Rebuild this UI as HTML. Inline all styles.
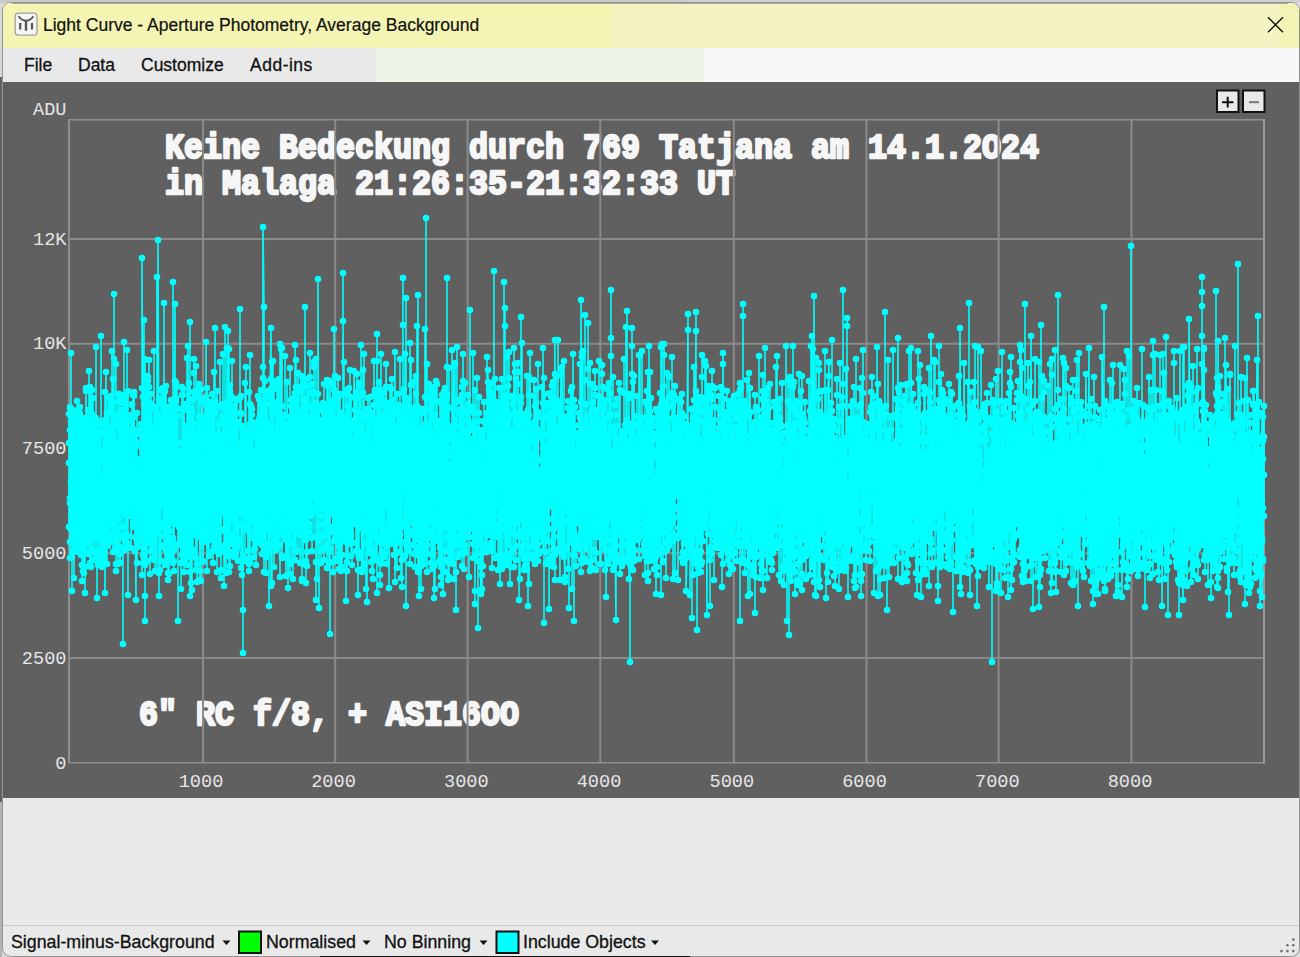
<!DOCTYPE html>
<html><head><meta charset="utf-8">
<style>
html,body{margin:0;padding:0;width:1300px;height:957px;overflow:hidden;background:#d9d9d9;}
body{position:relative;font-family:"Liberation Sans",sans-serif;}
.abs{position:absolute;}
#topbg{left:0;top:0;width:1300px;height:3px;background:linear-gradient(90deg,#c9c9c9 0,#c9c9c9 686px,#d3d0d7 686px);}
#rightbg{left:1299px;top:0;width:1px;height:957px;background:#9a9a9a;}
#win{left:2px;top:2px;width:1296px;height:953px;border:1px solid #939391;border-radius:9px;overflow:hidden;background:#e9e9e9;}
#title{left:0;top:0;width:1296px;height:45px;background:#f4f3c2;}
#titlesat{left:0;top:0;width:608px;height:45px;background:#f4f4b3;}
#titlesat2{left:1276px;top:0;width:20px;height:45px;background:#f3f3b6;}
#titletext{left:40px;top:12px;font-size:17.5px;color:#111;-webkit-text-stroke:0.2px #111;white-space:nowrap;letter-spacing:0px;}
#menu{left:0;top:45px;width:1296px;height:34px;background:#f7f7f7;}
#menu1{left:0;top:0;width:373px;height:34px;background:#e9e9e9;}
#menu2{left:373px;top:0;width:328px;height:34px;background:#eef3e8;}
.mi{top:7px;font-size:17.5px;color:#111;-webkit-text-stroke:0.3px #111;white-space:nowrap;}
#plot{left:0;top:79px;width:1296px;height:716px;background:#606060;overflow:hidden;}
#status{left:0;top:877px;width:1296px;height:76px;}
.st{font-size:17.8px;color:#111;-webkit-text-stroke:0.3px #111;white-space:nowrap;top:932px;}
</style></head>
<body>
<div class="abs" id="topbg"></div>
<div class="abs" style="left:0;top:77px;width:3px;height:725px;background:#616161"></div>
<div class="abs" style="left:0;top:802px;width:2px;height:155px;background:#b2b4b2"></div>
<div class="abs" style="left:1299px;top:10px;width:1px;height:937px;background:#7d7d7d"></div>
<div class="abs" style="left:12px;top:3px;width:1276px;height:1px;background:#a9a994;z-index:5"></div>
<div class="abs" style="left:320px;top:956px;width:370px;height:1px;background:#151515;z-index:5"></div>
<div class="abs" id="win">
  <div class="abs" id="title">
    <div class="abs" id="titlesat"></div>
    <div class="abs" id="titlesat2"></div>
    <svg class="abs" style="left:11px;top:9px" width="24" height="24" viewBox="0 0 24 24">
      <rect x="1.2" y="1.2" width="21.8" height="22" rx="3.2" fill="#f6f6f6" stroke="#a0a0a0" stroke-width="1.3"/>
      <path d="M4.6 4.2 Q7.5 8.3 12 8.8 Q16.5 8.3 19.4 4.2" fill="none" stroke="#555" stroke-width="1.9"/>
      <path d="M12 8 V18.8" stroke="#555" stroke-width="2.4"/>
      <path d="M6.2 11 V17.6 M18 11 V17.6" stroke="#555" stroke-width="2.2"/>
    </svg>
    <div class="abs" id="titletext">Light Curve - Aperture Photometry, Average Background</div>
    <svg class="abs" style="left:1264px;top:13px" width="18" height="18" viewBox="0 0 18 18">
      <path d="M1 1.2 L16 16.2 M16 1.2 L1 16.2" stroke="#111" stroke-width="1.4"/>
    </svg>
  </div>
  <div class="abs" id="menu">
    <div class="abs" id="menu1"></div>
    <div class="abs" id="menu2"></div>
    <div class="abs mi" style="left:21px">File</div>
    <div class="abs mi" style="left:75px">Data</div>
    <div class="abs mi" style="left:138px">Customize</div>
    <div class="abs mi" style="left:247px;letter-spacing:0.5px">Add-ins</div>
  </div>
  <div class="abs" id="plot">
  </div>
</div>

<div class="abs" style="left:3px;top:925px;width:1295px;height:1px;background:#c9c9c9"></div>
<div class="abs st" style="left:11px">Signal-minus-Background</div>
<div class="abs st" style="left:266px">Normalised</div>
<div class="abs st" style="left:384px">No Binning</div>
<div class="abs st" style="left:523px">Include Objects</div>
<svg class="abs" style="left:0;top:900px" width="1300" height="57" viewBox="0 900 1300 57">
  <path d="M222.5 940.5H230.5L226.5 945Z M362.5 940.5H370.5L366.5 945Z M479.5 940.5H487.5L483.5 945Z M651 940.5H659L655 945Z" fill="#111"/>
  <rect x="239" y="931.5" width="22" height="21.5" fill="#00ff00" stroke="#111" stroke-width="2"/>
  <rect x="496.5" y="931.5" width="22" height="21.5" fill="#00ffff" stroke="#111" stroke-width="2"/>
  <g fill="#6a6a6a">
    <circle cx="1293.3" cy="939.6" r="1.3"/><circle cx="1287.4" cy="945.3" r="1.3"/><circle cx="1293.3" cy="945.3" r="1.3"/>
    <circle cx="1281.5" cy="951.1" r="1.3"/><circle cx="1287.4" cy="951.1" r="1.3"/><circle cx="1293.3" cy="951.1" r="1.3"/>
  </g>
</svg>

<svg class="abs" id="chart" style="left:0;top:0" width="1300" height="957" viewBox="0 0 1300 957">
  <defs><clipPath id="pc"><rect x="3" y="82" width="1296" height="716"/></clipPath></defs>
  <g clip-path="url(#pc)">
  <g font-family="Liberation Mono" font-size="18.6" fill="#e6e6e6">
    <text x="66.5" y="114.5" text-anchor="end">ADU</text>
    <text x="66.5" y="244.5" text-anchor="end">12K</text>
    <text x="66.5" y="349" text-anchor="end">10K</text>
    <text x="66.5" y="454" text-anchor="end">7500</text>
    <text x="66.5" y="558.5" text-anchor="end">5000</text>
    <text x="66.5" y="663.5" text-anchor="end">2500</text>
    <text x="66.5" y="768.5" text-anchor="end">0</text>
    <g text-anchor="middle">
    <text x="201" y="786.5">1000</text><text x="333.5" y="786.5">2000</text><text x="466.3" y="786.5">3000</text>
    <text x="599" y="786.5">4000</text><text x="731.8" y="786.5">5000</text><text x="864.5" y="786.5">6000</text>
    <text x="997.3" y="786.5">7000</text><text x="1130" y="786.5">8000</text>
    </g>
  </g>
  <g font-family="Liberation Mono" font-weight="bold" font-size="31.67" fill="#f6f6f6" stroke="#f6f6f6" stroke-width="2.2" stroke-linejoin="round">
    <text transform="translate(165,158) scale(1,1.1)" xml:space="preserve">Keine Bedeckung durch 769 Tatjana am 14.1.2O24</text>
    <text transform="translate(165,194) scale(1,1.1)" xml:space="preserve">in Malaga 21:26:35-21:32:33 UT</text>
    <text transform="translate(139,725) scale(1,1.1)" xml:space="preserve">6" RC f/8, + ASI16OO</text>
  </g>
  <g stroke="#8a8a8a" stroke-width="2" fill="none">
    <path d="M203 119V763 M335.2 119V763 M467.6 119V763 M600.3 119V763 M733.8 119V763 M866.5 119V763 M998.6 119V763 M1131.5 119V763 M69 239H1264 M69 343.75H1264 M69 448.5H1264 M69 553.25H1264 M69 658H1264"/>
    <path d="M69 119.7H1264 M69 762.7H1264" stroke="#8c918a" stroke-width="1.6"/>
    <path d="M69 119V763" stroke="#8e8e8e"/>
    <path d="M1264 119V763.5" stroke="#9a9a9a"/>
  </g>
  <g id="data"><path d="M69 463 69 414 69 443 69 527 70 498 70 407 70 558 70 408 70 430 70 503 70 542 71 529 71 353 71 484 71 464 71 482 71 414 71 422 71 443 72 409 72 523 72 515 72 458 72 557 72 591 72 511 73 477 73 412 73 468 73 499 73 484 73 525 73 544 73 551 74 427 74 530 74 484 74 578 74 422 74 519 74 518 75 443 75 485 75 416 75 481 75 465 75 545 75 490 75 470 76 440 76 534 76 478 76 530 76 514 76 511 76 535 77 445 77 484 77 401 77 460 77 491 77 487 77 497 77 542 78 495 78 513 78 474 78 552 78 410 78 521 78 429 78 527 79 411 79 459 79 547 79 412 79 422 79 433 79 460 80 540 80 536 80 414 80 465 80 540 80 407 80 452 80 447 81 482 81 483 81 528 81 555 81 430 81 442 81 477 82 502 82 419 82 581 82 516 82 565 82 544 82 426 82 464 83 571 83 466 83 420 83 507 83 493 83 441 83 498 84 496 84 435 84 418 84 547 84 427 84 573 84 455 84 424 85 535 85 490 85 433 85 567 85 593 85 463 85 460 86 439 86 525 86 539 86 507 86 553 86 460 86 388 86 391 87 494 87 501 87 463 87 515 87 508 87 476 87 543 88 410 88 430 88 455 88 465 88 419 88 482 88 438 88 554 89 512 89 497 89 371 89 514 89 452 89 455 89 446 90 457 90 387 90 494 90 540 90 508 90 563 90 537 90 391 91 430 91 567 91 486 91 497 91 452 91 432 91 516 92 414 92 461 92 468 92 436 92 390 92 549 92 500 92 434 93 437 93 455 93 398 93 424 93 427 93 418 93 482 93 417 94 559 94 531 94 560 94 531 94 527 94 522 94 474 95 559 95 471 95 533 95 446 95 553 95 538 95 427 95 517 96 418 96 438 96 443 96 530 96 451 96 347 96 434 97 431 97 436 97 598 97 493 97 485 97 552 97 455 97 429 98 524 98 450 98 445 98 565 98 443 98 421 98 534 99 472 99 492 99 478 99 533 99 482 99 459 99 422 99 445 100 535 100 435 100 432 100 540 100 525 100 559 100 457 101 512 101 336 101 424 101 499 101 513 101 485 101 453 101 549 102 503 102 556 102 478 102 567 102 512 102 499 102 499 103 526 103 536 103 462 103 505 103 565 103 425 103 451 103 548 104 551 104 425 104 561 104 531 104 550 104 487 104 421 105 527 105 535 105 392 105 469 105 545 105 479 105 420 105 593 106 372 106 542 106 443 106 434 106 432 106 455 106 476 107 564 107 487 107 445 107 523 107 513 107 461 107 462 107 413 108 546 108 538 108 430 108 489 108 441 108 398 108 432 109 427 109 412 109 505 109 449 109 537 109 452 109 454 109 452 110 470 110 489 110 506 110 542 110 427 110 486 110 493 110 488 111 470 111 481 111 456 111 404 111 524 111 396 111 442 112 408 112 498 112 449 112 429 112 427 112 351 112 533 112 413 113 532 113 552 113 463 113 480 113 402 113 518 113 379 114 506 114 294 114 535 114 494 114 359 114 495 114 509 114 425 115 512 115 550 115 536 115 422 115 443 115 508 115 495 116 542 116 564 116 571 116 459 116 364 116 540 116 415 116 484 117 529 117 442 117 514 117 463 117 536 117 478 117 466 118 474 118 499 118 444 118 426 118 519 118 549 118 564 118 394 119 394 119 417 119 402 119 474 119 483 119 464 119 401 120 554 120 463 120 490 120 547 120 483 120 470 120 563 120 433 121 412 121 456 121 428 121 410 121 430 121 432 121 506 122 512 122 450 122 526 122 396 122 478 122 527 122 403 122 535 123 469 123 538 123 417 123 463 123 414 123 644 123 436 124 465 124 445 124 395 124 513 124 342 124 436 124 438 124 514 125 396 125 541 125 470 125 427 125 550 125 430 125 401 125 424 126 463 126 477 126 396 126 450 126 436 126 547 126 441 127 510 127 350 127 490 127 492 127 503 127 449 127 543 127 485 128 536 128 453 128 391 128 595 128 484 128 446 128 474 129 475 129 455 129 496 129 436 129 421 129 439 129 448 129 491 130 456 130 516 130 446 130 487 130 497 130 446 130 461 131 483 131 437 131 513 131 415 131 430 131 500 131 437 131 548 132 497 132 404 132 511 132 458 132 438 132 405 132 450 133 505 133 527 133 513 133 523 133 488 133 395 133 505 133 497 134 489 134 492 134 394 134 417 134 496 134 396 134 392 135 508 135 464 135 551 135 430 135 517 135 516 135 537 135 490 136 600 136 431 136 481 136 430 136 498 136 513 136 442 137 542 137 511 137 446 137 413 137 563 137 434 137 513 137 493 138 547 138 463 138 523 138 463 138 489 138 459 138 542 139 490 139 478 139 473 139 508 139 540 139 502 139 520 139 526 140 535 140 515 140 430 140 445 140 538 140 538 140 526 141 433 141 501 141 431 141 433 141 472 141 470 141 424 141 518 142 575 142 492 142 468 142 533 142 388 142 460 142 531 142 258 143 531 143 492 143 397 143 555 143 563 143 541 143 505 144 547 144 320 144 530 144 534 144 403 144 542 144 390 144 455 145 490 145 359 145 596 145 396 145 402 145 621 145 565 146 487 146 434 146 435 146 534 146 396 146 410 146 562 146 485 147 561 147 454 147 391 147 376 147 442 147 445 147 465 148 454 148 377 148 381 148 482 148 490 148 543 148 429 148 472 149 519 149 533 149 360 149 500 149 387 149 541 149 534 150 511 150 574 150 403 150 517 150 411 150 458 150 410 150 504 151 536 151 434 151 394 151 551 151 437 151 447 151 527 152 528 152 427 152 517 152 445 152 532 152 409 152 548 152 509 153 558 153 501 153 444 153 532 153 508 153 447 153 473 154 512 154 351 154 480 154 427 154 485 154 450 154 560 154 452 155 484 155 459 155 436 155 498 155 571 155 407 155 438 156 522 156 418 156 503 156 527 156 428 156 520 156 506 156 502 157 571 157 512 157 277 157 473 157 527 157 464 157 518 157 413 158 419 158 445 158 467 158 475 158 533 158 520 158 240 159 496 159 443 159 573 159 463 159 399 159 458 159 596 159 454 160 527 160 432 160 570 160 506 160 417 160 482 160 475 161 403 161 501 161 526 161 480 161 547 161 561 161 473 161 390 162 466 162 483 162 499 162 468 162 433 162 465 162 421 163 388 163 504 163 461 163 474 163 525 163 443 163 417 163 536 164 476 164 468 164 492 164 523 164 303 164 435 164 545 165 469 165 525 165 477 165 391 165 565 165 536 165 523 165 428 166 386 166 551 166 504 166 523 166 489 166 409 166 561 167 534 167 490 167 472 167 468 167 514 167 531 167 500 167 416 168 442 168 559 168 580 168 536 168 407 168 573 168 412 169 478 169 493 169 438 169 465 169 574 169 553 169 482 169 531 170 416 170 545 170 481 170 502 170 446 170 531 170 556 171 489 171 400 171 491 171 497 171 429 171 446 171 421 171 426 172 494 172 433 172 523 172 515 172 486 172 491 172 403 173 538 173 415 173 484 173 543 173 282 173 405 173 563 173 411 174 550 174 524 174 469 174 426 174 571 174 425 174 472 174 561 175 304 175 469 175 490 175 465 175 480 175 381 175 515 176 453 176 520 176 431 176 398 176 383 176 515 176 476 176 402 177 416 177 470 177 408 177 513 177 508 177 387 177 484 178 471 178 416 178 473 178 505 178 545 178 457 178 621 178 457 179 451 179 544 179 527 179 519 179 502 179 456 179 470 180 492 180 443 180 541 180 516 180 524 180 409 180 496 180 472 181 563 181 465 181 451 181 589 181 501 181 459 181 477 182 539 182 456 182 555 182 395 182 544 182 508 182 527 182 387 183 500 183 443 183 389 183 395 183 557 183 467 183 477 184 450 184 494 184 509 184 554 184 572 184 450 184 558 184 404 185 507 185 535 185 562 185 426 185 520 185 533 185 465 186 551 186 498 186 440 186 435 186 452 186 526 186 548 186 552 187 517 187 548 187 502 187 448 187 565 187 358 187 410 188 346 188 511 188 556 188 492 188 440 188 478 188 478 188 556 189 518 189 383 189 402 189 450 189 449 189 511 189 553 189 429 190 572 190 557 190 419 190 454 190 443 190 322 190 596 191 583 191 408 191 410 191 525 191 408 191 505 191 516 191 455 192 590 192 495 192 521 192 465 192 489 192 440 192 412 193 520 193 503 193 392 193 530 193 552 193 550 193 399 193 486 194 535 194 474 194 466 194 359 194 392 194 373 194 531 195 450 195 494 195 426 195 456 195 446 195 459 195 535 195 424 196 570 196 446 196 366 196 492 196 391 196 488 196 558 197 495 197 434 197 564 197 501 197 582 197 476 197 484 197 468 198 529 198 474 198 519 198 434 198 395 198 438 198 486 199 384 199 489 199 417 199 537 199 439 199 506 199 465 199 389 200 580 200 456 200 471 200 512 200 476 200 571 200 519 201 458 201 581 201 475 201 420 201 389 201 401 201 420 201 529 202 438 202 445 202 428 202 399 202 438 202 440 202 517 203 464 203 531 203 540 203 561 203 416 203 430 203 542 203 562 204 526 204 532 204 540 204 420 204 509 204 469 204 538 204 437 205 480 205 536 205 502 205 417 205 402 205 452 205 505 206 427 206 488 206 499 206 405 206 500 206 342 206 510 206 397 207 571 207 477 207 388 207 541 207 542 207 520 207 539 208 511 208 455 208 513 208 497 208 408 208 441 208 480 208 536 209 556 209 466 209 494 209 411 209 457 209 459 209 539 210 484 210 402 210 429 210 525 210 405 210 449 210 518 210 500 211 477 211 540 211 472 211 414 211 470 211 423 211 483 212 474 212 528 212 415 212 516 212 408 212 494 212 441 212 394 213 515 213 415 213 406 213 551 213 464 213 563 213 477 214 515 214 519 214 547 214 533 214 446 214 403 214 503 214 372 215 401 215 503 215 413 215 542 215 434 215 328 215 535 216 449 216 513 216 538 216 524 216 537 216 457 216 486 216 520 217 476 217 507 217 477 217 440 217 391 217 572 217 465 218 470 218 471 218 406 218 551 218 465 218 457 218 407 218 445 219 424 219 554 219 483 219 519 219 511 219 505 219 483 220 471 220 480 220 552 220 547 220 479 220 422 220 362 220 451 221 435 221 570 221 513 221 578 221 483 221 459 221 481 221 531 222 469 222 505 222 483 222 451 222 407 222 503 222 485 223 480 223 404 223 354 223 461 223 455 223 493 223 416 223 504 224 529 224 420 224 505 224 416 224 464 224 511 224 586 225 472 225 552 225 408 225 327 225 509 225 545 225 434 225 509 226 573 226 461 226 507 226 518 226 462 226 405 226 405 227 546 227 481 227 463 227 429 227 348 227 479 227 456 227 462 228 505 228 468 228 526 228 348 228 331 228 537 228 556 229 349 229 516 229 401 229 400 229 400 229 507 229 572 229 507 230 385 230 430 230 566 230 439 230 399 230 392 230 444 231 430 231 418 231 476 231 544 231 420 231 534 231 520 231 396 232 476 232 461 232 406 232 499 232 361 232 417 232 517 233 501 233 543 233 410 233 542 233 552 233 416 233 501 233 457 234 437 234 536 234 557 234 494 234 535 234 412 234 440 235 447 235 449 235 555 235 542 235 399 235 550 235 484 235 521 236 399 236 552 236 527 236 521 236 457 236 441 236 429 236 493 237 546 237 454 237 400 237 549 237 453 237 539 237 497 238 561 238 458 238 422 238 460 238 469 238 462 238 484 238 505 239 482 239 483 239 524 239 542 239 542 239 477 239 504 240 448 240 398 240 510 240 309 240 413 240 514 240 481 240 501 241 458 241 414 241 568 241 396 241 462 241 413 241 450 242 444 242 506 242 426 242 525 242 496 242 446 242 575 242 559 243 430 243 437 243 653 243 610 243 443 243 556 243 436 244 480 244 440 244 477 244 516 244 456 244 490 244 472 244 492 245 528 245 477 245 435 245 383 245 429 245 561 245 457 246 511 246 437 246 367 246 530 246 495 246 500 246 524 246 481 247 478 247 503 247 431 247 496 247 464 247 499 247 471 248 551 248 486 248 526 248 482 248 559 248 455 248 435 248 488 249 571 249 454 249 564 249 392 249 529 249 517 249 489 250 562 250 355 250 511 250 404 250 424 250 483 250 443 250 535 251 406 251 483 251 509 251 432 251 441 251 538 251 495 252 453 252 409 252 483 252 436 252 415 252 424 252 422 252 504 253 522 253 460 253 430 253 506 253 477 253 550 253 435 253 514 254 465 254 557 254 457 254 502 254 466 254 538 254 496 255 538 255 515 255 549 255 505 255 507 255 425 255 423 255 429 256 426 256 485 256 565 256 432 256 451 256 432 256 425 257 428 257 485 257 463 257 466 257 528 257 507 257 543 257 435 258 493 258 525 258 422 258 465 258 450 258 396 258 533 259 486 259 541 259 490 259 419 259 542 259 462 259 399 259 496 260 414 260 498 260 496 260 483 260 520 260 513 260 478 261 390 261 497 261 540 261 421 261 532 261 404 261 448 261 449 262 496 262 503 262 554 262 545 262 502 262 527 262 404 263 483 263 378 263 418 263 539 263 367 263 534 263 554 263 227 264 307 264 551 264 549 264 471 264 459 264 572 264 457 265 522 265 456 265 490 265 478 265 496 265 508 265 381 265 425 266 573 266 489 266 512 266 557 266 530 266 523 266 397 267 444 267 426 267 463 267 505 267 514 267 463 267 515 267 498 268 424 268 552 268 391 268 485 268 464 268 472 268 456 268 527 269 544 269 606 269 524 269 428 269 459 269 466 269 548 270 512 270 437 270 404 270 486 270 492 270 501 270 476 270 397 271 328 271 513 271 586 271 545 271 389 271 394 271 379 272 583 272 503 272 435 272 439 272 412 272 518 272 462 272 362 273 361 273 531 273 413 273 482 273 470 273 438 273 529 274 512 274 381 274 567 274 544 274 499 274 474 274 482 274 438 275 540 275 526 275 431 275 456 275 486 275 530 275 493 276 529 276 406 276 450 276 536 276 550 276 462 276 484 276 463 277 411 277 402 277 446 277 500 277 389 277 492 277 522 278 481 278 491 278 416 278 425 278 545 278 385 278 495 278 466 279 404 279 379 279 419 279 435 279 424 279 498 279 386 280 577 280 438 280 520 280 545 280 515 280 534 280 457 280 344 281 512 281 439 281 429 281 349 281 481 281 469 281 419 282 444 282 348 282 556 282 558 282 406 282 513 282 529 282 523 283 482 283 494 283 532 283 498 283 527 283 453 283 458 284 415 284 428 284 490 284 516 284 428 284 443 284 426 284 424 285 440 285 472 285 536 285 460 285 356 285 504 285 449 285 477 286 576 286 462 286 457 286 488 286 540 286 461 286 425 287 558 287 538 287 509 287 492 287 516 287 471 287 537 287 382 288 499 288 435 288 499 288 448 288 436 288 468 288 588 289 417 289 473 289 543 289 490 289 473 289 468 289 497 289 506 290 509 290 368 290 523 290 574 290 467 290 515 290 564 291 433 291 453 291 461 291 489 291 525 291 400 291 406 291 517 292 509 292 490 292 561 292 402 292 426 292 464 292 421 293 579 293 508 293 487 293 443 293 510 293 427 293 408 293 529 294 506 294 504 294 398 294 529 294 545 294 492 294 459 295 560 295 393 295 521 295 455 295 530 295 421 295 345 295 458 296 360 296 526 296 552 296 448 296 499 296 518 296 387 297 494 297 483 297 441 297 464 297 400 297 521 297 512 297 503 298 532 298 446 298 551 298 503 298 451 298 373 298 504 299 504 299 463 299 457 299 388 299 425 299 497 299 489 299 492 300 533 300 429 300 523 300 535 300 484 300 503 300 563 300 419 301 473 301 492 301 392 301 447 301 527 301 510 301 412 302 386 302 388 302 410 302 534 302 579 302 505 302 581 302 376 303 564 303 381 303 526 303 527 303 490 303 530 303 410 304 452 304 533 304 410 304 444 304 516 304 420 304 409 304 442 305 385 305 412 305 400 305 505 305 307 305 468 305 434 306 536 306 493 306 512 306 399 306 583 306 540 306 561 306 479 307 566 307 521 307 515 307 379 307 552 307 528 307 405 308 483 308 386 308 445 308 512 308 465 308 505 308 436 308 517 309 516 309 526 309 532 309 524 309 418 309 422 309 480 310 448 310 493 310 353 310 506 310 377 310 516 310 393 310 393 311 513 311 430 311 509 311 462 311 427 311 454 311 408 312 436 312 384 312 538 312 463 312 514 312 551 312 450 312 445 313 449 313 392 313 439 313 496 313 498 313 433 313 406 314 433 314 367 314 497 314 447 314 537 314 362 314 460 314 488 315 409 315 507 315 455 315 438 315 462 315 471 315 448 316 496 316 600 316 359 316 407 316 418 316 403 316 485 316 562 317 435 317 492 317 446 317 418 317 503 317 579 317 415 317 456 318 394 318 513 318 457 318 406 318 446 318 491 318 279 319 608 319 525 319 496 319 540 319 424 319 534 319 476 319 511 320 496 320 451 320 472 320 447 320 492 320 475 320 421 321 516 321 458 321 425 321 563 321 420 321 494 321 506 321 434 322 424 322 451 322 406 322 550 322 493 322 451 322 410 323 451 323 470 323 506 323 446 323 479 323 411 323 403 323 456 324 436 324 560 324 536 324 473 324 458 324 384 324 422 325 429 325 548 325 501 325 509 325 430 325 534 325 406 325 524 326 505 326 444 326 461 326 417 326 412 326 526 326 420 327 509 327 483 327 435 327 380 327 490 327 418 327 568 327 529 328 386 328 512 328 475 328 480 328 535 328 544 328 412 329 552 329 563 329 420 329 412 329 424 329 497 329 512 329 478 330 381 330 492 330 634 330 527 330 484 330 548 330 478 331 434 331 485 331 402 331 419 331 490 331 429 331 514 331 424 332 500 332 481 332 404 332 468 332 442 332 431 332 506 332 402 333 572 333 532 333 400 333 527 333 384 333 562 333 491 334 488 334 459 334 490 334 492 334 529 334 390 334 541 334 329 335 534 335 455 335 395 335 511 335 496 335 376 335 456 336 454 336 493 336 559 336 526 336 420 336 456 336 437 336 425 337 426 337 520 337 395 337 419 337 406 337 429 337 481 338 505 338 378 338 445 338 528 338 561 338 537 338 490 338 533 339 445 339 546 339 569 339 396 339 515 339 491 339 528 340 555 340 474 340 461 340 557 340 420 340 394 340 467 340 483 341 542 341 534 341 507 341 431 341 571 341 413 341 465 342 567 342 555 342 469 342 450 342 514 342 416 342 526 342 485 343 522 343 470 343 522 343 540 343 427 343 273 343 321 344 474 344 438 344 362 344 461 344 527 344 517 344 459 344 517 345 534 345 452 345 429 345 523 345 496 345 526 345 485 346 464 346 433 346 542 346 394 346 601 346 504 346 419 346 421 347 472 347 531 347 447 347 390 347 562 347 483 347 571 348 429 348 406 348 556 348 451 348 416 348 544 348 511 348 451 349 507 349 483 349 388 349 475 349 469 349 535 349 532 349 426 350 541 350 453 350 470 350 464 350 370 350 440 350 471 351 495 351 486 351 452 351 397 351 494 351 556 351 535 351 430 352 449 352 475 352 515 352 565 352 479 352 423 352 477 353 441 353 518 353 520 353 454 353 495 353 483 353 543 353 467 354 514 354 462 354 523 354 430 354 506 354 486 354 371 355 424 355 440 355 524 355 420 355 518 355 398 355 410 355 461 356 423 356 479 356 452 356 518 356 392 356 437 356 551 357 520 357 460 357 425 357 515 357 398 357 524 357 374 357 421 358 595 358 482 358 570 358 554 358 468 358 417 358 433 359 503 359 386 359 552 359 415 359 383 359 558 359 415 359 436 360 440 360 430 360 395 360 476 360 523 360 413 360 490 361 522 361 345 361 528 361 526 361 511 361 501 361 515 361 513 362 569 362 523 362 426 362 572 362 494 362 434 362 569 363 528 363 451 363 417 363 370 363 508 363 419 363 393 363 504 364 472 364 415 364 354 364 493 364 564 364 443 364 416 364 479 365 531 365 485 365 434 365 501 365 491 365 530 365 512 366 524 366 521 366 419 366 589 366 444 366 438 366 484 366 461 367 543 367 470 367 486 367 460 367 462 367 602 367 409 368 464 368 442 368 510 368 436 368 471 368 398 368 497 368 398 369 550 369 460 369 553 369 546 369 468 369 550 369 410 370 535 370 397 370 540 370 519 370 414 370 474 370 431 370 397 371 562 371 445 371 418 371 448 371 462 371 518 371 549 372 413 372 473 372 514 372 571 372 466 372 552 372 451 372 483 373 533 373 579 373 486 373 561 373 454 373 480 373 532 374 405 374 464 374 537 374 431 374 361 374 430 374 504 374 395 375 560 375 490 375 527 375 500 375 475 375 390 375 505 376 557 376 423 376 560 376 495 376 525 376 497 376 419 376 468 377 489 377 334 377 420 377 520 377 593 377 484 377 361 378 539 378 406 378 487 378 498 378 398 378 451 378 467 378 542 379 401 379 395 379 423 379 382 379 474 379 508 379 468 380 537 380 466 380 575 380 585 380 441 380 508 380 390 380 469 381 431 381 463 381 415 381 354 381 402 381 421 381 564 381 521 382 484 382 513 382 520 382 431 382 563 382 552 382 447 383 426 383 528 383 393 383 431 383 477 383 539 383 502 383 401 384 418 384 543 384 436 384 400 384 465 384 538 384 557 385 553 385 507 385 425 385 425 385 405 385 458 385 532 385 506 386 434 386 422 386 502 386 442 386 418 386 387 386 364 387 450 387 476 387 473 387 505 387 564 387 546 387 430 387 458 388 463 388 544 388 522 388 482 388 405 388 493 388 538 389 448 389 403 389 445 389 405 389 482 389 507 389 501 389 588 390 428 390 497 390 450 390 408 390 387 390 424 390 511 391 389 391 463 391 489 391 473 391 544 391 420 391 517 391 534 392 379 392 525 392 424 392 499 392 472 392 451 392 541 393 487 393 451 393 459 393 400 393 431 393 531 393 407 393 476 394 473 394 509 394 476 394 455 394 429 394 435 394 555 395 352 395 493 395 450 395 425 395 479 395 414 395 413 395 582 396 507 396 499 396 519 396 436 396 427 396 533 396 448 396 504 397 553 397 394 397 489 397 542 397 568 397 406 397 474 398 460 398 520 398 452 398 500 398 456 398 461 398 411 398 524 399 543 399 424 399 412 399 453 399 405 399 412 399 443 400 497 400 515 400 359 400 552 400 482 400 510 400 535 400 485 401 521 401 478 401 430 401 462 401 578 401 474 401 527 402 502 402 429 402 418 402 560 402 587 402 416 402 426 402 448 403 393 403 438 403 409 403 278 403 325 403 462 403 491 404 463 404 527 404 451 404 408 404 503 404 389 404 466 404 459 405 556 405 542 405 465 405 422 405 473 405 398 405 354 406 447 406 544 406 468 406 485 406 298 406 606 406 465 406 446 407 473 407 503 407 425 407 534 407 420 407 543 407 547 408 529 408 496 408 449 408 442 408 407 408 411 408 433 408 404 409 551 409 420 409 398 409 491 409 500 409 416 409 508 410 436 410 564 410 432 410 464 410 343 410 520 410 535 410 420 411 385 411 414 411 418 411 467 411 516 411 360 411 516 412 453 412 439 412 485 412 440 412 427 412 483 412 433 412 425 413 421 413 468 413 408 413 501 413 545 413 499 413 531 413 495 414 502 414 507 414 524 414 382 414 554 414 432 414 514 415 469 415 426 415 457 415 447 415 428 415 529 415 567 415 512 416 414 416 510 416 422 416 376 416 540 416 394 416 502 417 484 417 406 417 535 417 409 417 326 417 519 417 526 417 487 418 295 418 555 418 552 418 572 418 547 418 495 418 441 419 476 419 461 419 480 419 596 419 507 419 531 419 485 419 408 420 494 420 517 420 567 420 527 420 525 420 481 420 472 421 481 421 457 421 566 421 515 421 431 421 589 421 409 421 462 422 429 422 535 422 499 422 471 422 413 422 504 422 563 423 559 423 437 423 517 423 537 423 478 423 429 423 472 423 538 424 482 424 515 424 554 424 564 424 493 424 528 424 432 425 409 425 445 425 500 425 539 425 329 425 458 425 503 425 397 426 398 426 503 426 469 426 549 426 218 426 424 426 539 427 545 427 512 427 364 427 448 427 572 427 476 427 473 427 483 428 445 428 464 428 475 428 490 428 428 428 554 428 498 428 443 429 538 429 467 429 384 429 490 429 443 429 462 429 509 430 522 430 430 430 432 430 468 430 410 430 434 430 399 430 410 431 391 431 533 431 441 431 395 431 531 431 563 431 459 432 569 432 419 432 387 432 397 432 506 432 514 432 406 432 477 433 447 433 509 433 512 433 521 433 555 433 464 433 520 434 437 434 598 434 541 434 479 434 401 434 392 434 566 434 448 435 537 435 499 435 514 435 484 435 589 435 414 435 468 436 529 436 519 436 424 436 454 436 540 436 511 436 381 436 427 437 470 437 384 437 468 437 471 437 496 437 421 437 486 438 438 438 537 438 498 438 422 438 499 438 434 438 538 438 497 439 504 439 450 439 453 439 523 439 430 439 478 439 562 440 559 440 548 440 478 440 448 440 401 440 543 440 529 440 493 441 468 441 456 441 438 441 403 441 577 441 585 441 567 442 482 442 395 442 550 442 467 442 500 442 497 442 509 442 521 443 594 443 561 443 482 443 483 443 450 443 470 443 397 443 499 444 419 444 512 444 441 444 392 444 419 444 515 444 472 445 560 445 390 445 572 445 513 445 448 445 403 445 388 445 528 446 522 446 417 446 497 446 520 446 418 446 431 446 479 447 367 447 278 447 449 447 398 447 394 447 397 447 447 447 551 448 518 448 407 448 580 448 453 448 537 448 498 448 483 449 577 449 497 449 563 449 435 449 368 449 501 449 426 449 487 450 560 450 523 450 523 450 534 450 561 450 469 450 470 451 515 451 496 451 464 451 553 451 534 451 532 451 433 451 560 452 508 452 496 452 455 452 440 452 350 452 430 452 528 453 564 453 409 453 516 453 455 453 530 453 493 453 484 453 438 454 366 454 483 454 579 454 485 454 488 454 537 454 478 455 504 455 521 455 435 455 545 455 437 455 363 455 476 455 420 456 478 456 502 456 499 456 572 456 610 456 485 456 426 457 525 457 484 457 347 457 400 457 402 457 449 457 452 457 448 458 468 458 478 458 510 458 514 458 557 458 464 458 443 459 465 459 529 459 436 459 542 459 413 459 485 459 473 459 508 460 410 460 552 460 545 460 500 460 511 460 510 460 483 460 536 461 399 461 456 461 530 461 427 461 447 461 481 461 438 462 408 462 395 462 399 462 504 462 566 462 517 462 508 462 387 463 489 463 354 463 381 463 441 463 434 463 554 463 445 464 430 464 538 464 480 464 569 464 521 464 530 464 410 464 528 465 449 465 473 465 494 465 545 465 383 465 553 465 551 466 496 466 437 466 507 466 528 466 474 466 455 466 489 466 464 467 520 467 487 467 494 467 475 467 474 467 413 467 537 468 451 468 443 468 404 468 420 468 528 468 432 468 475 468 395 469 410 469 439 469 472 469 577 469 481 469 530 469 413 470 498 470 408 470 446 470 424 470 310 470 491 470 474 470 537 471 445 471 490 471 477 471 484 471 454 471 492 471 510 472 439 472 513 472 523 472 441 472 528 472 499 472 480 472 455 473 558 473 353 473 446 473 515 473 430 473 407 473 544 474 488 474 422 474 474 474 462 474 427 474 458 474 487 474 454 475 466 475 591 475 604 475 457 475 390 475 422 475 517 475 413 476 469 476 539 476 496 476 523 476 555 476 446 476 445 477 429 477 535 477 378 477 444 477 524 477 546 477 441 477 523 478 561 478 443 478 519 478 468 478 527 478 628 478 492 479 518 479 397 479 502 479 413 479 512 479 437 479 421 479 442 480 507 480 529 480 445 480 441 480 498 480 447 480 541 481 594 481 567 481 553 481 534 481 430 481 484 481 436 481 433 482 524 482 474 482 477 482 589 482 524 482 575 482 488 483 524 483 530 483 430 483 496 483 566 483 442 483 511 483 513 484 528 484 454 484 503 484 402 484 421 484 483 484 442 485 552 485 508 485 423 485 508 485 545 485 465 485 464 485 549 486 547 486 504 486 529 486 524 486 549 486 444 486 497 487 552 487 419 487 413 487 456 487 357 487 429 487 500 487 445 488 531 488 500 488 420 488 382 488 370 488 475 488 474 489 498 489 420 489 535 489 529 489 456 489 517 489 512 489 389 490 495 490 383 490 410 490 391 490 530 490 515 490 465 491 446 491 455 491 530 491 543 491 547 491 483 491 403 491 463 492 568 492 509 492 515 492 516 492 534 492 383 492 494 492 551 493 476 493 414 493 397 493 467 493 454 493 497 493 517 494 410 494 436 494 477 494 271 494 477 494 463 494 515 494 534 495 558 495 406 495 435 495 421 495 438 495 468 495 379 496 446 496 527 496 433 496 537 496 402 496 419 496 531 496 422 497 419 497 426 497 463 497 488 497 450 497 415 497 422 498 525 498 458 498 457 498 570 498 557 498 507 498 556 498 503 499 454 499 414 499 406 499 388 499 437 499 461 499 443 500 584 500 419 500 537 500 536 500 498 500 451 500 412 500 537 501 406 501 450 501 388 501 492 501 567 501 561 501 425 502 492 502 379 502 481 502 569 502 521 502 506 502 404 502 556 503 396 503 422 503 497 503 450 503 475 503 501 503 429 504 431 504 502 504 405 504 282 504 555 504 460 504 509 504 522 505 308 505 475 505 326 505 400 505 529 505 495 505 481 506 565 506 489 506 448 506 560 506 430 506 411 506 514 506 519 507 469 507 506 507 396 507 478 507 512 507 357 507 471 507 561 508 504 508 465 508 413 508 386 508 502 508 396 508 504 509 378 509 545 509 498 509 509 509 445 509 352 509 501 509 526 510 500 510 558 510 584 510 439 510 509 510 416 510 494 511 553 511 443 511 567 511 464 511 510 511 439 511 396 511 532 512 439 512 494 512 482 512 452 512 494 512 521 512 435 513 434 513 549 513 404 513 515 513 449 513 505 513 396 513 460 514 397 514 414 514 348 514 430 514 567 514 451 514 396 515 364 515 523 515 372 515 534 515 473 515 485 515 429 515 464 516 379 516 466 516 546 516 560 516 427 516 420 516 437 517 466 517 445 517 432 517 479 517 521 517 437 517 421 517 415 518 434 518 536 518 428 518 372 518 384 518 489 518 363 519 490 519 494 519 453 519 431 519 600 519 413 519 438 519 420 520 483 520 400 520 493 520 537 520 579 520 465 520 478 521 403 521 317 521 403 521 514 521 443 521 458 521 509 521 397 522 470 522 416 522 553 522 447 522 343 522 438 522 531 523 519 523 428 523 505 523 547 523 546 523 454 523 482 523 421 524 428 524 559 524 570 524 414 524 421 524 445 524 483 524 474 525 417 525 484 525 464 525 457 525 566 525 445 525 479 526 515 526 469 526 488 526 518 526 436 526 435 526 452 526 489 527 556 527 376 527 421 527 516 527 473 527 570 527 513 528 452 528 606 528 425 528 410 528 555 528 419 528 520 528 529 529 470 529 496 529 395 529 415 529 515 529 584 529 377 530 437 530 472 530 484 530 439 530 455 530 475 530 513 530 353 531 534 531 555 531 477 531 424 531 518 531 510 531 518 532 466 532 467 532 547 532 474 532 458 532 529 532 461 532 522 533 520 533 425 533 527 533 500 533 454 533 503 533 559 534 432 534 515 534 517 534 428 534 396 534 380 534 496 534 443 535 421 535 530 535 406 535 564 535 473 535 533 535 532 536 560 536 428 536 547 536 402 536 539 536 498 536 512 536 389 537 555 537 429 537 544 537 418 537 433 537 537 537 458 538 513 538 502 538 544 538 364 538 483 538 471 538 561 538 412 539 531 539 477 539 554 539 496 539 486 539 473 539 514 539 531 540 529 540 493 540 524 540 525 540 531 540 470 540 517 541 504 541 471 541 497 541 416 541 496 541 506 541 436 541 437 542 526 542 439 542 387 542 507 542 537 542 461 542 501 543 511 543 551 543 483 543 403 543 348 543 498 543 482 543 433 544 454 544 378 544 449 544 623 544 453 544 542 544 483 545 530 545 416 545 394 545 464 545 502 545 539 545 472 545 505 546 552 546 525 546 458 546 446 546 564 546 523 546 524 547 499 547 445 547 490 547 406 547 403 547 508 547 435 547 406 548 406 548 529 548 541 548 507 548 418 548 472 548 497 549 529 549 559 549 529 549 519 549 609 549 452 549 426 549 482 550 505 550 393 550 477 550 498 550 421 550 427 550 413 551 470 551 506 551 474 551 397 551 469 551 440 551 420 551 442 552 500 552 542 552 431 552 449 552 386 552 557 552 566 553 405 553 415 553 561 553 452 553 504 553 382 553 506 553 550 554 462 554 567 554 490 554 519 554 529 554 555 554 537 555 340 555 555 555 471 555 374 555 458 555 580 555 407 555 517 556 497 556 400 556 474 556 494 556 491 556 377 556 405 556 524 557 473 557 508 557 508 557 475 557 483 557 500 557 458 558 426 558 436 558 477 558 340 558 549 558 408 558 487 558 469 559 445 559 432 559 413 559 401 559 551 559 466 559 442 560 580 560 490 560 404 560 523 560 580 560 535 560 518 560 520 561 369 561 440 561 503 561 375 561 550 561 538 561 416 562 496 562 422 562 504 562 457 562 448 562 481 562 553 562 367 563 545 563 437 563 483 563 511 563 477 563 510 563 490 564 476 564 435 564 550 564 361 564 470 564 439 564 557 564 552 565 582 565 427 565 503 565 436 565 458 565 577 565 492 566 496 566 483 566 471 566 430 566 419 566 467 566 495 566 417 567 523 567 423 567 504 567 487 567 549 567 521 567 423 568 459 568 470 568 437 568 408 568 522 568 401 568 569 568 457 569 512 569 608 569 469 569 475 569 484 569 426 569 415 570 529 570 415 570 460 570 468 570 508 570 496 570 443 570 411 571 391 571 451 571 521 571 420 571 472 571 516 571 439 571 536 572 475 572 460 572 402 572 444 572 387 572 543 572 589 573 354 573 474 573 501 573 555 573 538 573 492 573 464 573 410 574 477 574 400 574 427 574 468 574 621 574 496 574 532 575 497 575 504 575 537 575 480 575 556 575 407 575 460 575 546 576 497 576 538 576 566 576 493 576 537 576 498 576 452 577 476 577 439 577 452 577 478 577 501 577 496 577 498 577 523 578 440 578 500 578 522 578 509 578 434 578 433 578 471 579 504 579 446 579 413 579 549 579 498 579 425 579 515 579 543 580 461 580 511 580 418 580 477 580 364 580 522 580 544 581 445 581 402 581 572 581 470 581 560 581 476 581 533 581 300 582 476 582 443 582 497 582 563 582 353 582 357 582 534 583 520 583 470 583 501 583 351 583 463 583 499 583 456 583 423 584 456 584 558 584 509 584 544 584 480 584 533 584 470 585 522 585 380 585 533 585 315 585 431 585 514 585 486 585 515 586 526 586 513 586 404 586 470 586 539 586 531 586 549 587 418 587 488 587 505 587 455 587 416 587 471 587 462 587 495 588 486 588 369 588 470 588 323 588 455 588 543 588 562 588 426 589 436 589 536 589 535 589 531 589 515 589 531 589 465 590 502 590 571 590 363 590 384 590 485 590 501 590 507 590 491 591 568 591 478 591 504 591 525 591 518 591 519 591 452 592 384 592 528 592 411 592 449 592 536 592 568 592 433 592 513 593 533 593 502 593 450 593 402 593 481 593 533 593 478 594 521 594 446 594 422 594 560 594 494 594 446 594 550 594 450 595 395 595 488 595 439 595 388 595 501 595 371 595 496 596 458 596 509 596 525 596 553 596 411 596 424 596 570 596 471 597 532 597 437 597 434 597 410 597 426 597 537 597 504 598 466 598 396 598 488 598 511 598 517 598 519 598 504 598 506 599 432 599 465 599 422 599 427 599 525 599 361 599 462 600 564 600 456 600 527 600 501 600 502 600 424 600 521 600 465 601 470 601 564 601 398 601 500 601 508 601 423 601 405 602 489 602 513 602 365 602 467 602 504 602 374 602 542 602 513 603 387 603 480 603 544 603 520 603 451 603 516 603 476 603 441 604 483 604 408 604 400 604 529 604 425 604 448 604 503 605 550 605 505 605 525 605 441 605 489 605 570 605 418 605 476 606 510 606 597 606 470 606 401 606 470 606 456 606 475 607 473 607 481 607 517 607 539 607 389 607 439 607 512 607 508 608 464 608 466 608 440 608 540 608 564 608 549 608 486 609 506 609 471 609 434 609 467 609 461 609 559 609 464 609 383 610 414 610 462 610 393 610 516 610 494 610 417 610 472 611 427 611 505 611 551 611 356 611 290 611 338 611 514 611 519 612 558 612 552 612 498 612 531 612 553 612 477 612 451 613 570 613 519 613 377 613 550 613 533 613 505 613 434 613 552 614 453 614 431 614 555 614 493 614 538 614 529 614 567 615 405 615 560 615 541 615 438 615 496 615 462 615 544 615 533 616 620 616 555 616 526 616 426 616 520 616 438 616 556 617 461 617 490 617 461 617 415 617 559 617 441 617 399 617 562 618 485 618 482 618 518 618 478 618 461 618 441 618 451 619 485 619 513 619 459 619 518 619 383 619 520 619 510 619 535 620 460 620 439 620 474 620 491 620 490 620 512 620 390 620 574 621 546 621 457 621 523 621 474 621 493 621 460 621 561 622 537 622 475 622 564 622 566 622 476 622 474 622 433 622 449 623 447 623 435 623 431 623 529 623 456 623 537 623 535 624 559 624 502 624 545 624 504 624 393 624 515 624 359 624 515 625 534 625 473 625 510 625 480 625 533 625 481 625 425 626 503 626 489 626 487 626 534 626 558 626 425 626 514 626 327 627 486 627 431 627 311 627 420 627 477 627 427 627 559 628 562 628 506 628 484 628 531 628 492 628 446 628 445 628 559 629 482 629 551 629 498 629 527 629 398 629 579 629 394 630 553 630 564 630 513 630 662 630 425 630 441 630 424 630 489 631 564 631 470 631 427 631 545 631 428 631 567 631 467 632 490 632 346 632 469 632 539 632 469 632 328 632 491 632 374 633 501 633 506 633 570 633 500 633 499 633 556 633 382 634 476 634 536 634 550 634 497 634 478 634 491 634 376 634 561 635 532 635 521 635 550 635 416 635 441 635 478 635 416 635 469 636 537 636 459 636 466 636 503 636 531 636 522 636 448 637 535 637 396 637 528 637 521 637 529 637 508 637 513 637 460 638 427 638 523 638 436 638 522 638 477 638 540 638 424 639 485 639 459 639 355 639 453 639 537 639 517 639 454 639 559 640 485 640 425 640 355 640 484 640 499 640 532 640 487 641 493 641 460 641 418 641 454 641 487 641 503 641 446 641 421 642 471 642 474 642 535 642 351 642 484 642 488 642 426 643 439 643 427 643 524 643 550 643 503 643 451 643 511 643 434 644 506 644 442 644 537 644 505 644 544 644 459 644 491 645 450 645 556 645 441 645 402 645 575 645 552 645 444 645 434 646 417 646 533 646 465 646 531 646 513 646 472 646 540 647 496 647 499 647 517 647 552 647 459 647 561 647 391 647 404 648 372 648 460 648 581 648 555 648 512 648 520 648 573 649 402 649 407 649 454 649 346 649 438 649 432 649 517 649 541 650 561 650 491 650 498 650 372 650 504 650 484 650 412 651 548 651 472 651 513 651 470 651 398 651 473 651 427 651 555 652 505 652 558 652 500 652 555 652 421 652 555 652 517 652 436 653 485 653 418 653 527 653 544 653 426 653 519 653 433 654 560 654 569 654 439 654 451 654 477 654 501 654 478 654 544 655 558 655 516 655 477 655 542 655 537 655 516 655 512 656 533 656 532 656 409 656 557 656 594 656 533 656 499 656 542 657 575 657 567 657 544 657 455 657 553 657 411 657 457 658 499 658 470 658 410 658 539 658 457 658 476 658 502 658 500 659 554 659 449 659 510 659 508 659 436 659 524 659 493 660 393 660 476 660 469 660 523 660 445 660 533 660 486 660 505 661 548 661 421 661 458 661 405 661 595 661 347 661 531 662 503 662 523 662 530 662 492 662 490 662 344 662 512 662 430 663 562 663 386 663 430 663 561 663 551 663 489 663 503 664 552 664 485 664 472 664 523 664 483 664 501 664 355 664 344 665 465 665 472 665 513 665 419 665 406 665 525 665 447 666 532 666 406 666 526 666 578 666 453 666 487 666 543 666 402 667 433 667 473 667 453 667 373 667 437 667 448 667 489 667 550 668 540 668 520 668 521 668 512 668 408 668 510 668 528 669 546 669 377 669 441 669 376 669 397 669 546 669 525 669 438 670 528 670 435 670 524 670 535 670 452 670 448 670 419 671 519 671 488 671 514 671 464 671 522 671 449 671 448 671 495 672 523 672 514 672 393 672 357 672 473 672 398 672 484 673 404 673 534 673 579 673 541 673 418 673 507 673 406 673 451 674 474 674 518 674 448 674 438 674 497 674 395 674 419 675 424 675 471 675 573 675 456 675 494 675 386 675 449 675 507 676 443 676 478 676 466 676 437 676 494 676 420 676 473 677 418 677 459 677 466 677 461 677 495 677 418 677 451 677 469 678 400 678 456 678 435 678 538 678 580 678 473 678 509 679 507 679 516 679 399 679 535 679 459 679 426 679 429 679 528 680 474 680 486 680 491 680 506 680 417 680 416 680 514 681 465 681 414 681 485 681 427 681 477 681 419 681 532 681 402 682 394 682 534 682 456 682 558 682 470 682 453 682 497 682 413 683 512 683 535 683 448 683 552 683 522 683 563 683 467 684 494 684 440 684 458 684 439 684 416 684 452 684 543 684 487 685 485 685 481 685 440 685 456 685 512 685 527 685 429 686 424 686 504 686 558 686 536 686 516 686 494 686 429 686 591 687 557 687 507 687 544 687 536 687 480 687 446 687 435 688 314 688 330 688 522 688 435 688 484 688 486 688 444 688 536 689 427 689 547 689 545 689 538 689 451 689 459 689 511 690 535 690 494 690 524 690 529 690 528 690 426 690 595 690 435 691 505 691 486 691 551 691 556 691 409 691 455 691 515 692 409 692 495 692 541 692 499 692 496 692 618 692 493 692 527 693 445 693 575 693 418 693 510 693 518 693 535 693 421 694 433 694 563 694 367 694 492 694 500 694 501 694 400 694 532 695 432 695 527 695 450 695 496 695 494 695 480 695 450 696 331 696 312 696 405 696 533 696 516 696 557 696 465 696 391 697 507 697 529 697 630 697 560 697 550 697 552 697 504 698 407 698 557 698 451 698 505 698 573 698 428 698 528 698 567 699 397 699 530 699 504 699 403 699 421 699 412 699 498 699 480 700 513 700 520 700 401 700 440 700 542 700 481 700 536 701 552 701 572 701 458 701 454 701 452 701 456 701 510 701 565 702 562 702 483 702 403 702 377 702 355 702 411 702 412 703 441 703 398 703 541 703 485 703 490 703 454 703 509 703 444 704 528 704 453 704 422 704 484 704 421 704 463 704 456 705 524 705 494 705 437 705 488 705 361 705 430 705 454 705 505 706 518 706 453 706 454 706 449 706 518 706 511 706 366 707 615 707 409 707 444 707 507 707 475 707 507 707 461 707 477 708 386 708 488 708 440 708 440 708 471 708 411 708 534 709 412 709 397 709 438 709 470 709 438 709 392 709 490 709 429 710 445 710 412 710 504 710 459 710 560 710 606 710 550 711 447 711 395 711 420 711 554 711 547 711 441 711 501 711 521 712 423 712 527 712 371 712 386 712 399 712 456 712 429 713 520 713 425 713 524 713 520 713 464 713 498 713 467 713 431 714 509 714 580 714 465 714 484 714 504 714 502 714 420 714 535 715 407 715 541 715 462 715 388 715 532 715 441 715 495 716 538 716 508 716 449 716 528 716 434 716 539 716 501 716 531 717 500 717 544 717 548 717 534 717 530 717 439 717 464 718 454 718 482 718 517 718 529 718 531 718 408 718 484 718 505 719 548 719 396 719 537 719 428 719 446 719 533 719 453 720 539 720 466 720 509 720 484 720 538 720 507 720 460 720 443 721 505 721 555 721 479 721 461 721 387 721 555 721 505 722 548 722 414 722 540 722 587 722 427 722 423 722 389 722 434 723 495 723 472 723 476 723 364 723 564 723 492 723 353 724 486 724 452 724 399 724 412 724 428 724 471 724 526 724 505 725 548 725 437 725 426 725 459 725 415 725 505 725 501 726 550 726 475 726 432 726 461 726 501 726 491 726 550 726 416 727 427 727 539 727 536 727 481 727 391 727 549 727 524 728 560 728 550 728 554 728 440 728 479 728 468 728 491 728 521 729 444 729 492 729 555 729 476 729 420 729 574 729 405 730 565 730 505 730 442 730 401 730 411 730 432 730 472 730 405 731 455 731 447 731 537 731 495 731 462 731 468 731 484 731 472 732 556 732 546 732 541 732 469 732 506 732 411 732 413 733 569 733 509 733 489 733 455 733 428 733 462 733 524 733 443 734 511 734 474 734 396 734 482 734 496 734 519 734 463 735 475 735 452 735 553 735 446 735 463 735 477 735 502 735 553 736 418 736 402 736 412 736 514 736 419 736 406 736 466 737 427 737 444 737 561 737 542 737 513 737 478 737 501 737 490 738 438 738 394 738 534 738 535 738 445 738 436 738 514 739 469 739 546 739 487 739 419 739 543 739 411 739 506 739 413 740 519 740 383 740 480 740 435 740 511 740 621 740 390 741 387 741 525 741 513 741 402 741 515 741 485 741 513 741 442 742 402 742 454 742 442 742 534 742 455 742 559 742 407 743 484 743 563 743 424 743 493 743 304 743 316 743 440 743 473 744 429 744 544 744 445 744 521 744 468 744 458 744 526 745 401 745 486 745 417 745 573 745 561 745 522 745 527 745 540 746 483 746 481 746 436 746 416 746 453 746 450 746 410 746 512 747 407 747 539 747 380 747 458 747 525 747 520 747 458 748 596 748 520 748 507 748 511 748 483 748 490 748 547 748 444 749 507 749 566 749 414 749 373 749 547 749 533 749 520 750 557 750 527 750 521 750 546 750 472 750 526 750 594 750 388 751 510 751 552 751 455 751 412 751 454 751 485 751 434 752 452 752 457 752 427 752 519 752 478 752 478 752 460 752 475 753 565 753 470 753 569 753 477 753 517 753 428 753 575 754 466 754 527 754 553 754 516 754 477 754 502 754 438 754 545 755 549 755 509 755 554 755 613 755 395 755 422 755 503 756 407 756 518 756 423 756 473 756 577 756 557 756 422 756 518 757 443 757 490 757 540 757 492 757 545 757 555 757 535 758 537 758 546 758 508 758 410 758 536 758 434 758 499 758 460 759 446 759 487 759 516 759 356 759 488 759 536 759 423 760 502 760 500 760 430 760 484 760 526 760 513 760 519 760 578 761 564 761 479 761 433 761 424 761 434 761 417 761 485 762 549 762 464 762 570 762 429 762 556 762 578 762 399 762 539 763 461 763 571 763 391 763 375 763 460 763 444 763 501 763 590 764 542 764 393 764 437 764 485 764 433 764 474 764 474 765 461 765 348 765 410 765 436 765 526 765 411 765 468 765 549 766 520 766 501 766 401 766 395 766 508 766 544 766 540 767 578 767 412 767 520 767 433 767 460 767 425 767 524 767 428 768 476 768 432 768 526 768 555 768 388 768 441 768 407 769 449 769 469 769 548 769 436 769 454 769 463 769 408 769 560 770 470 770 435 770 453 770 562 770 423 770 384 770 466 771 497 771 430 771 560 771 546 771 443 771 471 771 478 771 432 772 464 772 570 772 521 772 434 772 447 772 563 772 480 773 453 773 519 773 548 773 486 773 423 773 452 773 553 773 435 774 454 774 402 774 524 774 543 774 516 774 508 774 541 775 426 775 446 775 504 775 490 775 464 775 406 775 443 775 459 776 433 776 441 776 435 776 421 776 521 776 541 776 367 777 438 777 356 777 531 777 519 777 548 777 405 777 487 777 420 778 427 778 475 778 446 778 469 778 447 778 506 778 484 778 409 779 473 779 438 779 472 779 463 779 521 779 575 779 427 780 476 780 501 780 399 780 418 780 545 780 424 780 505 780 437 781 514 781 449 781 581 781 514 781 510 781 469 781 504 782 504 782 500 782 508 782 450 782 441 782 383 782 426 782 505 783 491 783 521 783 536 783 531 783 512 783 481 783 567 784 483 784 484 784 585 784 519 784 433 784 480 784 571 784 472 785 454 785 531 785 495 785 546 785 503 785 450 785 512 786 552 786 560 786 454 786 460 786 490 786 447 786 346 786 463 787 570 787 526 787 621 787 516 787 546 787 539 787 432 788 425 788 565 788 447 788 380 788 502 788 401 788 425 788 489 789 460 789 635 789 447 789 521 789 544 789 570 789 402 790 468 790 535 790 570 790 451 790 430 790 459 790 576 790 377 791 556 791 511 791 478 791 548 791 385 791 581 791 466 792 566 792 431 792 461 792 545 792 468 792 487 792 457 792 475 793 530 793 387 793 346 793 439 793 405 793 481 793 535 794 557 794 410 794 571 794 424 794 531 794 495 794 382 794 407 795 552 795 434 795 594 795 423 795 572 795 447 795 542 795 498 796 452 796 527 796 412 796 486 796 527 796 401 796 441 797 501 797 402 797 446 797 479 797 554 797 518 797 415 797 521 798 504 798 564 798 585 798 463 798 580 798 477 798 522 799 471 799 374 799 473 799 450 799 497 799 414 799 469 799 425 800 583 800 463 800 520 800 527 800 404 800 473 800 462 801 419 801 391 801 477 801 449 801 458 801 438 801 560 801 540 802 376 802 560 802 574 802 555 802 590 802 526 802 534 803 500 803 425 803 485 803 451 803 464 803 516 803 414 803 525 804 419 804 422 804 489 804 472 804 459 804 430 804 534 805 423 805 453 805 520 805 526 805 549 805 483 805 402 805 501 806 540 806 553 806 527 806 556 806 579 806 443 806 512 807 495 807 490 807 430 807 459 807 545 807 440 807 507 807 483 808 525 808 509 808 541 808 517 808 521 808 442 808 539 809 521 809 494 809 525 809 547 809 494 809 472 809 496 809 381 810 441 810 445 810 454 810 531 810 454 810 503 810 411 810 575 811 496 811 517 811 346 811 436 811 517 811 416 811 461 812 336 812 567 812 562 812 552 812 517 812 433 812 474 812 522 813 413 813 349 813 467 813 551 813 470 813 537 813 549 814 582 814 440 814 533 814 471 814 533 814 423 814 459 814 296 815 595 815 555 815 510 815 484 815 531 815 499 815 441 816 523 816 496 816 509 816 358 816 596 816 434 816 548 816 454 817 523 817 558 817 482 817 416 817 509 817 511 817 506 818 557 818 524 818 399 818 392 818 505 818 432 818 581 818 454 819 363 819 535 819 514 819 472 819 370 819 526 819 580 820 546 820 451 820 556 820 587 820 530 820 412 820 510 820 547 821 452 821 534 821 506 821 426 821 472 821 533 821 419 822 472 822 503 822 417 822 461 822 456 822 490 822 481 822 391 823 546 823 439 823 512 823 438 823 489 823 478 823 440 824 465 824 457 824 503 824 516 824 468 824 560 824 416 824 524 825 422 825 528 825 493 825 351 825 516 825 506 825 453 826 390 826 478 826 417 826 520 826 598 826 430 826 475 826 446 827 445 827 470 827 483 827 553 827 573 827 426 827 538 827 457 828 539 828 449 828 416 828 454 828 582 828 471 828 390 829 362 829 553 829 496 829 471 829 447 829 376 829 483 829 441 830 423 830 480 830 544 830 522 830 446 830 545 830 563 831 523 831 479 831 427 831 505 831 519 831 442 831 418 831 403 832 567 832 485 832 466 832 340 832 538 832 411 832 519 833 559 833 511 833 463 833 542 833 425 833 537 833 508 833 561 834 543 834 438 834 541 834 453 834 419 834 525 834 576 835 478 835 520 835 466 835 545 835 464 835 586 835 507 835 525 836 449 836 492 836 451 836 569 836 527 836 441 836 474 837 430 837 379 837 541 837 395 837 515 837 522 837 456 837 539 838 474 838 469 838 536 838 453 838 490 838 562 838 571 839 531 839 407 839 589 839 514 839 469 839 510 839 545 839 442 840 444 840 363 840 473 840 526 840 421 840 468 840 537 841 462 841 485 841 471 841 502 841 462 841 441 841 502 841 570 842 522 842 397 842 512 842 468 842 542 842 480 842 485 842 470 843 406 843 496 843 290 843 541 843 483 843 497 843 384 844 500 844 466 844 465 844 564 844 554 844 477 844 551 844 560 845 463 845 486 845 549 845 571 845 444 845 502 845 532 846 441 846 438 846 444 846 568 846 443 846 369 846 540 846 487 847 547 847 318 847 326 847 457 847 462 847 535 847 541 848 525 848 515 848 500 848 597 848 513 848 487 848 482 848 561 849 525 849 429 849 469 849 419 849 508 849 525 849 537 850 518 850 557 850 523 850 539 850 508 850 501 850 431 850 425 851 461 851 483 851 482 851 543 851 492 851 472 851 406 852 434 852 541 852 477 852 544 852 464 852 433 852 477 852 544 853 498 853 561 853 465 853 460 853 446 853 401 853 464 854 508 854 430 854 387 854 459 854 465 854 468 854 503 854 581 855 555 855 472 855 588 855 496 855 428 855 575 855 419 856 507 856 484 856 359 856 530 856 430 856 479 856 502 856 587 857 487 857 418 857 442 857 558 857 518 857 503 857 493 858 549 858 536 858 470 858 456 858 442 858 406 858 452 858 562 859 545 859 541 859 551 859 524 859 477 859 519 859 575 859 423 860 479 860 449 860 407 860 486 860 388 860 489 860 456 861 404 861 596 861 458 861 581 861 503 861 434 861 550 861 576 862 378 862 574 862 506 862 437 862 469 862 450 862 482 863 498 863 422 863 550 863 393 863 350 863 434 863 462 863 501 864 434 864 510 864 495 864 436 864 523 864 460 864 463 865 486 865 477 865 548 865 533 865 545 865 504 865 482 865 425 866 550 866 499 866 560 866 445 866 492 866 531 866 504 867 432 867 497 867 424 867 532 867 543 867 470 867 428 867 520 868 459 868 496 868 440 868 425 868 486 868 492 868 535 869 496 869 462 869 485 869 511 869 450 869 551 869 497 869 500 870 561 870 472 870 542 870 487 870 496 870 429 870 412 871 392 871 498 871 528 871 407 871 443 871 452 871 445 871 467 872 484 872 415 872 377 872 475 872 426 872 446 872 448 873 413 873 480 873 429 873 531 873 502 873 413 873 410 873 426 874 452 874 429 874 396 874 477 874 536 874 593 874 420 874 429 875 429 875 404 875 463 875 446 875 472 875 493 875 530 876 501 876 471 876 490 876 503 876 543 876 571 876 532 876 444 877 554 877 405 877 520 877 424 877 347 877 548 877 463 878 430 878 384 878 480 878 462 878 545 878 526 878 596 878 505 879 401 879 493 879 568 879 405 879 436 879 494 879 445 880 579 880 455 880 529 880 523 880 405 880 595 880 420 880 558 881 464 881 521 881 505 881 456 881 412 881 561 881 410 882 475 882 451 882 564 882 420 882 410 882 408 882 519 882 542 883 443 883 487 883 526 883 561 883 506 883 449 883 451 884 483 884 417 884 483 884 480 884 487 884 523 884 578 884 442 885 514 885 523 885 312 885 430 885 496 885 558 885 476 886 482 886 553 886 415 886 406 886 566 886 489 886 513 886 560 887 526 887 559 887 433 887 523 887 451 887 610 887 487 888 558 888 564 888 448 888 509 888 360 888 511 888 556 888 448 889 476 889 558 889 431 889 577 889 462 889 466 889 468 890 555 890 455 890 417 890 446 890 453 890 494 890 473 890 471 891 452 891 430 891 530 891 416 891 473 891 543 891 527 891 551 892 512 892 518 892 499 892 509 892 449 892 502 892 562 893 445 893 540 893 521 893 476 893 478 893 350 893 542 893 489 894 498 894 495 894 467 894 460 894 516 894 486 894 563 895 500 895 453 895 528 895 456 895 456 895 532 895 450 895 520 896 418 896 531 896 482 896 399 896 447 896 498 896 551 897 484 897 461 897 527 897 489 897 414 897 474 897 441 897 475 898 338 898 400 898 497 898 579 898 388 898 540 898 408 899 513 899 512 899 392 899 558 899 466 899 422 899 430 899 520 900 485 900 537 900 450 900 532 900 526 900 535 900 543 901 458 901 526 901 509 901 537 901 508 901 507 901 385 901 462 902 538 902 472 902 502 902 546 902 498 902 435 902 582 903 514 903 416 903 578 903 548 903 529 903 441 903 542 903 402 904 543 904 463 904 431 904 482 904 496 904 512 904 518 905 396 905 490 905 473 905 483 905 411 905 513 905 541 905 422 906 502 906 385 906 461 906 459 906 408 906 472 906 557 906 438 907 563 907 384 907 581 907 434 907 471 907 573 907 435 908 466 908 550 908 425 908 517 908 499 908 411 908 532 908 565 909 457 909 544 909 425 909 535 909 351 909 516 909 458 910 477 910 533 910 477 910 462 910 544 910 406 910 417 910 529 911 538 911 541 911 383 911 490 911 500 911 426 911 348 912 554 912 450 912 528 912 492 912 480 912 428 912 507 912 508 913 407 913 514 913 447 913 516 913 451 913 394 913 477 914 512 914 539 914 472 914 469 914 534 914 487 914 539 914 411 915 525 915 482 915 419 915 550 915 415 915 508 915 470 916 515 916 573 916 414 916 458 916 445 916 534 916 550 916 419 917 478 917 487 917 497 917 595 917 485 917 532 917 475 918 403 918 493 918 428 918 507 918 580 918 351 918 561 918 522 919 512 919 527 919 527 919 457 919 466 919 379 919 534 920 440 920 453 920 365 920 504 920 483 920 546 920 532 920 494 921 475 921 597 921 575 921 553 921 506 921 503 921 454 921 518 922 499 922 537 922 467 922 437 922 522 922 416 922 563 923 524 923 473 923 452 923 489 923 471 923 418 923 512 923 563 924 501 924 500 924 555 924 570 924 457 924 387 924 394 925 494 925 473 925 441 925 389 925 515 925 413 925 454 925 569 926 508 926 574 926 500 926 489 926 455 926 537 926 466 927 483 927 505 927 474 927 494 927 486 927 525 927 419 927 541 928 438 928 456 928 392 928 440 928 530 928 478 928 497 929 534 929 368 929 497 929 493 929 586 929 455 929 424 929 563 930 402 930 393 930 468 930 521 930 457 930 495 930 454 931 553 931 539 931 477 931 543 931 412 931 447 931 412 931 336 932 453 932 567 932 550 932 518 932 501 932 444 932 516 933 508 933 456 933 527 933 525 933 453 933 429 933 485 933 438 934 409 934 417 934 425 934 502 934 360 934 485 934 501 935 498 935 563 935 362 935 421 935 455 935 433 935 469 935 528 936 482 936 510 936 472 936 463 936 484 936 461 936 509 937 439 937 426 937 409 937 448 937 500 937 421 937 492 937 515 938 601 938 416 938 467 938 459 938 586 938 463 938 424 938 489 939 413 939 562 939 509 939 549 939 346 939 382 939 400 940 565 940 418 940 458 940 522 940 403 940 490 940 567 940 525 941 451 941 453 941 374 941 468 941 566 941 418 941 542 942 429 942 458 942 390 942 478 942 486 942 468 942 550 942 537 943 564 943 540 943 462 943 494 943 484 943 480 943 393 944 415 944 540 944 494 944 533 944 505 944 457 944 453 944 502 945 490 945 441 945 506 945 399 945 479 945 419 945 465 946 471 946 429 946 475 946 508 946 524 946 490 946 550 946 477 947 469 947 485 947 533 947 567 947 428 947 542 947 451 948 432 948 404 948 478 948 429 948 483 948 425 948 445 948 557 949 440 949 384 949 402 949 564 949 450 949 544 949 483 950 503 950 505 950 569 950 456 950 423 950 542 950 448 950 540 951 417 951 434 951 563 951 415 951 510 951 526 951 392 952 501 952 521 952 540 952 424 952 394 952 516 952 488 952 468 953 472 953 521 953 454 953 612 953 479 953 529 953 408 953 513 954 510 954 445 954 473 954 484 954 520 954 516 954 514 955 449 955 496 955 406 955 476 955 433 955 518 955 460 955 520 956 477 956 441 956 571 956 444 956 425 956 557 956 520 957 422 957 494 957 571 957 487 957 494 957 427 957 445 957 435 958 453 958 452 958 415 958 565 958 481 958 404 958 458 959 376 959 556 959 483 959 505 959 526 959 403 959 454 959 467 960 432 960 439 960 558 960 587 960 421 960 469 960 328 961 540 961 594 961 516 961 419 961 532 961 483 961 444 961 465 962 471 962 450 962 532 962 512 962 567 962 555 962 409 963 416 963 460 963 560 963 469 963 572 963 527 963 526 963 478 964 552 964 478 964 541 964 476 964 433 964 496 964 363 965 474 965 460 965 470 965 485 965 521 965 425 965 543 965 473 966 450 966 571 966 532 966 454 966 434 966 481 966 478 967 435 967 463 967 499 967 437 967 438 967 441 967 482 967 481 968 543 968 549 968 436 968 542 968 382 968 429 968 573 969 469 969 303 969 490 969 443 969 423 969 463 969 519 969 486 970 496 970 562 970 445 970 570 970 406 970 519 970 595 970 480 971 489 971 445 971 544 971 392 971 458 971 473 971 496 972 506 972 412 972 518 972 545 972 500 972 428 972 414 972 480 973 505 973 430 973 486 973 433 973 423 973 449 973 407 974 465 974 382 974 474 974 542 974 460 974 518 974 480 974 544 975 501 975 346 975 537 975 560 975 418 975 411 975 402 976 447 976 430 976 448 976 432 976 481 976 521 976 564 976 459 977 434 977 435 977 529 977 491 977 417 977 606 977 550 978 470 978 439 978 347 978 567 978 472 978 519 978 576 978 453 979 553 979 502 979 451 979 454 979 419 979 461 979 562 980 562 980 460 980 485 980 517 980 520 980 520 980 521 980 561 981 520 981 438 981 514 981 412 981 351 981 503 981 429 982 482 982 442 982 538 982 429 982 514 982 519 982 516 982 549 983 545 983 550 983 527 983 491 983 505 983 557 983 520 984 558 984 563 984 502 984 480 984 568 984 417 984 408 984 470 985 549 985 548 985 490 985 413 985 404 985 436 985 425 985 552 986 528 986 474 986 562 986 481 986 440 986 419 986 520 987 498 987 553 987 393 987 523 987 500 987 403 987 520 987 475 988 559 988 525 988 547 988 452 988 534 988 534 988 463 989 587 989 450 989 510 989 509 989 418 989 547 989 531 989 509 990 474 990 507 990 551 990 460 990 468 990 530 990 454 991 453 991 490 991 504 991 421 991 518 991 552 991 385 991 562 992 434 992 498 992 467 992 481 992 662 992 494 992 556 993 435 993 476 993 493 993 400 993 448 993 425 993 544 993 425 994 404 994 419 994 515 994 493 994 434 994 453 994 535 995 538 995 426 995 468 995 561 995 420 995 484 995 553 995 477 996 379 996 564 996 526 996 429 996 591 996 557 996 412 997 454 997 477 997 443 997 562 997 583 997 418 997 484 997 587 998 432 998 563 998 524 998 473 998 433 998 371 998 558 999 569 999 523 999 460 999 474 999 462 999 448 999 449 999 453 1000 460 1000 545 1000 437 1000 401 1000 555 1000 452 1000 567 1001 502 1001 492 1001 497 1001 499 1001 521 1001 470 1001 593 1001 486 1002 424 1002 352 1002 442 1002 560 1002 537 1002 429 1002 513 1002 496 1003 522 1003 420 1003 433 1003 474 1003 533 1003 449 1003 485 1004 460 1004 412 1004 456 1004 570 1004 538 1004 527 1004 550 1004 408 1005 578 1005 561 1005 477 1005 578 1005 523 1005 525 1005 514 1006 468 1006 431 1006 538 1006 516 1006 530 1006 403 1006 401 1006 422 1007 560 1007 526 1007 419 1007 448 1007 454 1007 459 1007 488 1008 489 1008 435 1008 558 1008 577 1008 597 1008 413 1008 478 1008 450 1009 488 1009 442 1009 482 1009 531 1009 528 1009 393 1009 530 1010 451 1010 473 1010 547 1010 480 1010 507 1010 485 1010 383 1010 372 1011 487 1011 590 1011 357 1011 387 1011 505 1011 569 1011 465 1012 424 1012 433 1012 580 1012 423 1012 486 1012 500 1012 516 1012 504 1013 532 1013 529 1013 441 1013 493 1013 428 1013 499 1013 563 1014 539 1014 562 1014 495 1014 408 1014 524 1014 484 1014 462 1014 438 1015 555 1015 476 1015 516 1015 480 1015 474 1015 489 1015 511 1016 433 1016 522 1016 524 1016 425 1016 511 1016 441 1016 508 1016 515 1017 443 1017 499 1017 393 1017 524 1017 493 1017 466 1017 400 1017 470 1018 381 1018 459 1018 469 1018 534 1018 483 1018 507 1018 416 1019 441 1019 514 1019 509 1019 520 1019 452 1019 413 1019 456 1019 535 1020 440 1020 550 1020 345 1020 362 1020 557 1020 431 1020 426 1021 534 1021 350 1021 455 1021 500 1021 396 1021 436 1021 455 1021 413 1022 424 1022 368 1022 546 1022 482 1022 576 1022 551 1022 435 1023 564 1023 582 1023 578 1023 483 1023 487 1023 541 1023 498 1023 401 1024 516 1024 455 1024 480 1024 548 1024 492 1024 524 1024 571 1025 445 1025 570 1025 527 1025 570 1025 304 1025 542 1025 530 1025 526 1026 544 1026 524 1026 399 1026 581 1026 441 1026 480 1026 499 1027 556 1027 432 1027 496 1027 529 1027 534 1027 424 1027 490 1027 428 1028 426 1028 552 1028 386 1028 441 1028 363 1028 515 1028 425 1029 410 1029 434 1029 469 1029 515 1029 453 1029 538 1029 541 1029 555 1030 459 1030 481 1030 463 1030 566 1030 454 1030 382 1030 460 1031 486 1031 537 1031 542 1031 581 1031 517 1031 517 1031 528 1031 336 1032 523 1032 418 1032 475 1032 518 1032 405 1032 487 1032 565 1033 539 1033 609 1033 534 1033 450 1033 465 1033 473 1033 440 1033 547 1034 558 1034 509 1034 423 1034 547 1034 464 1034 438 1034 552 1034 456 1035 486 1035 508 1035 465 1035 401 1035 507 1035 359 1035 497 1036 577 1036 446 1036 555 1036 413 1036 430 1036 427 1036 414 1036 483 1037 528 1037 477 1037 489 1037 549 1037 437 1037 493 1037 487 1038 535 1038 530 1038 421 1038 435 1038 577 1038 445 1038 412 1038 491 1039 439 1039 607 1039 446 1039 362 1039 427 1039 460 1039 512 1040 416 1040 452 1040 559 1040 550 1040 587 1040 436 1040 575 1040 505 1041 452 1041 325 1041 478 1041 569 1041 570 1041 468 1041 539 1042 398 1042 531 1042 513 1042 376 1042 430 1042 436 1042 428 1042 551 1043 523 1043 438 1043 420 1043 460 1043 504 1043 474 1043 488 1044 541 1044 433 1044 381 1044 496 1044 538 1044 532 1044 392 1044 417 1045 558 1045 431 1045 509 1045 440 1045 459 1045 510 1045 463 1046 548 1046 505 1046 420 1046 506 1046 496 1046 504 1046 447 1046 547 1047 461 1047 503 1047 535 1047 533 1047 491 1047 547 1047 486 1048 517 1048 485 1048 386 1048 538 1048 499 1048 475 1048 512 1048 522 1049 431 1049 543 1049 453 1049 550 1049 481 1049 471 1049 571 1049 477 1050 522 1050 545 1050 527 1050 422 1050 364 1050 486 1050 523 1051 445 1051 563 1051 416 1051 564 1051 593 1051 515 1051 486 1051 571 1052 503 1052 419 1052 375 1052 583 1052 521 1052 359 1052 427 1053 541 1053 519 1053 455 1053 503 1053 547 1053 501 1053 457 1053 541 1054 538 1054 477 1054 445 1054 454 1054 516 1054 464 1054 556 1055 572 1055 476 1055 547 1055 559 1055 350 1055 409 1055 563 1055 481 1056 592 1056 471 1056 487 1056 494 1056 571 1056 443 1056 478 1057 475 1057 486 1057 426 1057 503 1057 418 1057 543 1057 500 1057 527 1058 529 1058 390 1058 422 1058 295 1058 515 1058 503 1058 405 1059 478 1059 533 1059 435 1059 483 1059 503 1059 434 1059 418 1059 541 1060 414 1060 502 1060 551 1060 451 1060 515 1060 469 1060 450 1061 557 1061 442 1061 470 1061 536 1061 519 1061 572 1061 399 1061 482 1062 533 1062 441 1062 446 1062 468 1062 508 1062 533 1062 422 1063 428 1063 358 1063 495 1063 510 1063 503 1063 399 1063 495 1063 444 1064 363 1064 547 1064 575 1064 552 1064 496 1064 468 1064 409 1065 430 1065 438 1065 488 1065 525 1065 558 1065 510 1065 447 1065 518 1066 563 1066 436 1066 571 1066 502 1066 386 1066 368 1066 473 1066 428 1067 537 1067 438 1067 510 1067 553 1067 511 1067 560 1067 474 1068 460 1068 462 1068 511 1068 457 1068 551 1068 534 1068 456 1068 468 1069 388 1069 513 1069 544 1069 419 1069 430 1069 507 1069 549 1070 462 1070 548 1070 504 1070 447 1070 455 1070 562 1070 546 1070 495 1071 444 1071 539 1071 404 1071 583 1071 489 1071 454 1071 398 1072 487 1072 427 1072 488 1072 534 1072 515 1072 466 1072 483 1072 473 1073 463 1073 380 1073 501 1073 468 1073 585 1073 526 1073 449 1074 451 1074 477 1074 444 1074 472 1074 513 1074 563 1074 412 1074 409 1075 460 1075 540 1075 470 1075 478 1075 411 1075 581 1075 430 1076 504 1076 402 1076 458 1076 544 1076 391 1076 499 1076 560 1076 380 1077 523 1077 457 1077 490 1077 555 1077 567 1077 360 1077 478 1078 437 1078 606 1078 523 1078 453 1078 484 1078 564 1078 515 1078 490 1079 518 1079 418 1079 513 1079 566 1079 458 1079 353 1079 483 1080 517 1080 525 1080 454 1080 563 1080 493 1080 554 1080 467 1080 407 1081 456 1081 402 1081 486 1081 532 1081 524 1081 437 1081 530 1081 472 1082 522 1082 411 1082 505 1082 512 1082 528 1082 507 1082 415 1083 503 1083 448 1083 522 1083 534 1083 571 1083 466 1083 487 1083 527 1084 513 1084 506 1084 577 1084 525 1084 512 1084 478 1084 427 1085 456 1085 497 1085 450 1085 508 1085 544 1085 458 1085 452 1085 458 1086 374 1086 465 1086 415 1086 374 1086 416 1086 490 1086 485 1087 480 1087 526 1087 535 1087 426 1087 470 1087 425 1087 502 1087 477 1088 467 1088 563 1088 471 1088 497 1088 479 1088 542 1088 487 1089 348 1089 459 1089 431 1089 414 1089 406 1089 480 1089 532 1089 499 1090 566 1090 469 1090 524 1090 493 1090 430 1090 561 1090 460 1091 581 1091 485 1091 399 1091 561 1091 489 1091 543 1091 560 1091 455 1092 544 1092 433 1092 485 1092 519 1092 565 1092 444 1092 537 1093 452 1093 604 1093 482 1093 578 1093 489 1093 591 1093 424 1093 451 1094 565 1094 523 1094 377 1094 477 1094 524 1094 564 1094 529 1095 406 1095 438 1095 502 1095 446 1095 502 1095 556 1095 417 1095 585 1096 440 1096 434 1096 562 1096 584 1096 426 1096 594 1096 512 1097 545 1097 491 1097 524 1097 497 1097 579 1097 551 1097 524 1097 484 1098 447 1098 437 1098 448 1098 540 1098 457 1098 506 1098 594 1098 419 1099 454 1099 562 1099 484 1099 439 1099 476 1099 519 1099 431 1100 521 1100 571 1100 574 1100 410 1100 547 1100 444 1100 550 1100 492 1101 521 1101 498 1101 577 1101 531 1101 477 1101 487 1101 559 1102 428 1102 437 1102 508 1102 516 1102 572 1102 553 1102 525 1102 357 1103 439 1103 449 1103 541 1103 484 1103 563 1103 409 1103 500 1104 439 1104 554 1104 491 1104 444 1104 307 1104 581 1104 502 1104 439 1105 526 1105 401 1105 475 1105 420 1105 589 1105 467 1105 591 1106 544 1106 433 1106 547 1106 462 1106 529 1106 422 1106 450 1106 563 1107 558 1107 543 1107 558 1107 424 1107 446 1107 433 1107 504 1108 499 1108 480 1108 440 1108 561 1108 542 1108 463 1108 579 1108 406 1109 574 1109 413 1109 544 1109 531 1109 505 1109 459 1109 425 1110 492 1110 407 1110 410 1110 417 1110 512 1110 380 1110 571 1110 510 1111 496 1111 543 1111 414 1111 503 1111 571 1111 549 1111 576 1112 475 1112 503 1112 495 1112 479 1112 383 1112 514 1112 495 1112 472 1113 418 1113 434 1113 454 1113 551 1113 365 1113 428 1113 520 1113 430 1114 432 1114 450 1114 438 1114 461 1114 440 1114 451 1114 564 1115 546 1115 548 1115 479 1115 556 1115 466 1115 405 1115 421 1115 562 1116 467 1116 418 1116 437 1116 570 1116 529 1116 522 1116 596 1117 462 1117 534 1117 402 1117 416 1117 480 1117 504 1117 413 1117 532 1118 423 1118 458 1118 585 1118 456 1118 426 1118 592 1118 416 1119 418 1119 470 1119 409 1119 498 1119 461 1119 504 1119 489 1119 445 1120 487 1120 365 1120 509 1120 529 1120 506 1120 427 1120 461 1121 486 1121 415 1121 494 1121 514 1121 406 1121 535 1121 441 1121 552 1122 475 1122 470 1122 436 1122 570 1122 597 1122 404 1122 423 1123 536 1123 470 1123 562 1123 479 1123 506 1123 466 1123 520 1123 545 1124 430 1124 438 1124 566 1124 417 1124 369 1124 523 1124 428 1125 394 1125 520 1125 536 1125 469 1125 380 1125 471 1125 492 1125 432 1126 531 1126 538 1126 458 1126 537 1126 441 1126 468 1126 456 1127 525 1127 482 1127 546 1127 541 1127 587 1127 351 1127 487 1127 458 1128 571 1128 531 1128 579 1128 432 1128 566 1128 471 1128 433 1129 537 1129 356 1129 410 1129 556 1129 548 1129 446 1129 466 1129 487 1130 437 1130 427 1130 475 1130 529 1130 428 1130 492 1130 482 1130 528 1131 571 1131 246 1131 516 1131 445 1131 454 1131 461 1131 473 1132 449 1132 416 1132 455 1132 531 1132 474 1132 529 1132 519 1132 519 1133 511 1133 523 1133 519 1133 411 1133 525 1133 455 1133 569 1134 525 1134 567 1134 450 1134 401 1134 558 1134 435 1134 504 1134 424 1135 531 1135 522 1135 475 1135 561 1135 408 1135 538 1135 567 1136 454 1136 446 1136 524 1136 406 1136 490 1136 465 1136 547 1136 554 1137 521 1137 388 1137 497 1137 418 1137 466 1137 482 1137 489 1138 482 1138 480 1138 450 1138 505 1138 487 1138 576 1138 423 1138 570 1139 429 1139 455 1139 503 1139 403 1139 569 1139 502 1139 520 1140 488 1140 466 1140 437 1140 430 1140 563 1140 465 1140 483 1140 450 1141 460 1141 510 1141 538 1141 542 1141 445 1141 512 1141 508 1142 485 1142 500 1142 436 1142 528 1142 510 1142 349 1142 422 1142 487 1143 428 1143 565 1143 481 1143 510 1143 431 1143 553 1143 405 1144 471 1144 482 1144 503 1144 507 1144 521 1144 564 1144 473 1144 543 1145 569 1145 529 1145 548 1145 503 1145 509 1145 607 1145 478 1145 458 1146 529 1146 459 1146 422 1146 407 1146 445 1146 466 1146 433 1147 546 1147 435 1147 448 1147 457 1147 486 1147 570 1147 547 1147 458 1148 418 1148 435 1148 542 1148 428 1148 492 1148 548 1148 534 1149 510 1149 555 1149 377 1149 529 1149 468 1149 477 1149 506 1149 442 1150 424 1150 412 1150 502 1150 556 1150 578 1150 522 1150 564 1151 458 1151 484 1151 390 1151 420 1151 421 1151 493 1151 409 1151 468 1152 494 1152 459 1152 409 1152 544 1152 469 1152 526 1152 408 1153 574 1153 355 1153 516 1153 475 1153 462 1153 407 1153 341 1153 517 1154 546 1154 529 1154 541 1154 545 1154 425 1154 491 1154 547 1155 500 1155 530 1155 556 1155 478 1155 480 1155 452 1155 354 1155 431 1156 511 1156 479 1156 438 1156 519 1156 432 1156 518 1156 390 1157 560 1157 466 1157 520 1157 461 1157 483 1157 459 1157 473 1157 537 1158 430 1158 572 1158 406 1158 479 1158 508 1158 449 1158 486 1159 425 1159 416 1159 519 1159 426 1159 580 1159 463 1159 450 1159 485 1160 542 1160 425 1160 441 1160 508 1160 562 1160 355 1160 460 1160 430 1161 440 1161 561 1161 512 1161 508 1161 516 1161 510 1161 443 1162 419 1162 515 1162 507 1162 455 1162 445 1162 522 1162 391 1162 606 1163 428 1163 535 1163 479 1163 493 1163 434 1163 354 1163 441 1164 448 1164 542 1164 403 1164 445 1164 541 1164 405 1164 461 1164 373 1165 486 1165 559 1165 474 1165 442 1165 579 1165 418 1165 532 1166 484 1166 421 1166 453 1166 337 1166 415 1166 564 1166 481 1166 521 1167 443 1167 562 1167 545 1167 481 1167 570 1167 466 1167 446 1168 416 1168 549 1168 485 1168 442 1168 615 1168 483 1168 531 1168 417 1169 477 1169 419 1169 562 1169 473 1169 401 1169 540 1169 489 1170 460 1170 492 1170 473 1170 539 1170 484 1170 488 1170 464 1170 407 1171 495 1171 507 1171 538 1171 473 1171 523 1171 421 1171 519 1172 551 1172 504 1172 408 1172 506 1172 525 1172 419 1172 453 1172 506 1173 536 1173 517 1173 504 1173 454 1173 480 1173 417 1173 412 1174 453 1174 508 1174 351 1174 462 1174 363 1174 438 1174 441 1174 514 1175 452 1175 504 1175 460 1175 555 1175 442 1175 448 1175 546 1176 516 1176 524 1176 511 1176 443 1176 418 1176 454 1176 562 1176 413 1177 398 1177 567 1177 460 1177 460 1177 474 1177 451 1177 557 1177 507 1178 523 1178 484 1178 553 1178 419 1178 555 1178 580 1178 484 1179 583 1179 615 1179 560 1179 446 1179 556 1179 467 1179 507 1179 528 1180 520 1180 511 1180 504 1180 451 1180 553 1180 351 1180 453 1181 550 1181 453 1181 493 1181 576 1181 461 1181 539 1181 422 1181 416 1182 418 1182 410 1182 563 1182 578 1182 512 1182 522 1182 518 1183 600 1183 347 1183 451 1183 412 1183 459 1183 418 1183 571 1183 585 1184 480 1184 439 1184 512 1184 347 1184 580 1184 453 1184 442 1185 511 1185 438 1185 453 1185 435 1185 461 1185 538 1185 552 1185 543 1186 571 1186 407 1186 456 1186 480 1186 516 1186 478 1186 491 1187 451 1187 544 1187 533 1187 558 1187 507 1187 415 1187 386 1187 586 1188 439 1188 494 1188 396 1188 395 1188 458 1188 519 1188 427 1189 492 1189 413 1189 509 1189 557 1189 463 1189 476 1189 383 1189 319 1190 442 1190 464 1190 447 1190 475 1190 543 1190 391 1190 468 1191 478 1191 471 1191 411 1191 503 1191 582 1191 386 1191 409 1191 522 1192 505 1192 538 1192 516 1192 411 1192 486 1192 467 1192 569 1192 507 1193 566 1193 521 1193 527 1193 514 1193 366 1193 437 1193 521 1194 441 1194 526 1194 575 1194 520 1194 435 1194 518 1194 433 1194 446 1195 519 1195 538 1195 546 1195 512 1195 474 1195 515 1195 409 1196 392 1196 448 1196 560 1196 406 1196 564 1196 436 1196 487 1196 497 1197 561 1197 547 1197 507 1197 421 1197 349 1197 548 1197 476 1198 549 1198 565 1198 473 1198 489 1198 452 1198 388 1198 579 1198 487 1199 447 1199 471 1199 474 1199 497 1199 479 1199 543 1199 480 1200 426 1200 519 1200 495 1200 489 1200 435 1200 540 1200 507 1200 446 1201 515 1201 439 1201 508 1201 528 1201 532 1201 524 1201 489 1202 498 1202 364 1202 277 1202 292 1202 306 1202 336 1202 404 1202 438 1203 537 1203 402 1203 525 1203 544 1203 439 1203 545 1203 411 1204 348 1204 560 1204 493 1204 370 1204 474 1204 486 1204 467 1204 349 1205 486 1205 463 1205 411 1205 572 1205 523 1205 555 1205 545 1206 527 1206 405 1206 510 1206 454 1206 520 1206 405 1206 519 1206 478 1207 517 1207 560 1207 527 1207 491 1207 511 1207 555 1207 424 1208 526 1208 585 1208 449 1208 479 1208 455 1208 531 1208 558 1208 477 1209 512 1209 474 1209 516 1209 512 1209 550 1209 530 1209 529 1209 474 1210 505 1210 427 1210 546 1210 415 1210 518 1210 492 1210 430 1211 434 1211 435 1211 471 1211 528 1211 480 1211 462 1211 582 1211 598 1212 420 1212 442 1212 426 1212 534 1212 418 1212 547 1212 553 1213 519 1213 517 1213 571 1213 442 1213 418 1213 561 1213 536 1213 528 1214 523 1214 505 1214 536 1214 501 1214 517 1214 417 1214 548 1215 558 1215 434 1215 549 1215 478 1215 467 1215 500 1215 430 1215 520 1216 556 1216 569 1216 441 1216 545 1216 291 1216 442 1216 393 1217 587 1217 406 1217 414 1217 396 1217 566 1217 378 1217 458 1217 539 1218 390 1218 578 1218 588 1218 571 1218 488 1218 387 1218 341 1219 515 1219 407 1219 538 1219 489 1219 547 1219 496 1219 499 1219 541 1220 545 1220 448 1220 512 1220 461 1220 552 1220 376 1220 567 1221 548 1221 466 1221 527 1221 545 1221 517 1221 428 1221 422 1221 528 1222 466 1222 551 1222 470 1222 443 1222 414 1222 528 1222 492 1223 402 1223 394 1223 418 1223 498 1223 443 1223 534 1223 470 1223 512 1224 547 1224 535 1224 414 1224 518 1224 522 1224 535 1224 433 1224 559 1225 526 1225 471 1225 432 1225 437 1225 432 1225 338 1225 520 1226 526 1226 527 1226 511 1226 444 1226 532 1226 529 1226 477 1226 365 1227 514 1227 447 1227 571 1227 504 1227 507 1227 568 1227 496 1228 421 1228 541 1228 535 1228 592 1228 451 1228 495 1228 477 1228 389 1229 511 1229 615 1229 519 1229 431 1229 500 1229 539 1229 558 1230 520 1230 375 1230 466 1230 459 1230 505 1230 528 1230 374 1230 515 1231 532 1231 497 1231 426 1231 563 1231 524 1231 460 1231 496 1232 472 1232 545 1232 480 1232 526 1232 548 1232 436 1232 503 1232 425 1233 428 1233 453 1233 518 1233 449 1233 558 1233 447 1233 511 1234 451 1234 575 1234 489 1234 546 1234 548 1234 505 1234 530 1234 454 1235 514 1235 515 1235 346 1235 482 1235 423 1235 455 1235 470 1236 478 1236 444 1236 485 1236 479 1236 469 1236 551 1236 445 1236 522 1237 510 1237 468 1237 494 1237 563 1237 414 1237 465 1237 483 1238 492 1238 444 1238 439 1238 485 1238 264 1238 429 1238 465 1238 469 1239 403 1239 542 1239 479 1239 574 1239 495 1239 494 1239 475 1240 479 1240 430 1240 486 1240 571 1240 541 1240 577 1240 436 1240 532 1241 582 1241 377 1241 423 1241 454 1241 454 1241 447 1241 441 1241 516 1242 415 1242 434 1242 540 1242 503 1242 532 1242 491 1242 477 1243 508 1243 572 1243 421 1243 423 1243 515 1243 523 1243 467 1243 418 1244 491 1244 446 1244 454 1244 572 1244 401 1244 424 1244 437 1245 441 1245 519 1245 435 1245 604 1245 378 1245 485 1245 497 1245 495 1246 488 1246 438 1246 467 1246 585 1246 489 1246 462 1246 535 1247 515 1247 509 1247 559 1247 521 1247 358 1247 537 1247 530 1247 582 1248 571 1248 526 1248 520 1248 400 1248 446 1248 564 1248 548 1249 441 1249 442 1249 462 1249 515 1249 468 1249 480 1249 593 1249 467 1250 547 1250 423 1250 455 1250 462 1250 587 1250 469 1250 415 1251 584 1251 546 1251 491 1251 481 1251 497 1251 532 1251 441 1251 433 1252 516 1252 456 1252 558 1252 458 1252 495 1252 529 1252 506 1253 547 1253 550 1253 391 1253 471 1253 404 1253 475 1253 405 1253 493 1254 391 1254 551 1254 542 1254 456 1254 542 1254 545 1254 472 1255 578 1255 407 1255 568 1255 435 1255 422 1255 516 1255 536 1255 546 1256 442 1256 419 1256 561 1256 570 1256 467 1256 447 1256 561 1256 508 1257 360 1257 517 1257 548 1257 524 1257 412 1257 544 1257 404 1258 570 1258 547 1258 454 1258 442 1258 316 1258 484 1258 549 1258 441 1259 542 1259 413 1259 496 1259 510 1259 402 1259 480 1259 574 1260 463 1260 504 1260 497 1260 606 1260 469 1260 450 1260 508 1260 591 1261 576 1261 572 1261 530 1261 528 1261 531 1261 472 1261 514 1262 413 1262 457 1262 438 1262 451 1262 542 1262 500 1262 539 1262 597 1263 436 1263 561 1263 441 1263 508 1263 559 1263 417 1263 459 1264 437 1264 475 1264 406 1264 516" fill="none" stroke="#00ffff" stroke-width="1.6" shape-rendering="auto"/><path d="M69 463h0M69 414h0M69 443h0M69 527h0M70 498h0M70 407h0M70 558h0M70 408h0M70 430h0M70 503h0M70 542h0M71 529h0M71 353h0M71 484h0M71 464h0M71 482h0M71 414h0M71 422h0M71 443h0M72 409h0M72 523h0M72 515h0M72 458h0M72 557h0M72 591h0M72 511h0M73 477h0M73 412h0M73 468h0M73 499h0M73 484h0M73 525h0M73 544h0M73 551h0M74 427h0M74 530h0M74 484h0M74 578h0M74 422h0M74 519h0M74 518h0M75 443h0M75 485h0M75 416h0M75 481h0M75 465h0M75 545h0M75 490h0M75 470h0M76 440h0M76 534h0M76 478h0M76 530h0M76 514h0M76 511h0M76 535h0M77 445h0M77 484h0M77 401h0M77 460h0M77 491h0M77 487h0M77 497h0M77 542h0M78 495h0M78 513h0M78 474h0M78 552h0M78 410h0M78 521h0M78 429h0M78 527h0M79 411h0M79 459h0M79 547h0M79 412h0M79 422h0M79 433h0M79 460h0M80 540h0M80 536h0M80 414h0M80 465h0M80 540h0M80 407h0M80 452h0M80 447h0M81 482h0M81 483h0M81 528h0M81 555h0M81 430h0M81 442h0M81 477h0M82 502h0M82 419h0M82 581h0M82 516h0M82 565h0M82 544h0M82 426h0M82 464h0M83 571h0M83 466h0M83 420h0M83 507h0M83 493h0M83 441h0M83 498h0M84 496h0M84 435h0M84 418h0M84 547h0M84 427h0M84 573h0M84 455h0M84 424h0M85 535h0M85 490h0M85 433h0M85 567h0M85 593h0M85 463h0M85 460h0M86 439h0M86 525h0M86 539h0M86 507h0M86 553h0M86 460h0M86 388h0M86 391h0M87 494h0M87 501h0M87 463h0M87 515h0M87 508h0M87 476h0M87 543h0M88 410h0M88 430h0M88 455h0M88 465h0M88 419h0M88 482h0M88 438h0M88 554h0M89 512h0M89 497h0M89 371h0M89 514h0M89 452h0M89 455h0M89 446h0M90 457h0M90 387h0M90 494h0M90 540h0M90 508h0M90 563h0M90 537h0M90 391h0M91 430h0M91 567h0M91 486h0M91 497h0M91 452h0M91 432h0M91 516h0M92 414h0M92 461h0M92 468h0M92 436h0M92 390h0M92 549h0M92 500h0M92 434h0M93 437h0M93 455h0M93 398h0M93 424h0M93 427h0M93 418h0M93 482h0M93 417h0M94 559h0M94 531h0M94 560h0M94 531h0M94 527h0M94 522h0M94 474h0M95 559h0M95 471h0M95 533h0M95 446h0M95 553h0M95 538h0M95 427h0M95 517h0M96 418h0M96 438h0M96 443h0M96 530h0M96 451h0M96 347h0M96 434h0M97 431h0M97 436h0M97 598h0M97 493h0M97 485h0M97 552h0M97 455h0M97 429h0M98 524h0M98 450h0M98 445h0M98 565h0M98 443h0M98 421h0M98 534h0M99 472h0M99 492h0M99 478h0M99 533h0M99 482h0M99 459h0M99 422h0M99 445h0M100 535h0M100 435h0M100 432h0M100 540h0M100 525h0M100 559h0M100 457h0M101 512h0M101 336h0M101 424h0M101 499h0M101 513h0M101 485h0M101 453h0M101 549h0M102 503h0M102 556h0M102 478h0M102 567h0M102 512h0M102 499h0M102 499h0M103 526h0M103 536h0M103 462h0M103 505h0M103 565h0M103 425h0M103 451h0M103 548h0M104 551h0M104 425h0M104 561h0M104 531h0M104 550h0M104 487h0M104 421h0M105 527h0M105 535h0M105 392h0M105 469h0M105 545h0M105 479h0M105 420h0M105 593h0M106 372h0M106 542h0M106 443h0M106 434h0M106 432h0M106 455h0M106 476h0M107 564h0M107 487h0M107 445h0M107 523h0M107 513h0M107 461h0M107 462h0M107 413h0M108 546h0M108 538h0M108 430h0M108 489h0M108 441h0M108 398h0M108 432h0M109 427h0M109 412h0M109 505h0M109 449h0M109 537h0M109 452h0M109 454h0M109 452h0M110 470h0M110 489h0M110 506h0M110 542h0M110 427h0M110 486h0M110 493h0M110 488h0M111 470h0M111 481h0M111 456h0M111 404h0M111 524h0M111 396h0M111 442h0M112 408h0M112 498h0M112 449h0M112 429h0M112 427h0M112 351h0M112 533h0M112 413h0M113 532h0M113 552h0M113 463h0M113 480h0M113 402h0M113 518h0M113 379h0M114 506h0M114 294h0M114 535h0M114 494h0M114 359h0M114 495h0M114 509h0M114 425h0M115 512h0M115 550h0M115 536h0M115 422h0M115 443h0M115 508h0M115 495h0M116 542h0M116 564h0M116 571h0M116 459h0M116 364h0M116 540h0M116 415h0M116 484h0M117 529h0M117 442h0M117 514h0M117 463h0M117 536h0M117 478h0M117 466h0M118 474h0M118 499h0M118 444h0M118 426h0M118 519h0M118 549h0M118 564h0M118 394h0M119 394h0M119 417h0M119 402h0M119 474h0M119 483h0M119 464h0M119 401h0M120 554h0M120 463h0M120 490h0M120 547h0M120 483h0M120 470h0M120 563h0M120 433h0M121 412h0M121 456h0M121 428h0M121 410h0M121 430h0M121 432h0M121 506h0M122 512h0M122 450h0M122 526h0M122 396h0M122 478h0M122 527h0M122 403h0M122 535h0M123 469h0M123 538h0M123 417h0M123 463h0M123 414h0M123 644h0M123 436h0M124 465h0M124 445h0M124 395h0M124 513h0M124 342h0M124 436h0M124 438h0M124 514h0M125 396h0M125 541h0M125 470h0M125 427h0M125 550h0M125 430h0M125 401h0M125 424h0M126 463h0M126 477h0M126 396h0M126 450h0M126 436h0M126 547h0M126 441h0M127 510h0M127 350h0M127 490h0M127 492h0M127 503h0M127 449h0M127 543h0M127 485h0M128 536h0M128 453h0M128 391h0M128 595h0M128 484h0M128 446h0M128 474h0M129 475h0M129 455h0M129 496h0M129 436h0M129 421h0M129 439h0M129 448h0M129 491h0M130 456h0M130 516h0M130 446h0M130 487h0M130 497h0M130 446h0M130 461h0M131 483h0M131 437h0M131 513h0M131 415h0M131 430h0M131 500h0M131 437h0M131 548h0M132 497h0M132 404h0M132 511h0M132 458h0M132 438h0M132 405h0M132 450h0M133 505h0M133 527h0M133 513h0M133 523h0M133 488h0M133 395h0M133 505h0M133 497h0M134 489h0M134 492h0M134 394h0M134 417h0M134 496h0M134 396h0M134 392h0M135 508h0M135 464h0M135 551h0M135 430h0M135 517h0M135 516h0M135 537h0M135 490h0M136 600h0M136 431h0M136 481h0M136 430h0M136 498h0M136 513h0M136 442h0M137 542h0M137 511h0M137 446h0M137 413h0M137 563h0M137 434h0M137 513h0M137 493h0M138 547h0M138 463h0M138 523h0M138 463h0M138 489h0M138 459h0M138 542h0M139 490h0M139 478h0M139 473h0M139 508h0M139 540h0M139 502h0M139 520h0M139 526h0M140 535h0M140 515h0M140 430h0M140 445h0M140 538h0M140 538h0M140 526h0M141 433h0M141 501h0M141 431h0M141 433h0M141 472h0M141 470h0M141 424h0M141 518h0M142 575h0M142 492h0M142 468h0M142 533h0M142 388h0M142 460h0M142 531h0M142 258h0M143 531h0M143 492h0M143 397h0M143 555h0M143 563h0M143 541h0M143 505h0M144 547h0M144 320h0M144 530h0M144 534h0M144 403h0M144 542h0M144 390h0M144 455h0M145 490h0M145 359h0M145 596h0M145 396h0M145 402h0M145 621h0M145 565h0M146 487h0M146 434h0M146 435h0M146 534h0M146 396h0M146 410h0M146 562h0M146 485h0M147 561h0M147 454h0M147 391h0M147 376h0M147 442h0M147 445h0M147 465h0M148 454h0M148 377h0M148 381h0M148 482h0M148 490h0M148 543h0M148 429h0M148 472h0M149 519h0M149 533h0M149 360h0M149 500h0M149 387h0M149 541h0M149 534h0M150 511h0M150 574h0M150 403h0M150 517h0M150 411h0M150 458h0M150 410h0M150 504h0M151 536h0M151 434h0M151 394h0M151 551h0M151 437h0M151 447h0M151 527h0M152 528h0M152 427h0M152 517h0M152 445h0M152 532h0M152 409h0M152 548h0M152 509h0M153 558h0M153 501h0M153 444h0M153 532h0M153 508h0M153 447h0M153 473h0M154 512h0M154 351h0M154 480h0M154 427h0M154 485h0M154 450h0M154 560h0M154 452h0M155 484h0M155 459h0M155 436h0M155 498h0M155 571h0M155 407h0M155 438h0M156 522h0M156 418h0M156 503h0M156 527h0M156 428h0M156 520h0M156 506h0M156 502h0M157 571h0M157 512h0M157 277h0M157 473h0M157 527h0M157 464h0M157 518h0M157 413h0M158 419h0M158 445h0M158 467h0M158 475h0M158 533h0M158 520h0M158 240h0M159 496h0M159 443h0M159 573h0M159 463h0M159 399h0M159 458h0M159 596h0M159 454h0M160 527h0M160 432h0M160 570h0M160 506h0M160 417h0M160 482h0M160 475h0M161 403h0M161 501h0M161 526h0M161 480h0M161 547h0M161 561h0M161 473h0M161 390h0M162 466h0M162 483h0M162 499h0M162 468h0M162 433h0M162 465h0M162 421h0M163 388h0M163 504h0M163 461h0M163 474h0M163 525h0M163 443h0M163 417h0M163 536h0M164 476h0M164 468h0M164 492h0M164 523h0M164 303h0M164 435h0M164 545h0M165 469h0M165 525h0M165 477h0M165 391h0M165 565h0M165 536h0M165 523h0M165 428h0M166 386h0M166 551h0M166 504h0M166 523h0M166 489h0M166 409h0M166 561h0M167 534h0M167 490h0M167 472h0M167 468h0M167 514h0M167 531h0M167 500h0M167 416h0M168 442h0M168 559h0M168 580h0M168 536h0M168 407h0M168 573h0M168 412h0M169 478h0M169 493h0M169 438h0M169 465h0M169 574h0M169 553h0M169 482h0M169 531h0M170 416h0M170 545h0M170 481h0M170 502h0M170 446h0M170 531h0M170 556h0M171 489h0M171 400h0M171 491h0M171 497h0M171 429h0M171 446h0M171 421h0M171 426h0M172 494h0M172 433h0M172 523h0M172 515h0M172 486h0M172 491h0M172 403h0M173 538h0M173 415h0M173 484h0M173 543h0M173 282h0M173 405h0M173 563h0M173 411h0M174 550h0M174 524h0M174 469h0M174 426h0M174 571h0M174 425h0M174 472h0M174 561h0M175 304h0M175 469h0M175 490h0M175 465h0M175 480h0M175 381h0M175 515h0M176 453h0M176 520h0M176 431h0M176 398h0M176 383h0M176 515h0M176 476h0M176 402h0M177 416h0M177 470h0M177 408h0M177 513h0M177 508h0M177 387h0M177 484h0M178 471h0M178 416h0M178 473h0M178 505h0M178 545h0M178 457h0M178 621h0M178 457h0M179 451h0M179 544h0M179 527h0M179 519h0M179 502h0M179 456h0M179 470h0M180 492h0M180 443h0M180 541h0M180 516h0M180 524h0M180 409h0M180 496h0M180 472h0M181 563h0M181 465h0M181 451h0M181 589h0M181 501h0M181 459h0M181 477h0M182 539h0M182 456h0M182 555h0M182 395h0M182 544h0M182 508h0M182 527h0M182 387h0M183 500h0M183 443h0M183 389h0M183 395h0M183 557h0M183 467h0M183 477h0M184 450h0M184 494h0M184 509h0M184 554h0M184 572h0M184 450h0M184 558h0M184 404h0M185 507h0M185 535h0M185 562h0M185 426h0M185 520h0M185 533h0M185 465h0M186 551h0M186 498h0M186 440h0M186 435h0M186 452h0M186 526h0M186 548h0M186 552h0M187 517h0M187 548h0M187 502h0M187 448h0M187 565h0M187 358h0M187 410h0M188 346h0M188 511h0M188 556h0M188 492h0M188 440h0M188 478h0M188 478h0M188 556h0M189 518h0M189 383h0M189 402h0M189 450h0M189 449h0M189 511h0M189 553h0M189 429h0M190 572h0M190 557h0M190 419h0M190 454h0M190 443h0M190 322h0M190 596h0M191 583h0M191 408h0M191 410h0M191 525h0M191 408h0M191 505h0M191 516h0M191 455h0M192 590h0M192 495h0M192 521h0M192 465h0M192 489h0M192 440h0M192 412h0M193 520h0M193 503h0M193 392h0M193 530h0M193 552h0M193 550h0M193 399h0M193 486h0M194 535h0M194 474h0M194 466h0M194 359h0M194 392h0M194 373h0M194 531h0M195 450h0M195 494h0M195 426h0M195 456h0M195 446h0M195 459h0M195 535h0M195 424h0M196 570h0M196 446h0M196 366h0M196 492h0M196 391h0M196 488h0M196 558h0M197 495h0M197 434h0M197 564h0M197 501h0M197 582h0M197 476h0M197 484h0M197 468h0M198 529h0M198 474h0M198 519h0M198 434h0M198 395h0M198 438h0M198 486h0M199 384h0M199 489h0M199 417h0M199 537h0M199 439h0M199 506h0M199 465h0M199 389h0M200 580h0M200 456h0M200 471h0M200 512h0M200 476h0M200 571h0M200 519h0M201 458h0M201 581h0M201 475h0M201 420h0M201 389h0M201 401h0M201 420h0M201 529h0M202 438h0M202 445h0M202 428h0M202 399h0M202 438h0M202 440h0M202 517h0M203 464h0M203 531h0M203 540h0M203 561h0M203 416h0M203 430h0M203 542h0M203 562h0M204 526h0M204 532h0M204 540h0M204 420h0M204 509h0M204 469h0M204 538h0M204 437h0M205 480h0M205 536h0M205 502h0M205 417h0M205 402h0M205 452h0M205 505h0M206 427h0M206 488h0M206 499h0M206 405h0M206 500h0M206 342h0M206 510h0M206 397h0M207 571h0M207 477h0M207 388h0M207 541h0M207 542h0M207 520h0M207 539h0M208 511h0M208 455h0M208 513h0M208 497h0M208 408h0M208 441h0M208 480h0M208 536h0M209 556h0M209 466h0M209 494h0M209 411h0M209 457h0M209 459h0M209 539h0M210 484h0M210 402h0M210 429h0M210 525h0M210 405h0M210 449h0M210 518h0M210 500h0M211 477h0M211 540h0M211 472h0M211 414h0M211 470h0M211 423h0M211 483h0M212 474h0M212 528h0M212 415h0M212 516h0M212 408h0M212 494h0M212 441h0M212 394h0M213 515h0M213 415h0M213 406h0M213 551h0M213 464h0M213 563h0M213 477h0M214 515h0M214 519h0M214 547h0M214 533h0M214 446h0M214 403h0M214 503h0M214 372h0M215 401h0M215 503h0M215 413h0M215 542h0M215 434h0M215 328h0M215 535h0M216 449h0M216 513h0M216 538h0M216 524h0M216 537h0M216 457h0M216 486h0M216 520h0M217 476h0M217 507h0M217 477h0M217 440h0M217 391h0M217 572h0M217 465h0M218 470h0M218 471h0M218 406h0M218 551h0M218 465h0M218 457h0M218 407h0M218 445h0M219 424h0M219 554h0M219 483h0M219 519h0M219 511h0M219 505h0M219 483h0M220 471h0M220 480h0M220 552h0M220 547h0M220 479h0M220 422h0M220 362h0M220 451h0M221 435h0M221 570h0M221 513h0M221 578h0M221 483h0M221 459h0M221 481h0M221 531h0M222 469h0M222 505h0M222 483h0M222 451h0M222 407h0M222 503h0M222 485h0M223 480h0M223 404h0M223 354h0M223 461h0M223 455h0M223 493h0M223 416h0M223 504h0M224 529h0M224 420h0M224 505h0M224 416h0M224 464h0M224 511h0M224 586h0M225 472h0M225 552h0M225 408h0M225 327h0M225 509h0M225 545h0M225 434h0M225 509h0M226 573h0M226 461h0M226 507h0M226 518h0M226 462h0M226 405h0M226 405h0M227 546h0M227 481h0M227 463h0M227 429h0M227 348h0M227 479h0M227 456h0M227 462h0M228 505h0M228 468h0M228 526h0M228 348h0M228 331h0M228 537h0M228 556h0M229 349h0M229 516h0M229 401h0M229 400h0M229 400h0M229 507h0M229 572h0M229 507h0M230 385h0M230 430h0M230 566h0M230 439h0M230 399h0M230 392h0M230 444h0M231 430h0M231 418h0M231 476h0M231 544h0M231 420h0M231 534h0M231 520h0M231 396h0M232 476h0M232 461h0M232 406h0M232 499h0M232 361h0M232 417h0M232 517h0M233 501h0M233 543h0M233 410h0M233 542h0M233 552h0M233 416h0M233 501h0M233 457h0M234 437h0M234 536h0M234 557h0M234 494h0M234 535h0M234 412h0M234 440h0M235 447h0M235 449h0M235 555h0M235 542h0M235 399h0M235 550h0M235 484h0M235 521h0M236 399h0M236 552h0M236 527h0M236 521h0M236 457h0M236 441h0M236 429h0M236 493h0M237 546h0M237 454h0M237 400h0M237 549h0M237 453h0M237 539h0M237 497h0M238 561h0M238 458h0M238 422h0M238 460h0M238 469h0M238 462h0M238 484h0M238 505h0M239 482h0M239 483h0M239 524h0M239 542h0M239 542h0M239 477h0M239 504h0M240 448h0M240 398h0M240 510h0M240 309h0M240 413h0M240 514h0M240 481h0M240 501h0M241 458h0M241 414h0M241 568h0M241 396h0M241 462h0M241 413h0M241 450h0M242 444h0M242 506h0M242 426h0M242 525h0M242 496h0M242 446h0M242 575h0M242 559h0M243 430h0M243 437h0M243 653h0M243 610h0M243 443h0M243 556h0M243 436h0M244 480h0M244 440h0M244 477h0M244 516h0M244 456h0M244 490h0M244 472h0M244 492h0M245 528h0M245 477h0M245 435h0M245 383h0M245 429h0M245 561h0M245 457h0M246 511h0M246 437h0M246 367h0M246 530h0M246 495h0M246 500h0M246 524h0M246 481h0M247 478h0M247 503h0M247 431h0M247 496h0M247 464h0M247 499h0M247 471h0M248 551h0M248 486h0M248 526h0M248 482h0M248 559h0M248 455h0M248 435h0M248 488h0M249 571h0M249 454h0M249 564h0M249 392h0M249 529h0M249 517h0M249 489h0M250 562h0M250 355h0M250 511h0M250 404h0M250 424h0M250 483h0M250 443h0M250 535h0M251 406h0M251 483h0M251 509h0M251 432h0M251 441h0M251 538h0M251 495h0M252 453h0M252 409h0M252 483h0M252 436h0M252 415h0M252 424h0M252 422h0M252 504h0M253 522h0M253 460h0M253 430h0M253 506h0M253 477h0M253 550h0M253 435h0M253 514h0M254 465h0M254 557h0M254 457h0M254 502h0M254 466h0M254 538h0M254 496h0M255 538h0M255 515h0M255 549h0M255 505h0M255 507h0M255 425h0M255 423h0M255 429h0M256 426h0M256 485h0M256 565h0M256 432h0M256 451h0M256 432h0M256 425h0M257 428h0M257 485h0M257 463h0M257 466h0M257 528h0M257 507h0M257 543h0M257 435h0M258 493h0M258 525h0M258 422h0M258 465h0M258 450h0M258 396h0M258 533h0M259 486h0M259 541h0M259 490h0M259 419h0M259 542h0M259 462h0M259 399h0M259 496h0M260 414h0M260 498h0M260 496h0M260 483h0M260 520h0M260 513h0M260 478h0M261 390h0M261 497h0M261 540h0M261 421h0M261 532h0M261 404h0M261 448h0M261 449h0M262 496h0M262 503h0M262 554h0M262 545h0M262 502h0M262 527h0M262 404h0M263 483h0M263 378h0M263 418h0M263 539h0M263 367h0M263 534h0M263 554h0M263 227h0M264 307h0M264 551h0M264 549h0M264 471h0M264 459h0M264 572h0M264 457h0M265 522h0M265 456h0M265 490h0M265 478h0M265 496h0M265 508h0M265 381h0M265 425h0M266 573h0M266 489h0M266 512h0M266 557h0M266 530h0M266 523h0M266 397h0M267 444h0M267 426h0M267 463h0M267 505h0M267 514h0M267 463h0M267 515h0M267 498h0M268 424h0M268 552h0M268 391h0M268 485h0M268 464h0M268 472h0M268 456h0M268 527h0M269 544h0M269 606h0M269 524h0M269 428h0M269 459h0M269 466h0M269 548h0M270 512h0M270 437h0M270 404h0M270 486h0M270 492h0M270 501h0M270 476h0M270 397h0M271 328h0M271 513h0M271 586h0M271 545h0M271 389h0M271 394h0M271 379h0M272 583h0M272 503h0M272 435h0M272 439h0M272 412h0M272 518h0M272 462h0M272 362h0M273 361h0M273 531h0M273 413h0M273 482h0M273 470h0M273 438h0M273 529h0M274 512h0M274 381h0M274 567h0M274 544h0M274 499h0M274 474h0M274 482h0M274 438h0M275 540h0M275 526h0M275 431h0M275 456h0M275 486h0M275 530h0M275 493h0M276 529h0M276 406h0M276 450h0M276 536h0M276 550h0M276 462h0M276 484h0M276 463h0M277 411h0M277 402h0M277 446h0M277 500h0M277 389h0M277 492h0M277 522h0M278 481h0M278 491h0M278 416h0M278 425h0M278 545h0M278 385h0M278 495h0M278 466h0M279 404h0M279 379h0M279 419h0M279 435h0M279 424h0M279 498h0M279 386h0M280 577h0M280 438h0M280 520h0M280 545h0M280 515h0M280 534h0M280 457h0M280 344h0M281 512h0M281 439h0M281 429h0M281 349h0M281 481h0M281 469h0M281 419h0M282 444h0M282 348h0M282 556h0M282 558h0M282 406h0M282 513h0M282 529h0M282 523h0M283 482h0M283 494h0M283 532h0M283 498h0M283 527h0M283 453h0M283 458h0M284 415h0M284 428h0M284 490h0M284 516h0M284 428h0M284 443h0M284 426h0M284 424h0M285 440h0M285 472h0M285 536h0M285 460h0M285 356h0M285 504h0M285 449h0M285 477h0M286 576h0M286 462h0M286 457h0M286 488h0M286 540h0M286 461h0M286 425h0M287 558h0M287 538h0M287 509h0M287 492h0M287 516h0M287 471h0M287 537h0M287 382h0M288 499h0M288 435h0M288 499h0M288 448h0M288 436h0M288 468h0M288 588h0M289 417h0M289 473h0M289 543h0M289 490h0M289 473h0M289 468h0M289 497h0M289 506h0M290 509h0M290 368h0M290 523h0M290 574h0M290 467h0M290 515h0M290 564h0M291 433h0M291 453h0M291 461h0M291 489h0M291 525h0M291 400h0M291 406h0M291 517h0M292 509h0M292 490h0M292 561h0M292 402h0M292 426h0M292 464h0M292 421h0M293 579h0M293 508h0M293 487h0M293 443h0M293 510h0M293 427h0M293 408h0M293 529h0M294 506h0M294 504h0M294 398h0M294 529h0M294 545h0M294 492h0M294 459h0M295 560h0M295 393h0M295 521h0M295 455h0M295 530h0M295 421h0M295 345h0M295 458h0M296 360h0M296 526h0M296 552h0M296 448h0M296 499h0M296 518h0M296 387h0M297 494h0M297 483h0M297 441h0M297 464h0M297 400h0M297 521h0M297 512h0M297 503h0M298 532h0M298 446h0M298 551h0M298 503h0M298 451h0M298 373h0M298 504h0M299 504h0M299 463h0M299 457h0M299 388h0M299 425h0M299 497h0M299 489h0M299 492h0M300 533h0M300 429h0M300 523h0M300 535h0M300 484h0M300 503h0M300 563h0M300 419h0M301 473h0M301 492h0M301 392h0M301 447h0M301 527h0M301 510h0M301 412h0M302 386h0M302 388h0M302 410h0M302 534h0M302 579h0M302 505h0M302 581h0M302 376h0M303 564h0M303 381h0M303 526h0M303 527h0M303 490h0M303 530h0M303 410h0M304 452h0M304 533h0M304 410h0M304 444h0M304 516h0M304 420h0M304 409h0M304 442h0M305 385h0M305 412h0M305 400h0M305 505h0M305 307h0M305 468h0M305 434h0M306 536h0M306 493h0M306 512h0M306 399h0M306 583h0M306 540h0M306 561h0M306 479h0M307 566h0M307 521h0M307 515h0M307 379h0M307 552h0M307 528h0M307 405h0M308 483h0M308 386h0M308 445h0M308 512h0M308 465h0M308 505h0M308 436h0M308 517h0M309 516h0M309 526h0M309 532h0M309 524h0M309 418h0M309 422h0M309 480h0M310 448h0M310 493h0M310 353h0M310 506h0M310 377h0M310 516h0M310 393h0M310 393h0M311 513h0M311 430h0M311 509h0M311 462h0M311 427h0M311 454h0M311 408h0M312 436h0M312 384h0M312 538h0M312 463h0M312 514h0M312 551h0M312 450h0M312 445h0M313 449h0M313 392h0M313 439h0M313 496h0M313 498h0M313 433h0M313 406h0M314 433h0M314 367h0M314 497h0M314 447h0M314 537h0M314 362h0M314 460h0M314 488h0M315 409h0M315 507h0M315 455h0M315 438h0M315 462h0M315 471h0M315 448h0M316 496h0M316 600h0M316 359h0M316 407h0M316 418h0M316 403h0M316 485h0M316 562h0M317 435h0M317 492h0M317 446h0M317 418h0M317 503h0M317 579h0M317 415h0M317 456h0M318 394h0M318 513h0M318 457h0M318 406h0M318 446h0M318 491h0M318 279h0M319 608h0M319 525h0M319 496h0M319 540h0M319 424h0M319 534h0M319 476h0M319 511h0M320 496h0M320 451h0M320 472h0M320 447h0M320 492h0M320 475h0M320 421h0M321 516h0M321 458h0M321 425h0M321 563h0M321 420h0M321 494h0M321 506h0M321 434h0M322 424h0M322 451h0M322 406h0M322 550h0M322 493h0M322 451h0M322 410h0M323 451h0M323 470h0M323 506h0M323 446h0M323 479h0M323 411h0M323 403h0M323 456h0M324 436h0M324 560h0M324 536h0M324 473h0M324 458h0M324 384h0M324 422h0M325 429h0M325 548h0M325 501h0M325 509h0M325 430h0M325 534h0M325 406h0M325 524h0M326 505h0M326 444h0M326 461h0M326 417h0M326 412h0M326 526h0M326 420h0M327 509h0M327 483h0M327 435h0M327 380h0M327 490h0M327 418h0M327 568h0M327 529h0M328 386h0M328 512h0M328 475h0M328 480h0M328 535h0M328 544h0M328 412h0M329 552h0M329 563h0M329 420h0M329 412h0M329 424h0M329 497h0M329 512h0M329 478h0M330 381h0M330 492h0M330 634h0M330 527h0M330 484h0M330 548h0M330 478h0M331 434h0M331 485h0M331 402h0M331 419h0M331 490h0M331 429h0M331 514h0M331 424h0M332 500h0M332 481h0M332 404h0M332 468h0M332 442h0M332 431h0M332 506h0M332 402h0M333 572h0M333 532h0M333 400h0M333 527h0M333 384h0M333 562h0M333 491h0M334 488h0M334 459h0M334 490h0M334 492h0M334 529h0M334 390h0M334 541h0M334 329h0M335 534h0M335 455h0M335 395h0M335 511h0M335 496h0M335 376h0M335 456h0M336 454h0M336 493h0M336 559h0M336 526h0M336 420h0M336 456h0M336 437h0M336 425h0M337 426h0M337 520h0M337 395h0M337 419h0M337 406h0M337 429h0M337 481h0M338 505h0M338 378h0M338 445h0M338 528h0M338 561h0M338 537h0M338 490h0M338 533h0M339 445h0M339 546h0M339 569h0M339 396h0M339 515h0M339 491h0M339 528h0M340 555h0M340 474h0M340 461h0M340 557h0M340 420h0M340 394h0M340 467h0M340 483h0M341 542h0M341 534h0M341 507h0M341 431h0M341 571h0M341 413h0M341 465h0M342 567h0M342 555h0M342 469h0M342 450h0M342 514h0M342 416h0M342 526h0M342 485h0M343 522h0M343 470h0M343 522h0M343 540h0M343 427h0M343 273h0M343 321h0M344 474h0M344 438h0M344 362h0M344 461h0M344 527h0M344 517h0M344 459h0M344 517h0M345 534h0M345 452h0M345 429h0M345 523h0M345 496h0M345 526h0M345 485h0M346 464h0M346 433h0M346 542h0M346 394h0M346 601h0M346 504h0M346 419h0M346 421h0M347 472h0M347 531h0M347 447h0M347 390h0M347 562h0M347 483h0M347 571h0M348 429h0M348 406h0M348 556h0M348 451h0M348 416h0M348 544h0M348 511h0M348 451h0M349 507h0M349 483h0M349 388h0M349 475h0M349 469h0M349 535h0M349 532h0M349 426h0M350 541h0M350 453h0M350 470h0M350 464h0M350 370h0M350 440h0M350 471h0M351 495h0M351 486h0M351 452h0M351 397h0M351 494h0M351 556h0M351 535h0M351 430h0M352 449h0M352 475h0M352 515h0M352 565h0M352 479h0M352 423h0M352 477h0M353 441h0M353 518h0M353 520h0M353 454h0M353 495h0M353 483h0M353 543h0M353 467h0M354 514h0M354 462h0M354 523h0M354 430h0M354 506h0M354 486h0M354 371h0M355 424h0M355 440h0M355 524h0M355 420h0M355 518h0M355 398h0M355 410h0M355 461h0M356 423h0M356 479h0M356 452h0M356 518h0M356 392h0M356 437h0M356 551h0M357 520h0M357 460h0M357 425h0M357 515h0M357 398h0M357 524h0M357 374h0M357 421h0M358 595h0M358 482h0M358 570h0M358 554h0M358 468h0M358 417h0M358 433h0M359 503h0M359 386h0M359 552h0M359 415h0M359 383h0M359 558h0M359 415h0M359 436h0M360 440h0M360 430h0M360 395h0M360 476h0M360 523h0M360 413h0M360 490h0M361 522h0M361 345h0M361 528h0M361 526h0M361 511h0M361 501h0M361 515h0M361 513h0M362 569h0M362 523h0M362 426h0M362 572h0M362 494h0M362 434h0M362 569h0M363 528h0M363 451h0M363 417h0M363 370h0M363 508h0M363 419h0M363 393h0M363 504h0M364 472h0M364 415h0M364 354h0M364 493h0M364 564h0M364 443h0M364 416h0M364 479h0M365 531h0M365 485h0M365 434h0M365 501h0M365 491h0M365 530h0M365 512h0M366 524h0M366 521h0M366 419h0M366 589h0M366 444h0M366 438h0M366 484h0M366 461h0M367 543h0M367 470h0M367 486h0M367 460h0M367 462h0M367 602h0M367 409h0M368 464h0M368 442h0M368 510h0M368 436h0M368 471h0M368 398h0M368 497h0M368 398h0M369 550h0M369 460h0M369 553h0M369 546h0M369 468h0M369 550h0M369 410h0M370 535h0M370 397h0M370 540h0M370 519h0M370 414h0M370 474h0M370 431h0M370 397h0M371 562h0M371 445h0M371 418h0M371 448h0M371 462h0M371 518h0M371 549h0M372 413h0M372 473h0M372 514h0M372 571h0M372 466h0M372 552h0M372 451h0M372 483h0M373 533h0M373 579h0M373 486h0M373 561h0M373 454h0M373 480h0M373 532h0M374 405h0M374 464h0M374 537h0M374 431h0M374 361h0M374 430h0M374 504h0M374 395h0M375 560h0M375 490h0M375 527h0M375 500h0M375 475h0M375 390h0M375 505h0M376 557h0M376 423h0M376 560h0M376 495h0M376 525h0M376 497h0M376 419h0M376 468h0M377 489h0M377 334h0M377 420h0M377 520h0M377 593h0M377 484h0M377 361h0M378 539h0M378 406h0M378 487h0M378 498h0M378 398h0M378 451h0M378 467h0M378 542h0M379 401h0M379 395h0M379 423h0M379 382h0M379 474h0M379 508h0M379 468h0M380 537h0M380 466h0M380 575h0M380 585h0M380 441h0M380 508h0M380 390h0M380 469h0M381 431h0M381 463h0M381 415h0M381 354h0M381 402h0M381 421h0M381 564h0M381 521h0M382 484h0M382 513h0M382 520h0M382 431h0M382 563h0M382 552h0M382 447h0M383 426h0M383 528h0M383 393h0M383 431h0M383 477h0M383 539h0M383 502h0M383 401h0M384 418h0M384 543h0M384 436h0M384 400h0M384 465h0M384 538h0M384 557h0M385 553h0M385 507h0M385 425h0M385 425h0M385 405h0M385 458h0M385 532h0M385 506h0M386 434h0M386 422h0M386 502h0M386 442h0M386 418h0M386 387h0M386 364h0M387 450h0M387 476h0M387 473h0M387 505h0M387 564h0M387 546h0M387 430h0M387 458h0M388 463h0M388 544h0M388 522h0M388 482h0M388 405h0M388 493h0M388 538h0M389 448h0M389 403h0M389 445h0M389 405h0M389 482h0M389 507h0M389 501h0M389 588h0M390 428h0M390 497h0M390 450h0M390 408h0M390 387h0M390 424h0M390 511h0M391 389h0M391 463h0M391 489h0M391 473h0M391 544h0M391 420h0M391 517h0M391 534h0M392 379h0M392 525h0M392 424h0M392 499h0M392 472h0M392 451h0M392 541h0M393 487h0M393 451h0M393 459h0M393 400h0M393 431h0M393 531h0M393 407h0M393 476h0M394 473h0M394 509h0M394 476h0M394 455h0M394 429h0M394 435h0M394 555h0M395 352h0M395 493h0M395 450h0M395 425h0M395 479h0M395 414h0M395 413h0M395 582h0M396 507h0M396 499h0M396 519h0M396 436h0M396 427h0M396 533h0M396 448h0M396 504h0M397 553h0M397 394h0M397 489h0M397 542h0M397 568h0M397 406h0M397 474h0M398 460h0M398 520h0M398 452h0M398 500h0M398 456h0M398 461h0M398 411h0M398 524h0M399 543h0M399 424h0M399 412h0M399 453h0M399 405h0M399 412h0M399 443h0M400 497h0M400 515h0M400 359h0M400 552h0M400 482h0M400 510h0M400 535h0M400 485h0M401 521h0M401 478h0M401 430h0M401 462h0M401 578h0M401 474h0M401 527h0M402 502h0M402 429h0M402 418h0M402 560h0M402 587h0M402 416h0M402 426h0M402 448h0M403 393h0M403 438h0M403 409h0M403 278h0M403 325h0M403 462h0M403 491h0M404 463h0M404 527h0M404 451h0M404 408h0M404 503h0M404 389h0M404 466h0M404 459h0M405 556h0M405 542h0M405 465h0M405 422h0M405 473h0M405 398h0M405 354h0M406 447h0M406 544h0M406 468h0M406 485h0M406 298h0M406 606h0M406 465h0M406 446h0M407 473h0M407 503h0M407 425h0M407 534h0M407 420h0M407 543h0M407 547h0M408 529h0M408 496h0M408 449h0M408 442h0M408 407h0M408 411h0M408 433h0M408 404h0M409 551h0M409 420h0M409 398h0M409 491h0M409 500h0M409 416h0M409 508h0M410 436h0M410 564h0M410 432h0M410 464h0M410 343h0M410 520h0M410 535h0M410 420h0M411 385h0M411 414h0M411 418h0M411 467h0M411 516h0M411 360h0M411 516h0M412 453h0M412 439h0M412 485h0M412 440h0M412 427h0M412 483h0M412 433h0M412 425h0M413 421h0M413 468h0M413 408h0M413 501h0M413 545h0M413 499h0M413 531h0M413 495h0M414 502h0M414 507h0M414 524h0M414 382h0M414 554h0M414 432h0M414 514h0M415 469h0M415 426h0M415 457h0M415 447h0M415 428h0M415 529h0M415 567h0M415 512h0M416 414h0M416 510h0M416 422h0M416 376h0M416 540h0M416 394h0M416 502h0M417 484h0M417 406h0M417 535h0M417 409h0M417 326h0M417 519h0M417 526h0M417 487h0M418 295h0M418 555h0M418 552h0M418 572h0M418 547h0M418 495h0M418 441h0M419 476h0M419 461h0M419 480h0M419 596h0M419 507h0M419 531h0M419 485h0M419 408h0M420 494h0M420 517h0M420 567h0M420 527h0M420 525h0M420 481h0M420 472h0M421 481h0M421 457h0M421 566h0M421 515h0M421 431h0M421 589h0M421 409h0M421 462h0M422 429h0M422 535h0M422 499h0M422 471h0M422 413h0M422 504h0M422 563h0M423 559h0M423 437h0M423 517h0M423 537h0M423 478h0M423 429h0M423 472h0M423 538h0M424 482h0M424 515h0M424 554h0M424 564h0M424 493h0M424 528h0M424 432h0M425 409h0M425 445h0M425 500h0M425 539h0M425 329h0M425 458h0M425 503h0M425 397h0M426 398h0M426 503h0M426 469h0M426 549h0M426 218h0M426 424h0M426 539h0M427 545h0M427 512h0M427 364h0M427 448h0M427 572h0M427 476h0M427 473h0M427 483h0M428 445h0M428 464h0M428 475h0M428 490h0M428 428h0M428 554h0M428 498h0M428 443h0M429 538h0M429 467h0M429 384h0M429 490h0M429 443h0M429 462h0M429 509h0M430 522h0M430 430h0M430 432h0M430 468h0M430 410h0M430 434h0M430 399h0M430 410h0M431 391h0M431 533h0M431 441h0M431 395h0M431 531h0M431 563h0M431 459h0M432 569h0M432 419h0M432 387h0M432 397h0M432 506h0M432 514h0M432 406h0M432 477h0M433 447h0M433 509h0M433 512h0M433 521h0M433 555h0M433 464h0M433 520h0M434 437h0M434 598h0M434 541h0M434 479h0M434 401h0M434 392h0M434 566h0M434 448h0M435 537h0M435 499h0M435 514h0M435 484h0M435 589h0M435 414h0M435 468h0M436 529h0M436 519h0M436 424h0M436 454h0M436 540h0M436 511h0M436 381h0M436 427h0M437 470h0M437 384h0M437 468h0M437 471h0M437 496h0M437 421h0M437 486h0M438 438h0M438 537h0M438 498h0M438 422h0M438 499h0M438 434h0M438 538h0M438 497h0M439 504h0M439 450h0M439 453h0M439 523h0M439 430h0M439 478h0M439 562h0M440 559h0M440 548h0M440 478h0M440 448h0M440 401h0M440 543h0M440 529h0M440 493h0M441 468h0M441 456h0M441 438h0M441 403h0M441 577h0M441 585h0M441 567h0M442 482h0M442 395h0M442 550h0M442 467h0M442 500h0M442 497h0M442 509h0M442 521h0M443 594h0M443 561h0M443 482h0M443 483h0M443 450h0M443 470h0M443 397h0M443 499h0M444 419h0M444 512h0M444 441h0M444 392h0M444 419h0M444 515h0M444 472h0M445 560h0M445 390h0M445 572h0M445 513h0M445 448h0M445 403h0M445 388h0M445 528h0M446 522h0M446 417h0M446 497h0M446 520h0M446 418h0M446 431h0M446 479h0M447 367h0M447 278h0M447 449h0M447 398h0M447 394h0M447 397h0M447 447h0M447 551h0M448 518h0M448 407h0M448 580h0M448 453h0M448 537h0M448 498h0M448 483h0M449 577h0M449 497h0M449 563h0M449 435h0M449 368h0M449 501h0M449 426h0M449 487h0M450 560h0M450 523h0M450 523h0M450 534h0M450 561h0M450 469h0M450 470h0M451 515h0M451 496h0M451 464h0M451 553h0M451 534h0M451 532h0M451 433h0M451 560h0M452 508h0M452 496h0M452 455h0M452 440h0M452 350h0M452 430h0M452 528h0M453 564h0M453 409h0M453 516h0M453 455h0M453 530h0M453 493h0M453 484h0M453 438h0M454 366h0M454 483h0M454 579h0M454 485h0M454 488h0M454 537h0M454 478h0M455 504h0M455 521h0M455 435h0M455 545h0M455 437h0M455 363h0M455 476h0M455 420h0M456 478h0M456 502h0M456 499h0M456 572h0M456 610h0M456 485h0M456 426h0M457 525h0M457 484h0M457 347h0M457 400h0M457 402h0M457 449h0M457 452h0M457 448h0M458 468h0M458 478h0M458 510h0M458 514h0M458 557h0M458 464h0M458 443h0M459 465h0M459 529h0M459 436h0M459 542h0M459 413h0M459 485h0M459 473h0M459 508h0M460 410h0M460 552h0M460 545h0M460 500h0M460 511h0M460 510h0M460 483h0M460 536h0M461 399h0M461 456h0M461 530h0M461 427h0M461 447h0M461 481h0M461 438h0M462 408h0M462 395h0M462 399h0M462 504h0M462 566h0M462 517h0M462 508h0M462 387h0M463 489h0M463 354h0M463 381h0M463 441h0M463 434h0M463 554h0M463 445h0M464 430h0M464 538h0M464 480h0M464 569h0M464 521h0M464 530h0M464 410h0M464 528h0M465 449h0M465 473h0M465 494h0M465 545h0M465 383h0M465 553h0M465 551h0M466 496h0M466 437h0M466 507h0M466 528h0M466 474h0M466 455h0M466 489h0M466 464h0M467 520h0M467 487h0M467 494h0M467 475h0M467 474h0M467 413h0M467 537h0M468 451h0M468 443h0M468 404h0M468 420h0M468 528h0M468 432h0M468 475h0M468 395h0M469 410h0M469 439h0M469 472h0M469 577h0M469 481h0M469 530h0M469 413h0M470 498h0M470 408h0M470 446h0M470 424h0M470 310h0M470 491h0M470 474h0M470 537h0M471 445h0M471 490h0M471 477h0M471 484h0M471 454h0M471 492h0M471 510h0M472 439h0M472 513h0M472 523h0M472 441h0M472 528h0M472 499h0M472 480h0M472 455h0M473 558h0M473 353h0M473 446h0M473 515h0M473 430h0M473 407h0M473 544h0M474 488h0M474 422h0M474 474h0M474 462h0M474 427h0M474 458h0M474 487h0M474 454h0M475 466h0M475 591h0M475 604h0M475 457h0M475 390h0M475 422h0M475 517h0M475 413h0M476 469h0M476 539h0M476 496h0M476 523h0M476 555h0M476 446h0M476 445h0M477 429h0M477 535h0M477 378h0M477 444h0M477 524h0M477 546h0M477 441h0M477 523h0M478 561h0M478 443h0M478 519h0M478 468h0M478 527h0M478 628h0M478 492h0M479 518h0M479 397h0M479 502h0M479 413h0M479 512h0M479 437h0M479 421h0M479 442h0M480 507h0M480 529h0M480 445h0M480 441h0M480 498h0M480 447h0M480 541h0M481 594h0M481 567h0M481 553h0M481 534h0M481 430h0M481 484h0M481 436h0M481 433h0M482 524h0M482 474h0M482 477h0M482 589h0M482 524h0M482 575h0M482 488h0M483 524h0M483 530h0M483 430h0M483 496h0M483 566h0M483 442h0M483 511h0M483 513h0M484 528h0M484 454h0M484 503h0M484 402h0M484 421h0M484 483h0M484 442h0M485 552h0M485 508h0M485 423h0M485 508h0M485 545h0M485 465h0M485 464h0M485 549h0M486 547h0M486 504h0M486 529h0M486 524h0M486 549h0M486 444h0M486 497h0M487 552h0M487 419h0M487 413h0M487 456h0M487 357h0M487 429h0M487 500h0M487 445h0M488 531h0M488 500h0M488 420h0M488 382h0M488 370h0M488 475h0M488 474h0M489 498h0M489 420h0M489 535h0M489 529h0M489 456h0M489 517h0M489 512h0M489 389h0M490 495h0M490 383h0M490 410h0M490 391h0M490 530h0M490 515h0M490 465h0M491 446h0M491 455h0M491 530h0M491 543h0M491 547h0M491 483h0M491 403h0M491 463h0M492 568h0M492 509h0M492 515h0M492 516h0M492 534h0M492 383h0M492 494h0M492 551h0M493 476h0M493 414h0M493 397h0M493 467h0M493 454h0M493 497h0M493 517h0M494 410h0M494 436h0M494 477h0M494 271h0M494 477h0M494 463h0M494 515h0M494 534h0M495 558h0M495 406h0M495 435h0M495 421h0M495 438h0M495 468h0M495 379h0M496 446h0M496 527h0M496 433h0M496 537h0M496 402h0M496 419h0M496 531h0M496 422h0M497 419h0M497 426h0M497 463h0M497 488h0M497 450h0M497 415h0M497 422h0M498 525h0M498 458h0M498 457h0M498 570h0M498 557h0M498 507h0M498 556h0M498 503h0M499 454h0M499 414h0M499 406h0M499 388h0M499 437h0M499 461h0M499 443h0M500 584h0M500 419h0M500 537h0M500 536h0M500 498h0M500 451h0M500 412h0M500 537h0M501 406h0M501 450h0M501 388h0M501 492h0M501 567h0M501 561h0M501 425h0M502 492h0M502 379h0M502 481h0M502 569h0M502 521h0M502 506h0M502 404h0M502 556h0M503 396h0M503 422h0M503 497h0M503 450h0M503 475h0M503 501h0M503 429h0M504 431h0M504 502h0M504 405h0M504 282h0M504 555h0M504 460h0M504 509h0M504 522h0M505 308h0M505 475h0M505 326h0M505 400h0M505 529h0M505 495h0M505 481h0M506 565h0M506 489h0M506 448h0M506 560h0M506 430h0M506 411h0M506 514h0M506 519h0M507 469h0M507 506h0M507 396h0M507 478h0M507 512h0M507 357h0M507 471h0M507 561h0M508 504h0M508 465h0M508 413h0M508 386h0M508 502h0M508 396h0M508 504h0M509 378h0M509 545h0M509 498h0M509 509h0M509 445h0M509 352h0M509 501h0M509 526h0M510 500h0M510 558h0M510 584h0M510 439h0M510 509h0M510 416h0M510 494h0M511 553h0M511 443h0M511 567h0M511 464h0M511 510h0M511 439h0M511 396h0M511 532h0M512 439h0M512 494h0M512 482h0M512 452h0M512 494h0M512 521h0M512 435h0M513 434h0M513 549h0M513 404h0M513 515h0M513 449h0M513 505h0M513 396h0M513 460h0M514 397h0M514 414h0M514 348h0M514 430h0M514 567h0M514 451h0M514 396h0M515 364h0M515 523h0M515 372h0M515 534h0M515 473h0M515 485h0M515 429h0M515 464h0M516 379h0M516 466h0M516 546h0M516 560h0M516 427h0M516 420h0M516 437h0M517 466h0M517 445h0M517 432h0M517 479h0M517 521h0M517 437h0M517 421h0M517 415h0M518 434h0M518 536h0M518 428h0M518 372h0M518 384h0M518 489h0M518 363h0M519 490h0M519 494h0M519 453h0M519 431h0M519 600h0M519 413h0M519 438h0M519 420h0M520 483h0M520 400h0M520 493h0M520 537h0M520 579h0M520 465h0M520 478h0M521 403h0M521 317h0M521 403h0M521 514h0M521 443h0M521 458h0M521 509h0M521 397h0M522 470h0M522 416h0M522 553h0M522 447h0M522 343h0M522 438h0M522 531h0M523 519h0M523 428h0M523 505h0M523 547h0M523 546h0M523 454h0M523 482h0M523 421h0M524 428h0M524 559h0M524 570h0M524 414h0M524 421h0M524 445h0M524 483h0M524 474h0M525 417h0M525 484h0M525 464h0M525 457h0M525 566h0M525 445h0M525 479h0M526 515h0M526 469h0M526 488h0M526 518h0M526 436h0M526 435h0M526 452h0M526 489h0M527 556h0M527 376h0M527 421h0M527 516h0M527 473h0M527 570h0M527 513h0M528 452h0M528 606h0M528 425h0M528 410h0M528 555h0M528 419h0M528 520h0M528 529h0M529 470h0M529 496h0M529 395h0M529 415h0M529 515h0M529 584h0M529 377h0M530 437h0M530 472h0M530 484h0M530 439h0M530 455h0M530 475h0M530 513h0M530 353h0M531 534h0M531 555h0M531 477h0M531 424h0M531 518h0M531 510h0M531 518h0M532 466h0M532 467h0M532 547h0M532 474h0M532 458h0M532 529h0M532 461h0M532 522h0M533 520h0M533 425h0M533 527h0M533 500h0M533 454h0M533 503h0M533 559h0M534 432h0M534 515h0M534 517h0M534 428h0M534 396h0M534 380h0M534 496h0M534 443h0M535 421h0M535 530h0M535 406h0M535 564h0M535 473h0M535 533h0M535 532h0M536 560h0M536 428h0M536 547h0M536 402h0M536 539h0M536 498h0M536 512h0M536 389h0M537 555h0M537 429h0M537 544h0M537 418h0M537 433h0M537 537h0M537 458h0M538 513h0M538 502h0M538 544h0M538 364h0M538 483h0M538 471h0M538 561h0M538 412h0M539 531h0M539 477h0M539 554h0M539 496h0M539 486h0M539 473h0M539 514h0M539 531h0M540 529h0M540 493h0M540 524h0M540 525h0M540 531h0M540 470h0M540 517h0M541 504h0M541 471h0M541 497h0M541 416h0M541 496h0M541 506h0M541 436h0M541 437h0M542 526h0M542 439h0M542 387h0M542 507h0M542 537h0M542 461h0M542 501h0M543 511h0M543 551h0M543 483h0M543 403h0M543 348h0M543 498h0M543 482h0M543 433h0M544 454h0M544 378h0M544 449h0M544 623h0M544 453h0M544 542h0M544 483h0M545 530h0M545 416h0M545 394h0M545 464h0M545 502h0M545 539h0M545 472h0M545 505h0M546 552h0M546 525h0M546 458h0M546 446h0M546 564h0M546 523h0M546 524h0M547 499h0M547 445h0M547 490h0M547 406h0M547 403h0M547 508h0M547 435h0M547 406h0M548 406h0M548 529h0M548 541h0M548 507h0M548 418h0M548 472h0M548 497h0M549 529h0M549 559h0M549 529h0M549 519h0M549 609h0M549 452h0M549 426h0M549 482h0M550 505h0M550 393h0M550 477h0M550 498h0M550 421h0M550 427h0M550 413h0M551 470h0M551 506h0M551 474h0M551 397h0M551 469h0M551 440h0M551 420h0M551 442h0M552 500h0M552 542h0M552 431h0M552 449h0M552 386h0M552 557h0M552 566h0M553 405h0M553 415h0M553 561h0M553 452h0M553 504h0M553 382h0M553 506h0M553 550h0M554 462h0M554 567h0M554 490h0M554 519h0M554 529h0M554 555h0M554 537h0M555 340h0M555 555h0M555 471h0M555 374h0M555 458h0M555 580h0M555 407h0M555 517h0M556 497h0M556 400h0M556 474h0M556 494h0M556 491h0M556 377h0M556 405h0M556 524h0M557 473h0M557 508h0M557 508h0M557 475h0M557 483h0M557 500h0M557 458h0M558 426h0M558 436h0M558 477h0M558 340h0M558 549h0M558 408h0M558 487h0M558 469h0M559 445h0M559 432h0M559 413h0M559 401h0M559 551h0M559 466h0M559 442h0M560 580h0M560 490h0M560 404h0M560 523h0M560 580h0M560 535h0M560 518h0M560 520h0M561 369h0M561 440h0M561 503h0M561 375h0M561 550h0M561 538h0M561 416h0M562 496h0M562 422h0M562 504h0M562 457h0M562 448h0M562 481h0M562 553h0M562 367h0M563 545h0M563 437h0M563 483h0M563 511h0M563 477h0M563 510h0M563 490h0M564 476h0M564 435h0M564 550h0M564 361h0M564 470h0M564 439h0M564 557h0M564 552h0M565 582h0M565 427h0M565 503h0M565 436h0M565 458h0M565 577h0M565 492h0M566 496h0M566 483h0M566 471h0M566 430h0M566 419h0M566 467h0M566 495h0M566 417h0M567 523h0M567 423h0M567 504h0M567 487h0M567 549h0M567 521h0M567 423h0M568 459h0M568 470h0M568 437h0M568 408h0M568 522h0M568 401h0M568 569h0M568 457h0M569 512h0M569 608h0M569 469h0M569 475h0M569 484h0M569 426h0M569 415h0M570 529h0M570 415h0M570 460h0M570 468h0M570 508h0M570 496h0M570 443h0M570 411h0M571 391h0M571 451h0M571 521h0M571 420h0M571 472h0M571 516h0M571 439h0M571 536h0M572 475h0M572 460h0M572 402h0M572 444h0M572 387h0M572 543h0M572 589h0M573 354h0M573 474h0M573 501h0M573 555h0M573 538h0M573 492h0M573 464h0M573 410h0M574 477h0M574 400h0M574 427h0M574 468h0M574 621h0M574 496h0M574 532h0M575 497h0M575 504h0M575 537h0M575 480h0M575 556h0M575 407h0M575 460h0M575 546h0M576 497h0M576 538h0M576 566h0M576 493h0M576 537h0M576 498h0M576 452h0M577 476h0M577 439h0M577 452h0M577 478h0M577 501h0M577 496h0M577 498h0M577 523h0M578 440h0M578 500h0M578 522h0M578 509h0M578 434h0M578 433h0M578 471h0M579 504h0M579 446h0M579 413h0M579 549h0M579 498h0M579 425h0M579 515h0M579 543h0M580 461h0M580 511h0M580 418h0M580 477h0M580 364h0M580 522h0M580 544h0M581 445h0M581 402h0M581 572h0M581 470h0M581 560h0M581 476h0M581 533h0M581 300h0M582 476h0M582 443h0M582 497h0M582 563h0M582 353h0M582 357h0M582 534h0M583 520h0M583 470h0M583 501h0M583 351h0M583 463h0M583 499h0M583 456h0M583 423h0M584 456h0M584 558h0M584 509h0M584 544h0M584 480h0M584 533h0M584 470h0M585 522h0M585 380h0M585 533h0M585 315h0M585 431h0M585 514h0M585 486h0M585 515h0M586 526h0M586 513h0M586 404h0M586 470h0M586 539h0M586 531h0M586 549h0M587 418h0M587 488h0M587 505h0M587 455h0M587 416h0M587 471h0M587 462h0M587 495h0M588 486h0M588 369h0M588 470h0M588 323h0M588 455h0M588 543h0M588 562h0M588 426h0M589 436h0M589 536h0M589 535h0M589 531h0M589 515h0M589 531h0M589 465h0M590 502h0M590 571h0M590 363h0M590 384h0M590 485h0M590 501h0M590 507h0M590 491h0M591 568h0M591 478h0M591 504h0M591 525h0M591 518h0M591 519h0M591 452h0M592 384h0M592 528h0M592 411h0M592 449h0M592 536h0M592 568h0M592 433h0M592 513h0M593 533h0M593 502h0M593 450h0M593 402h0M593 481h0M593 533h0M593 478h0M594 521h0M594 446h0M594 422h0M594 560h0M594 494h0M594 446h0M594 550h0M594 450h0M595 395h0M595 488h0M595 439h0M595 388h0M595 501h0M595 371h0M595 496h0M596 458h0M596 509h0M596 525h0M596 553h0M596 411h0M596 424h0M596 570h0M596 471h0M597 532h0M597 437h0M597 434h0M597 410h0M597 426h0M597 537h0M597 504h0M598 466h0M598 396h0M598 488h0M598 511h0M598 517h0M598 519h0M598 504h0M598 506h0M599 432h0M599 465h0M599 422h0M599 427h0M599 525h0M599 361h0M599 462h0M600 564h0M600 456h0M600 527h0M600 501h0M600 502h0M600 424h0M600 521h0M600 465h0M601 470h0M601 564h0M601 398h0M601 500h0M601 508h0M601 423h0M601 405h0M602 489h0M602 513h0M602 365h0M602 467h0M602 504h0M602 374h0M602 542h0M602 513h0M603 387h0M603 480h0M603 544h0M603 520h0M603 451h0M603 516h0M603 476h0M603 441h0M604 483h0M604 408h0M604 400h0M604 529h0M604 425h0M604 448h0M604 503h0M605 550h0M605 505h0M605 525h0M605 441h0M605 489h0M605 570h0M605 418h0M605 476h0M606 510h0M606 597h0M606 470h0M606 401h0M606 470h0M606 456h0M606 475h0M607 473h0M607 481h0M607 517h0M607 539h0M607 389h0M607 439h0M607 512h0M607 508h0M608 464h0M608 466h0M608 440h0M608 540h0M608 564h0M608 549h0M608 486h0M609 506h0M609 471h0M609 434h0M609 467h0M609 461h0M609 559h0M609 464h0M609 383h0M610 414h0M610 462h0M610 393h0M610 516h0M610 494h0M610 417h0M610 472h0M611 427h0M611 505h0M611 551h0M611 356h0M611 290h0M611 338h0M611 514h0M611 519h0M612 558h0M612 552h0M612 498h0M612 531h0M612 553h0M612 477h0M612 451h0M613 570h0M613 519h0M613 377h0M613 550h0M613 533h0M613 505h0M613 434h0M613 552h0M614 453h0M614 431h0M614 555h0M614 493h0M614 538h0M614 529h0M614 567h0M615 405h0M615 560h0M615 541h0M615 438h0M615 496h0M615 462h0M615 544h0M615 533h0M616 620h0M616 555h0M616 526h0M616 426h0M616 520h0M616 438h0M616 556h0M617 461h0M617 490h0M617 461h0M617 415h0M617 559h0M617 441h0M617 399h0M617 562h0M618 485h0M618 482h0M618 518h0M618 478h0M618 461h0M618 441h0M618 451h0M619 485h0M619 513h0M619 459h0M619 518h0M619 383h0M619 520h0M619 510h0M619 535h0M620 460h0M620 439h0M620 474h0M620 491h0M620 490h0M620 512h0M620 390h0M620 574h0M621 546h0M621 457h0M621 523h0M621 474h0M621 493h0M621 460h0M621 561h0M622 537h0M622 475h0M622 564h0M622 566h0M622 476h0M622 474h0M622 433h0M622 449h0M623 447h0M623 435h0M623 431h0M623 529h0M623 456h0M623 537h0M623 535h0M624 559h0M624 502h0M624 545h0M624 504h0M624 393h0M624 515h0M624 359h0M624 515h0M625 534h0M625 473h0M625 510h0M625 480h0M625 533h0M625 481h0M625 425h0M626 503h0M626 489h0M626 487h0M626 534h0M626 558h0M626 425h0M626 514h0M626 327h0M627 486h0M627 431h0M627 311h0M627 420h0M627 477h0M627 427h0M627 559h0M628 562h0M628 506h0M628 484h0M628 531h0M628 492h0M628 446h0M628 445h0M628 559h0M629 482h0M629 551h0M629 498h0M629 527h0M629 398h0M629 579h0M629 394h0M630 553h0M630 564h0M630 513h0M630 662h0M630 425h0M630 441h0M630 424h0M630 489h0M631 564h0M631 470h0M631 427h0M631 545h0M631 428h0M631 567h0M631 467h0M632 490h0M632 346h0M632 469h0M632 539h0M632 469h0M632 328h0M632 491h0M632 374h0M633 501h0M633 506h0M633 570h0M633 500h0M633 499h0M633 556h0M633 382h0M634 476h0M634 536h0M634 550h0M634 497h0M634 478h0M634 491h0M634 376h0M634 561h0M635 532h0M635 521h0M635 550h0M635 416h0M635 441h0M635 478h0M635 416h0M635 469h0M636 537h0M636 459h0M636 466h0M636 503h0M636 531h0M636 522h0M636 448h0M637 535h0M637 396h0M637 528h0M637 521h0M637 529h0M637 508h0M637 513h0M637 460h0M638 427h0M638 523h0M638 436h0M638 522h0M638 477h0M638 540h0M638 424h0M639 485h0M639 459h0M639 355h0M639 453h0M639 537h0M639 517h0M639 454h0M639 559h0M640 485h0M640 425h0M640 355h0M640 484h0M640 499h0M640 532h0M640 487h0M641 493h0M641 460h0M641 418h0M641 454h0M641 487h0M641 503h0M641 446h0M641 421h0M642 471h0M642 474h0M642 535h0M642 351h0M642 484h0M642 488h0M642 426h0M643 439h0M643 427h0M643 524h0M643 550h0M643 503h0M643 451h0M643 511h0M643 434h0M644 506h0M644 442h0M644 537h0M644 505h0M644 544h0M644 459h0M644 491h0M645 450h0M645 556h0M645 441h0M645 402h0M645 575h0M645 552h0M645 444h0M645 434h0M646 417h0M646 533h0M646 465h0M646 531h0M646 513h0M646 472h0M646 540h0M647 496h0M647 499h0M647 517h0M647 552h0M647 459h0M647 561h0M647 391h0M647 404h0M648 372h0M648 460h0M648 581h0M648 555h0M648 512h0M648 520h0M648 573h0M649 402h0M649 407h0M649 454h0M649 346h0M649 438h0M649 432h0M649 517h0M649 541h0M650 561h0M650 491h0M650 498h0M650 372h0M650 504h0M650 484h0M650 412h0M651 548h0M651 472h0M651 513h0M651 470h0M651 398h0M651 473h0M651 427h0M651 555h0M652 505h0M652 558h0M652 500h0M652 555h0M652 421h0M652 555h0M652 517h0M652 436h0M653 485h0M653 418h0M653 527h0M653 544h0M653 426h0M653 519h0M653 433h0M654 560h0M654 569h0M654 439h0M654 451h0M654 477h0M654 501h0M654 478h0M654 544h0M655 558h0M655 516h0M655 477h0M655 542h0M655 537h0M655 516h0M655 512h0M656 533h0M656 532h0M656 409h0M656 557h0M656 594h0M656 533h0M656 499h0M656 542h0M657 575h0M657 567h0M657 544h0M657 455h0M657 553h0M657 411h0M657 457h0M658 499h0M658 470h0M658 410h0M658 539h0M658 457h0M658 476h0M658 502h0M658 500h0M659 554h0M659 449h0M659 510h0M659 508h0M659 436h0M659 524h0M659 493h0M660 393h0M660 476h0M660 469h0M660 523h0M660 445h0M660 533h0M660 486h0M660 505h0M661 548h0M661 421h0M661 458h0M661 405h0M661 595h0M661 347h0M661 531h0M662 503h0M662 523h0M662 530h0M662 492h0M662 490h0M662 344h0M662 512h0M662 430h0M663 562h0M663 386h0M663 430h0M663 561h0M663 551h0M663 489h0M663 503h0M664 552h0M664 485h0M664 472h0M664 523h0M664 483h0M664 501h0M664 355h0M664 344h0M665 465h0M665 472h0M665 513h0M665 419h0M665 406h0M665 525h0M665 447h0M666 532h0M666 406h0M666 526h0M666 578h0M666 453h0M666 487h0M666 543h0M666 402h0M667 433h0M667 473h0M667 453h0M667 373h0M667 437h0M667 448h0M667 489h0M667 550h0M668 540h0M668 520h0M668 521h0M668 512h0M668 408h0M668 510h0M668 528h0M669 546h0M669 377h0M669 441h0M669 376h0M669 397h0M669 546h0M669 525h0M669 438h0M670 528h0M670 435h0M670 524h0M670 535h0M670 452h0M670 448h0M670 419h0M671 519h0M671 488h0M671 514h0M671 464h0M671 522h0M671 449h0M671 448h0M671 495h0M672 523h0M672 514h0M672 393h0M672 357h0M672 473h0M672 398h0M672 484h0M673 404h0M673 534h0M673 579h0M673 541h0M673 418h0M673 507h0M673 406h0M673 451h0M674 474h0M674 518h0M674 448h0M674 438h0M674 497h0M674 395h0M674 419h0M675 424h0M675 471h0M675 573h0M675 456h0M675 494h0M675 386h0M675 449h0M675 507h0M676 443h0M676 478h0M676 466h0M676 437h0M676 494h0M676 420h0M676 473h0M677 418h0M677 459h0M677 466h0M677 461h0M677 495h0M677 418h0M677 451h0M677 469h0M678 400h0M678 456h0M678 435h0M678 538h0M678 580h0M678 473h0M678 509h0M679 507h0M679 516h0M679 399h0M679 535h0M679 459h0M679 426h0M679 429h0M679 528h0M680 474h0M680 486h0M680 491h0M680 506h0M680 417h0M680 416h0M680 514h0M681 465h0M681 414h0M681 485h0M681 427h0M681 477h0M681 419h0M681 532h0M681 402h0M682 394h0M682 534h0M682 456h0M682 558h0M682 470h0M682 453h0M682 497h0M682 413h0M683 512h0M683 535h0M683 448h0M683 552h0M683 522h0M683 563h0M683 467h0M684 494h0M684 440h0M684 458h0M684 439h0M684 416h0M684 452h0M684 543h0M684 487h0M685 485h0M685 481h0M685 440h0M685 456h0M685 512h0M685 527h0M685 429h0M686 424h0M686 504h0M686 558h0M686 536h0M686 516h0M686 494h0M686 429h0M686 591h0M687 557h0M687 507h0M687 544h0M687 536h0M687 480h0M687 446h0M687 435h0M688 314h0M688 330h0M688 522h0M688 435h0M688 484h0M688 486h0M688 444h0M688 536h0M689 427h0M689 547h0M689 545h0M689 538h0M689 451h0M689 459h0M689 511h0M690 535h0M690 494h0M690 524h0M690 529h0M690 528h0M690 426h0M690 595h0M690 435h0M691 505h0M691 486h0M691 551h0M691 556h0M691 409h0M691 455h0M691 515h0M692 409h0M692 495h0M692 541h0M692 499h0M692 496h0M692 618h0M692 493h0M692 527h0M693 445h0M693 575h0M693 418h0M693 510h0M693 518h0M693 535h0M693 421h0M694 433h0M694 563h0M694 367h0M694 492h0M694 500h0M694 501h0M694 400h0M694 532h0M695 432h0M695 527h0M695 450h0M695 496h0M695 494h0M695 480h0M695 450h0M696 331h0M696 312h0M696 405h0M696 533h0M696 516h0M696 557h0M696 465h0M696 391h0M697 507h0M697 529h0M697 630h0M697 560h0M697 550h0M697 552h0M697 504h0M698 407h0M698 557h0M698 451h0M698 505h0M698 573h0M698 428h0M698 528h0M698 567h0M699 397h0M699 530h0M699 504h0M699 403h0M699 421h0M699 412h0M699 498h0M699 480h0M700 513h0M700 520h0M700 401h0M700 440h0M700 542h0M700 481h0M700 536h0M701 552h0M701 572h0M701 458h0M701 454h0M701 452h0M701 456h0M701 510h0M701 565h0M702 562h0M702 483h0M702 403h0M702 377h0M702 355h0M702 411h0M702 412h0M703 441h0M703 398h0M703 541h0M703 485h0M703 490h0M703 454h0M703 509h0M703 444h0M704 528h0M704 453h0M704 422h0M704 484h0M704 421h0M704 463h0M704 456h0M705 524h0M705 494h0M705 437h0M705 488h0M705 361h0M705 430h0M705 454h0M705 505h0M706 518h0M706 453h0M706 454h0M706 449h0M706 518h0M706 511h0M706 366h0M707 615h0M707 409h0M707 444h0M707 507h0M707 475h0M707 507h0M707 461h0M707 477h0M708 386h0M708 488h0M708 440h0M708 440h0M708 471h0M708 411h0M708 534h0M709 412h0M709 397h0M709 438h0M709 470h0M709 438h0M709 392h0M709 490h0M709 429h0M710 445h0M710 412h0M710 504h0M710 459h0M710 560h0M710 606h0M710 550h0M711 447h0M711 395h0M711 420h0M711 554h0M711 547h0M711 441h0M711 501h0M711 521h0M712 423h0M712 527h0M712 371h0M712 386h0M712 399h0M712 456h0M712 429h0M713 520h0M713 425h0M713 524h0M713 520h0M713 464h0M713 498h0M713 467h0M713 431h0M714 509h0M714 580h0M714 465h0M714 484h0M714 504h0M714 502h0M714 420h0M714 535h0M715 407h0M715 541h0M715 462h0M715 388h0M715 532h0M715 441h0M715 495h0M716 538h0M716 508h0M716 449h0M716 528h0M716 434h0M716 539h0M716 501h0M716 531h0M717 500h0M717 544h0M717 548h0M717 534h0M717 530h0M717 439h0M717 464h0M718 454h0M718 482h0M718 517h0M718 529h0M718 531h0M718 408h0M718 484h0M718 505h0M719 548h0M719 396h0M719 537h0M719 428h0M719 446h0M719 533h0M719 453h0M720 539h0M720 466h0M720 509h0M720 484h0M720 538h0M720 507h0M720 460h0M720 443h0M721 505h0M721 555h0M721 479h0M721 461h0M721 387h0M721 555h0M721 505h0M722 548h0M722 414h0M722 540h0M722 587h0M722 427h0M722 423h0M722 389h0M722 434h0M723 495h0M723 472h0M723 476h0M723 364h0M723 564h0M723 492h0M723 353h0M724 486h0M724 452h0M724 399h0M724 412h0M724 428h0M724 471h0M724 526h0M724 505h0M725 548h0M725 437h0M725 426h0M725 459h0M725 415h0M725 505h0M725 501h0M726 550h0M726 475h0M726 432h0M726 461h0M726 501h0M726 491h0M726 550h0M726 416h0M727 427h0M727 539h0M727 536h0M727 481h0M727 391h0M727 549h0M727 524h0M728 560h0M728 550h0M728 554h0M728 440h0M728 479h0M728 468h0M728 491h0M728 521h0M729 444h0M729 492h0M729 555h0M729 476h0M729 420h0M729 574h0M729 405h0M730 565h0M730 505h0M730 442h0M730 401h0M730 411h0M730 432h0M730 472h0M730 405h0M731 455h0M731 447h0M731 537h0M731 495h0M731 462h0M731 468h0M731 484h0M731 472h0M732 556h0M732 546h0M732 541h0M732 469h0M732 506h0M732 411h0M732 413h0M733 569h0M733 509h0M733 489h0M733 455h0M733 428h0M733 462h0M733 524h0M733 443h0M734 511h0M734 474h0M734 396h0M734 482h0M734 496h0M734 519h0M734 463h0M735 475h0M735 452h0M735 553h0M735 446h0M735 463h0M735 477h0M735 502h0M735 553h0M736 418h0M736 402h0M736 412h0M736 514h0M736 419h0M736 406h0M736 466h0M737 427h0M737 444h0M737 561h0M737 542h0M737 513h0M737 478h0M737 501h0M737 490h0M738 438h0M738 394h0M738 534h0M738 535h0M738 445h0M738 436h0M738 514h0M739 469h0M739 546h0M739 487h0M739 419h0M739 543h0M739 411h0M739 506h0M739 413h0M740 519h0M740 383h0M740 480h0M740 435h0M740 511h0M740 621h0M740 390h0M741 387h0M741 525h0M741 513h0M741 402h0M741 515h0M741 485h0M741 513h0M741 442h0M742 402h0M742 454h0M742 442h0M742 534h0M742 455h0M742 559h0M742 407h0M743 484h0M743 563h0M743 424h0M743 493h0M743 304h0M743 316h0M743 440h0M743 473h0M744 429h0M744 544h0M744 445h0M744 521h0M744 468h0M744 458h0M744 526h0M745 401h0M745 486h0M745 417h0M745 573h0M745 561h0M745 522h0M745 527h0M745 540h0M746 483h0M746 481h0M746 436h0M746 416h0M746 453h0M746 450h0M746 410h0M746 512h0M747 407h0M747 539h0M747 380h0M747 458h0M747 525h0M747 520h0M747 458h0M748 596h0M748 520h0M748 507h0M748 511h0M748 483h0M748 490h0M748 547h0M748 444h0M749 507h0M749 566h0M749 414h0M749 373h0M749 547h0M749 533h0M749 520h0M750 557h0M750 527h0M750 521h0M750 546h0M750 472h0M750 526h0M750 594h0M750 388h0M751 510h0M751 552h0M751 455h0M751 412h0M751 454h0M751 485h0M751 434h0M752 452h0M752 457h0M752 427h0M752 519h0M752 478h0M752 478h0M752 460h0M752 475h0M753 565h0M753 470h0M753 569h0M753 477h0M753 517h0M753 428h0M753 575h0M754 466h0M754 527h0M754 553h0M754 516h0M754 477h0M754 502h0M754 438h0M754 545h0M755 549h0M755 509h0M755 554h0M755 613h0M755 395h0M755 422h0M755 503h0M756 407h0M756 518h0M756 423h0M756 473h0M756 577h0M756 557h0M756 422h0M756 518h0M757 443h0M757 490h0M757 540h0M757 492h0M757 545h0M757 555h0M757 535h0M758 537h0M758 546h0M758 508h0M758 410h0M758 536h0M758 434h0M758 499h0M758 460h0M759 446h0M759 487h0M759 516h0M759 356h0M759 488h0M759 536h0M759 423h0M760 502h0M760 500h0M760 430h0M760 484h0M760 526h0M760 513h0M760 519h0M760 578h0M761 564h0M761 479h0M761 433h0M761 424h0M761 434h0M761 417h0M761 485h0M762 549h0M762 464h0M762 570h0M762 429h0M762 556h0M762 578h0M762 399h0M762 539h0M763 461h0M763 571h0M763 391h0M763 375h0M763 460h0M763 444h0M763 501h0M763 590h0M764 542h0M764 393h0M764 437h0M764 485h0M764 433h0M764 474h0M764 474h0M765 461h0M765 348h0M765 410h0M765 436h0M765 526h0M765 411h0M765 468h0M765 549h0M766 520h0M766 501h0M766 401h0M766 395h0M766 508h0M766 544h0M766 540h0M767 578h0M767 412h0M767 520h0M767 433h0M767 460h0M767 425h0M767 524h0M767 428h0M768 476h0M768 432h0M768 526h0M768 555h0M768 388h0M768 441h0M768 407h0M769 449h0M769 469h0M769 548h0M769 436h0M769 454h0M769 463h0M769 408h0M769 560h0M770 470h0M770 435h0M770 453h0M770 562h0M770 423h0M770 384h0M770 466h0M771 497h0M771 430h0M771 560h0M771 546h0M771 443h0M771 471h0M771 478h0M771 432h0M772 464h0M772 570h0M772 521h0M772 434h0M772 447h0M772 563h0M772 480h0M773 453h0M773 519h0M773 548h0M773 486h0M773 423h0M773 452h0M773 553h0M773 435h0M774 454h0M774 402h0M774 524h0M774 543h0M774 516h0M774 508h0M774 541h0M775 426h0M775 446h0M775 504h0M775 490h0M775 464h0M775 406h0M775 443h0M775 459h0M776 433h0M776 441h0M776 435h0M776 421h0M776 521h0M776 541h0M776 367h0M777 438h0M777 356h0M777 531h0M777 519h0M777 548h0M777 405h0M777 487h0M777 420h0M778 427h0M778 475h0M778 446h0M778 469h0M778 447h0M778 506h0M778 484h0M778 409h0M779 473h0M779 438h0M779 472h0M779 463h0M779 521h0M779 575h0M779 427h0M780 476h0M780 501h0M780 399h0M780 418h0M780 545h0M780 424h0M780 505h0M780 437h0M781 514h0M781 449h0M781 581h0M781 514h0M781 510h0M781 469h0M781 504h0M782 504h0M782 500h0M782 508h0M782 450h0M782 441h0M782 383h0M782 426h0M782 505h0M783 491h0M783 521h0M783 536h0M783 531h0M783 512h0M783 481h0M783 567h0M784 483h0M784 484h0M784 585h0M784 519h0M784 433h0M784 480h0M784 571h0M784 472h0M785 454h0M785 531h0M785 495h0M785 546h0M785 503h0M785 450h0M785 512h0M786 552h0M786 560h0M786 454h0M786 460h0M786 490h0M786 447h0M786 346h0M786 463h0M787 570h0M787 526h0M787 621h0M787 516h0M787 546h0M787 539h0M787 432h0M788 425h0M788 565h0M788 447h0M788 380h0M788 502h0M788 401h0M788 425h0M788 489h0M789 460h0M789 635h0M789 447h0M789 521h0M789 544h0M789 570h0M789 402h0M790 468h0M790 535h0M790 570h0M790 451h0M790 430h0M790 459h0M790 576h0M790 377h0M791 556h0M791 511h0M791 478h0M791 548h0M791 385h0M791 581h0M791 466h0M792 566h0M792 431h0M792 461h0M792 545h0M792 468h0M792 487h0M792 457h0M792 475h0M793 530h0M793 387h0M793 346h0M793 439h0M793 405h0M793 481h0M793 535h0M794 557h0M794 410h0M794 571h0M794 424h0M794 531h0M794 495h0M794 382h0M794 407h0M795 552h0M795 434h0M795 594h0M795 423h0M795 572h0M795 447h0M795 542h0M795 498h0M796 452h0M796 527h0M796 412h0M796 486h0M796 527h0M796 401h0M796 441h0M797 501h0M797 402h0M797 446h0M797 479h0M797 554h0M797 518h0M797 415h0M797 521h0M798 504h0M798 564h0M798 585h0M798 463h0M798 580h0M798 477h0M798 522h0M799 471h0M799 374h0M799 473h0M799 450h0M799 497h0M799 414h0M799 469h0M799 425h0M800 583h0M800 463h0M800 520h0M800 527h0M800 404h0M800 473h0M800 462h0M801 419h0M801 391h0M801 477h0M801 449h0M801 458h0M801 438h0M801 560h0M801 540h0M802 376h0M802 560h0M802 574h0M802 555h0M802 590h0M802 526h0M802 534h0M803 500h0M803 425h0M803 485h0M803 451h0M803 464h0M803 516h0M803 414h0M803 525h0M804 419h0M804 422h0M804 489h0M804 472h0M804 459h0M804 430h0M804 534h0M805 423h0M805 453h0M805 520h0M805 526h0M805 549h0M805 483h0M805 402h0M805 501h0M806 540h0M806 553h0M806 527h0M806 556h0M806 579h0M806 443h0M806 512h0M807 495h0M807 490h0M807 430h0M807 459h0M807 545h0M807 440h0M807 507h0M807 483h0M808 525h0M808 509h0M808 541h0M808 517h0M808 521h0M808 442h0M808 539h0M809 521h0M809 494h0M809 525h0M809 547h0M809 494h0M809 472h0M809 496h0M809 381h0M810 441h0M810 445h0M810 454h0M810 531h0M810 454h0M810 503h0M810 411h0M810 575h0M811 496h0M811 517h0M811 346h0M811 436h0M811 517h0M811 416h0M811 461h0M812 336h0M812 567h0M812 562h0M812 552h0M812 517h0M812 433h0M812 474h0M812 522h0M813 413h0M813 349h0M813 467h0M813 551h0M813 470h0M813 537h0M813 549h0M814 582h0M814 440h0M814 533h0M814 471h0M814 533h0M814 423h0M814 459h0M814 296h0M815 595h0M815 555h0M815 510h0M815 484h0M815 531h0M815 499h0M815 441h0M816 523h0M816 496h0M816 509h0M816 358h0M816 596h0M816 434h0M816 548h0M816 454h0M817 523h0M817 558h0M817 482h0M817 416h0M817 509h0M817 511h0M817 506h0M818 557h0M818 524h0M818 399h0M818 392h0M818 505h0M818 432h0M818 581h0M818 454h0M819 363h0M819 535h0M819 514h0M819 472h0M819 370h0M819 526h0M819 580h0M820 546h0M820 451h0M820 556h0M820 587h0M820 530h0M820 412h0M820 510h0M820 547h0M821 452h0M821 534h0M821 506h0M821 426h0M821 472h0M821 533h0M821 419h0M822 472h0M822 503h0M822 417h0M822 461h0M822 456h0M822 490h0M822 481h0M822 391h0M823 546h0M823 439h0M823 512h0M823 438h0M823 489h0M823 478h0M823 440h0M824 465h0M824 457h0M824 503h0M824 516h0M824 468h0M824 560h0M824 416h0M824 524h0M825 422h0M825 528h0M825 493h0M825 351h0M825 516h0M825 506h0M825 453h0M826 390h0M826 478h0M826 417h0M826 520h0M826 598h0M826 430h0M826 475h0M826 446h0M827 445h0M827 470h0M827 483h0M827 553h0M827 573h0M827 426h0M827 538h0M827 457h0M828 539h0M828 449h0M828 416h0M828 454h0M828 582h0M828 471h0M828 390h0M829 362h0M829 553h0M829 496h0M829 471h0M829 447h0M829 376h0M829 483h0M829 441h0M830 423h0M830 480h0M830 544h0M830 522h0M830 446h0M830 545h0M830 563h0M831 523h0M831 479h0M831 427h0M831 505h0M831 519h0M831 442h0M831 418h0M831 403h0M832 567h0M832 485h0M832 466h0M832 340h0M832 538h0M832 411h0M832 519h0M833 559h0M833 511h0M833 463h0M833 542h0M833 425h0M833 537h0M833 508h0M833 561h0M834 543h0M834 438h0M834 541h0M834 453h0M834 419h0M834 525h0M834 576h0M835 478h0M835 520h0M835 466h0M835 545h0M835 464h0M835 586h0M835 507h0M835 525h0M836 449h0M836 492h0M836 451h0M836 569h0M836 527h0M836 441h0M836 474h0M837 430h0M837 379h0M837 541h0M837 395h0M837 515h0M837 522h0M837 456h0M837 539h0M838 474h0M838 469h0M838 536h0M838 453h0M838 490h0M838 562h0M838 571h0M839 531h0M839 407h0M839 589h0M839 514h0M839 469h0M839 510h0M839 545h0M839 442h0M840 444h0M840 363h0M840 473h0M840 526h0M840 421h0M840 468h0M840 537h0M841 462h0M841 485h0M841 471h0M841 502h0M841 462h0M841 441h0M841 502h0M841 570h0M842 522h0M842 397h0M842 512h0M842 468h0M842 542h0M842 480h0M842 485h0M842 470h0M843 406h0M843 496h0M843 290h0M843 541h0M843 483h0M843 497h0M843 384h0M844 500h0M844 466h0M844 465h0M844 564h0M844 554h0M844 477h0M844 551h0M844 560h0M845 463h0M845 486h0M845 549h0M845 571h0M845 444h0M845 502h0M845 532h0M846 441h0M846 438h0M846 444h0M846 568h0M846 443h0M846 369h0M846 540h0M846 487h0M847 547h0M847 318h0M847 326h0M847 457h0M847 462h0M847 535h0M847 541h0M848 525h0M848 515h0M848 500h0M848 597h0M848 513h0M848 487h0M848 482h0M848 561h0M849 525h0M849 429h0M849 469h0M849 419h0M849 508h0M849 525h0M849 537h0M850 518h0M850 557h0M850 523h0M850 539h0M850 508h0M850 501h0M850 431h0M850 425h0M851 461h0M851 483h0M851 482h0M851 543h0M851 492h0M851 472h0M851 406h0M852 434h0M852 541h0M852 477h0M852 544h0M852 464h0M852 433h0M852 477h0M852 544h0M853 498h0M853 561h0M853 465h0M853 460h0M853 446h0M853 401h0M853 464h0M854 508h0M854 430h0M854 387h0M854 459h0M854 465h0M854 468h0M854 503h0M854 581h0M855 555h0M855 472h0M855 588h0M855 496h0M855 428h0M855 575h0M855 419h0M856 507h0M856 484h0M856 359h0M856 530h0M856 430h0M856 479h0M856 502h0M856 587h0M857 487h0M857 418h0M857 442h0M857 558h0M857 518h0M857 503h0M857 493h0M858 549h0M858 536h0M858 470h0M858 456h0M858 442h0M858 406h0M858 452h0M858 562h0M859 545h0M859 541h0M859 551h0M859 524h0M859 477h0M859 519h0M859 575h0M859 423h0M860 479h0M860 449h0M860 407h0M860 486h0M860 388h0M860 489h0M860 456h0M861 404h0M861 596h0M861 458h0M861 581h0M861 503h0M861 434h0M861 550h0M861 576h0M862 378h0M862 574h0M862 506h0M862 437h0M862 469h0M862 450h0M862 482h0M863 498h0M863 422h0M863 550h0M863 393h0M863 350h0M863 434h0M863 462h0M863 501h0M864 434h0M864 510h0M864 495h0M864 436h0M864 523h0M864 460h0M864 463h0M865 486h0M865 477h0M865 548h0M865 533h0M865 545h0M865 504h0M865 482h0M865 425h0M866 550h0M866 499h0M866 560h0M866 445h0M866 492h0M866 531h0M866 504h0M867 432h0M867 497h0M867 424h0M867 532h0M867 543h0M867 470h0M867 428h0M867 520h0M868 459h0M868 496h0M868 440h0M868 425h0M868 486h0M868 492h0M868 535h0M869 496h0M869 462h0M869 485h0M869 511h0M869 450h0M869 551h0M869 497h0M869 500h0M870 561h0M870 472h0M870 542h0M870 487h0M870 496h0M870 429h0M870 412h0M871 392h0M871 498h0M871 528h0M871 407h0M871 443h0M871 452h0M871 445h0M871 467h0M872 484h0M872 415h0M872 377h0M872 475h0M872 426h0M872 446h0M872 448h0M873 413h0M873 480h0M873 429h0M873 531h0M873 502h0M873 413h0M873 410h0M873 426h0M874 452h0M874 429h0M874 396h0M874 477h0M874 536h0M874 593h0M874 420h0M874 429h0M875 429h0M875 404h0M875 463h0M875 446h0M875 472h0M875 493h0M875 530h0M876 501h0M876 471h0M876 490h0M876 503h0M876 543h0M876 571h0M876 532h0M876 444h0M877 554h0M877 405h0M877 520h0M877 424h0M877 347h0M877 548h0M877 463h0M878 430h0M878 384h0M878 480h0M878 462h0M878 545h0M878 526h0M878 596h0M878 505h0M879 401h0M879 493h0M879 568h0M879 405h0M879 436h0M879 494h0M879 445h0M880 579h0M880 455h0M880 529h0M880 523h0M880 405h0M880 595h0M880 420h0M880 558h0M881 464h0M881 521h0M881 505h0M881 456h0M881 412h0M881 561h0M881 410h0M882 475h0M882 451h0M882 564h0M882 420h0M882 410h0M882 408h0M882 519h0M882 542h0M883 443h0M883 487h0M883 526h0M883 561h0M883 506h0M883 449h0M883 451h0M884 483h0M884 417h0M884 483h0M884 480h0M884 487h0M884 523h0M884 578h0M884 442h0M885 514h0M885 523h0M885 312h0M885 430h0M885 496h0M885 558h0M885 476h0M886 482h0M886 553h0M886 415h0M886 406h0M886 566h0M886 489h0M886 513h0M886 560h0M887 526h0M887 559h0M887 433h0M887 523h0M887 451h0M887 610h0M887 487h0M888 558h0M888 564h0M888 448h0M888 509h0M888 360h0M888 511h0M888 556h0M888 448h0M889 476h0M889 558h0M889 431h0M889 577h0M889 462h0M889 466h0M889 468h0M890 555h0M890 455h0M890 417h0M890 446h0M890 453h0M890 494h0M890 473h0M890 471h0M891 452h0M891 430h0M891 530h0M891 416h0M891 473h0M891 543h0M891 527h0M891 551h0M892 512h0M892 518h0M892 499h0M892 509h0M892 449h0M892 502h0M892 562h0M893 445h0M893 540h0M893 521h0M893 476h0M893 478h0M893 350h0M893 542h0M893 489h0M894 498h0M894 495h0M894 467h0M894 460h0M894 516h0M894 486h0M894 563h0M895 500h0M895 453h0M895 528h0M895 456h0M895 456h0M895 532h0M895 450h0M895 520h0M896 418h0M896 531h0M896 482h0M896 399h0M896 447h0M896 498h0M896 551h0M897 484h0M897 461h0M897 527h0M897 489h0M897 414h0M897 474h0M897 441h0M897 475h0M898 338h0M898 400h0M898 497h0M898 579h0M898 388h0M898 540h0M898 408h0M899 513h0M899 512h0M899 392h0M899 558h0M899 466h0M899 422h0M899 430h0M899 520h0M900 485h0M900 537h0M900 450h0M900 532h0M900 526h0M900 535h0M900 543h0M901 458h0M901 526h0M901 509h0M901 537h0M901 508h0M901 507h0M901 385h0M901 462h0M902 538h0M902 472h0M902 502h0M902 546h0M902 498h0M902 435h0M902 582h0M903 514h0M903 416h0M903 578h0M903 548h0M903 529h0M903 441h0M903 542h0M903 402h0M904 543h0M904 463h0M904 431h0M904 482h0M904 496h0M904 512h0M904 518h0M905 396h0M905 490h0M905 473h0M905 483h0M905 411h0M905 513h0M905 541h0M905 422h0M906 502h0M906 385h0M906 461h0M906 459h0M906 408h0M906 472h0M906 557h0M906 438h0M907 563h0M907 384h0M907 581h0M907 434h0M907 471h0M907 573h0M907 435h0M908 466h0M908 550h0M908 425h0M908 517h0M908 499h0M908 411h0M908 532h0M908 565h0M909 457h0M909 544h0M909 425h0M909 535h0M909 351h0M909 516h0M909 458h0M910 477h0M910 533h0M910 477h0M910 462h0M910 544h0M910 406h0M910 417h0M910 529h0M911 538h0M911 541h0M911 383h0M911 490h0M911 500h0M911 426h0M911 348h0M912 554h0M912 450h0M912 528h0M912 492h0M912 480h0M912 428h0M912 507h0M912 508h0M913 407h0M913 514h0M913 447h0M913 516h0M913 451h0M913 394h0M913 477h0M914 512h0M914 539h0M914 472h0M914 469h0M914 534h0M914 487h0M914 539h0M914 411h0M915 525h0M915 482h0M915 419h0M915 550h0M915 415h0M915 508h0M915 470h0M916 515h0M916 573h0M916 414h0M916 458h0M916 445h0M916 534h0M916 550h0M916 419h0M917 478h0M917 487h0M917 497h0M917 595h0M917 485h0M917 532h0M917 475h0M918 403h0M918 493h0M918 428h0M918 507h0M918 580h0M918 351h0M918 561h0M918 522h0M919 512h0M919 527h0M919 527h0M919 457h0M919 466h0M919 379h0M919 534h0M920 440h0M920 453h0M920 365h0M920 504h0M920 483h0M920 546h0M920 532h0M920 494h0M921 475h0M921 597h0M921 575h0M921 553h0M921 506h0M921 503h0M921 454h0M921 518h0M922 499h0M922 537h0M922 467h0M922 437h0M922 522h0M922 416h0M922 563h0M923 524h0M923 473h0M923 452h0M923 489h0M923 471h0M923 418h0M923 512h0M923 563h0M924 501h0M924 500h0M924 555h0M924 570h0M924 457h0M924 387h0M924 394h0M925 494h0M925 473h0M925 441h0M925 389h0M925 515h0M925 413h0M925 454h0M925 569h0M926 508h0M926 574h0M926 500h0M926 489h0M926 455h0M926 537h0M926 466h0M927 483h0M927 505h0M927 474h0M927 494h0M927 486h0M927 525h0M927 419h0M927 541h0M928 438h0M928 456h0M928 392h0M928 440h0M928 530h0M928 478h0M928 497h0M929 534h0M929 368h0M929 497h0M929 493h0M929 586h0M929 455h0M929 424h0M929 563h0M930 402h0M930 393h0M930 468h0M930 521h0M930 457h0M930 495h0M930 454h0M931 553h0M931 539h0M931 477h0M931 543h0M931 412h0M931 447h0M931 412h0M931 336h0M932 453h0M932 567h0M932 550h0M932 518h0M932 501h0M932 444h0M932 516h0M933 508h0M933 456h0M933 527h0M933 525h0M933 453h0M933 429h0M933 485h0M933 438h0M934 409h0M934 417h0M934 425h0M934 502h0M934 360h0M934 485h0M934 501h0M935 498h0M935 563h0M935 362h0M935 421h0M935 455h0M935 433h0M935 469h0M935 528h0M936 482h0M936 510h0M936 472h0M936 463h0M936 484h0M936 461h0M936 509h0M937 439h0M937 426h0M937 409h0M937 448h0M937 500h0M937 421h0M937 492h0M937 515h0M938 601h0M938 416h0M938 467h0M938 459h0M938 586h0M938 463h0M938 424h0M938 489h0M939 413h0M939 562h0M939 509h0M939 549h0M939 346h0M939 382h0M939 400h0M940 565h0M940 418h0M940 458h0M940 522h0M940 403h0M940 490h0M940 567h0M940 525h0M941 451h0M941 453h0M941 374h0M941 468h0M941 566h0M941 418h0M941 542h0M942 429h0M942 458h0M942 390h0M942 478h0M942 486h0M942 468h0M942 550h0M942 537h0M943 564h0M943 540h0M943 462h0M943 494h0M943 484h0M943 480h0M943 393h0M944 415h0M944 540h0M944 494h0M944 533h0M944 505h0M944 457h0M944 453h0M944 502h0M945 490h0M945 441h0M945 506h0M945 399h0M945 479h0M945 419h0M945 465h0M946 471h0M946 429h0M946 475h0M946 508h0M946 524h0M946 490h0M946 550h0M946 477h0M947 469h0M947 485h0M947 533h0M947 567h0M947 428h0M947 542h0M947 451h0M948 432h0M948 404h0M948 478h0M948 429h0M948 483h0M948 425h0M948 445h0M948 557h0M949 440h0M949 384h0M949 402h0M949 564h0M949 450h0M949 544h0M949 483h0M950 503h0M950 505h0M950 569h0M950 456h0M950 423h0M950 542h0M950 448h0M950 540h0M951 417h0M951 434h0M951 563h0M951 415h0M951 510h0M951 526h0M951 392h0M952 501h0M952 521h0M952 540h0M952 424h0M952 394h0M952 516h0M952 488h0M952 468h0M953 472h0M953 521h0M953 454h0M953 612h0M953 479h0M953 529h0M953 408h0M953 513h0M954 510h0M954 445h0M954 473h0M954 484h0M954 520h0M954 516h0M954 514h0M955 449h0M955 496h0M955 406h0M955 476h0M955 433h0M955 518h0M955 460h0M955 520h0M956 477h0M956 441h0M956 571h0M956 444h0M956 425h0M956 557h0M956 520h0M957 422h0M957 494h0M957 571h0M957 487h0M957 494h0M957 427h0M957 445h0M957 435h0M958 453h0M958 452h0M958 415h0M958 565h0M958 481h0M958 404h0M958 458h0M959 376h0M959 556h0M959 483h0M959 505h0M959 526h0M959 403h0M959 454h0M959 467h0M960 432h0M960 439h0M960 558h0M960 587h0M960 421h0M960 469h0M960 328h0M961 540h0M961 594h0M961 516h0M961 419h0M961 532h0M961 483h0M961 444h0M961 465h0M962 471h0M962 450h0M962 532h0M962 512h0M962 567h0M962 555h0M962 409h0M963 416h0M963 460h0M963 560h0M963 469h0M963 572h0M963 527h0M963 526h0M963 478h0M964 552h0M964 478h0M964 541h0M964 476h0M964 433h0M964 496h0M964 363h0M965 474h0M965 460h0M965 470h0M965 485h0M965 521h0M965 425h0M965 543h0M965 473h0M966 450h0M966 571h0M966 532h0M966 454h0M966 434h0M966 481h0M966 478h0M967 435h0M967 463h0M967 499h0M967 437h0M967 438h0M967 441h0M967 482h0M967 481h0M968 543h0M968 549h0M968 436h0M968 542h0M968 382h0M968 429h0M968 573h0M969 469h0M969 303h0M969 490h0M969 443h0M969 423h0M969 463h0M969 519h0M969 486h0M970 496h0M970 562h0M970 445h0M970 570h0M970 406h0M970 519h0M970 595h0M970 480h0M971 489h0M971 445h0M971 544h0M971 392h0M971 458h0M971 473h0M971 496h0M972 506h0M972 412h0M972 518h0M972 545h0M972 500h0M972 428h0M972 414h0M972 480h0M973 505h0M973 430h0M973 486h0M973 433h0M973 423h0M973 449h0M973 407h0M974 465h0M974 382h0M974 474h0M974 542h0M974 460h0M974 518h0M974 480h0M974 544h0M975 501h0M975 346h0M975 537h0M975 560h0M975 418h0M975 411h0M975 402h0M976 447h0M976 430h0M976 448h0M976 432h0M976 481h0M976 521h0M976 564h0M976 459h0M977 434h0M977 435h0M977 529h0M977 491h0M977 417h0M977 606h0M977 550h0M978 470h0M978 439h0M978 347h0M978 567h0M978 472h0M978 519h0M978 576h0M978 453h0M979 553h0M979 502h0M979 451h0M979 454h0M979 419h0M979 461h0M979 562h0M980 562h0M980 460h0M980 485h0M980 517h0M980 520h0M980 520h0M980 521h0M980 561h0M981 520h0M981 438h0M981 514h0M981 412h0M981 351h0M981 503h0M981 429h0M982 482h0M982 442h0M982 538h0M982 429h0M982 514h0M982 519h0M982 516h0M982 549h0M983 545h0M983 550h0M983 527h0M983 491h0M983 505h0M983 557h0M983 520h0M984 558h0M984 563h0M984 502h0M984 480h0M984 568h0M984 417h0M984 408h0M984 470h0M985 549h0M985 548h0M985 490h0M985 413h0M985 404h0M985 436h0M985 425h0M985 552h0M986 528h0M986 474h0M986 562h0M986 481h0M986 440h0M986 419h0M986 520h0M987 498h0M987 553h0M987 393h0M987 523h0M987 500h0M987 403h0M987 520h0M987 475h0M988 559h0M988 525h0M988 547h0M988 452h0M988 534h0M988 534h0M988 463h0M989 587h0M989 450h0M989 510h0M989 509h0M989 418h0M989 547h0M989 531h0M989 509h0M990 474h0M990 507h0M990 551h0M990 460h0M990 468h0M990 530h0M990 454h0M991 453h0M991 490h0M991 504h0M991 421h0M991 518h0M991 552h0M991 385h0M991 562h0M992 434h0M992 498h0M992 467h0M992 481h0M992 662h0M992 494h0M992 556h0M993 435h0M993 476h0M993 493h0M993 400h0M993 448h0M993 425h0M993 544h0M993 425h0M994 404h0M994 419h0M994 515h0M994 493h0M994 434h0M994 453h0M994 535h0M995 538h0M995 426h0M995 468h0M995 561h0M995 420h0M995 484h0M995 553h0M995 477h0M996 379h0M996 564h0M996 526h0M996 429h0M996 591h0M996 557h0M996 412h0M997 454h0M997 477h0M997 443h0M997 562h0M997 583h0M997 418h0M997 484h0M997 587h0M998 432h0M998 563h0M998 524h0M998 473h0M998 433h0M998 371h0M998 558h0M999 569h0M999 523h0M999 460h0M999 474h0M999 462h0M999 448h0M999 449h0M999 453h0M1000 460h0M1000 545h0M1000 437h0M1000 401h0M1000 555h0M1000 452h0M1000 567h0M1001 502h0M1001 492h0M1001 497h0M1001 499h0M1001 521h0M1001 470h0M1001 593h0M1001 486h0M1002 424h0M1002 352h0M1002 442h0M1002 560h0M1002 537h0M1002 429h0M1002 513h0M1002 496h0M1003 522h0M1003 420h0M1003 433h0M1003 474h0M1003 533h0M1003 449h0M1003 485h0M1004 460h0M1004 412h0M1004 456h0M1004 570h0M1004 538h0M1004 527h0M1004 550h0M1004 408h0M1005 578h0M1005 561h0M1005 477h0M1005 578h0M1005 523h0M1005 525h0M1005 514h0M1006 468h0M1006 431h0M1006 538h0M1006 516h0M1006 530h0M1006 403h0M1006 401h0M1006 422h0M1007 560h0M1007 526h0M1007 419h0M1007 448h0M1007 454h0M1007 459h0M1007 488h0M1008 489h0M1008 435h0M1008 558h0M1008 577h0M1008 597h0M1008 413h0M1008 478h0M1008 450h0M1009 488h0M1009 442h0M1009 482h0M1009 531h0M1009 528h0M1009 393h0M1009 530h0M1010 451h0M1010 473h0M1010 547h0M1010 480h0M1010 507h0M1010 485h0M1010 383h0M1010 372h0M1011 487h0M1011 590h0M1011 357h0M1011 387h0M1011 505h0M1011 569h0M1011 465h0M1012 424h0M1012 433h0M1012 580h0M1012 423h0M1012 486h0M1012 500h0M1012 516h0M1012 504h0M1013 532h0M1013 529h0M1013 441h0M1013 493h0M1013 428h0M1013 499h0M1013 563h0M1014 539h0M1014 562h0M1014 495h0M1014 408h0M1014 524h0M1014 484h0M1014 462h0M1014 438h0M1015 555h0M1015 476h0M1015 516h0M1015 480h0M1015 474h0M1015 489h0M1015 511h0M1016 433h0M1016 522h0M1016 524h0M1016 425h0M1016 511h0M1016 441h0M1016 508h0M1016 515h0M1017 443h0M1017 499h0M1017 393h0M1017 524h0M1017 493h0M1017 466h0M1017 400h0M1017 470h0M1018 381h0M1018 459h0M1018 469h0M1018 534h0M1018 483h0M1018 507h0M1018 416h0M1019 441h0M1019 514h0M1019 509h0M1019 520h0M1019 452h0M1019 413h0M1019 456h0M1019 535h0M1020 440h0M1020 550h0M1020 345h0M1020 362h0M1020 557h0M1020 431h0M1020 426h0M1021 534h0M1021 350h0M1021 455h0M1021 500h0M1021 396h0M1021 436h0M1021 455h0M1021 413h0M1022 424h0M1022 368h0M1022 546h0M1022 482h0M1022 576h0M1022 551h0M1022 435h0M1023 564h0M1023 582h0M1023 578h0M1023 483h0M1023 487h0M1023 541h0M1023 498h0M1023 401h0M1024 516h0M1024 455h0M1024 480h0M1024 548h0M1024 492h0M1024 524h0M1024 571h0M1025 445h0M1025 570h0M1025 527h0M1025 570h0M1025 304h0M1025 542h0M1025 530h0M1025 526h0M1026 544h0M1026 524h0M1026 399h0M1026 581h0M1026 441h0M1026 480h0M1026 499h0M1027 556h0M1027 432h0M1027 496h0M1027 529h0M1027 534h0M1027 424h0M1027 490h0M1027 428h0M1028 426h0M1028 552h0M1028 386h0M1028 441h0M1028 363h0M1028 515h0M1028 425h0M1029 410h0M1029 434h0M1029 469h0M1029 515h0M1029 453h0M1029 538h0M1029 541h0M1029 555h0M1030 459h0M1030 481h0M1030 463h0M1030 566h0M1030 454h0M1030 382h0M1030 460h0M1031 486h0M1031 537h0M1031 542h0M1031 581h0M1031 517h0M1031 517h0M1031 528h0M1031 336h0M1032 523h0M1032 418h0M1032 475h0M1032 518h0M1032 405h0M1032 487h0M1032 565h0M1033 539h0M1033 609h0M1033 534h0M1033 450h0M1033 465h0M1033 473h0M1033 440h0M1033 547h0M1034 558h0M1034 509h0M1034 423h0M1034 547h0M1034 464h0M1034 438h0M1034 552h0M1034 456h0M1035 486h0M1035 508h0M1035 465h0M1035 401h0M1035 507h0M1035 359h0M1035 497h0M1036 577h0M1036 446h0M1036 555h0M1036 413h0M1036 430h0M1036 427h0M1036 414h0M1036 483h0M1037 528h0M1037 477h0M1037 489h0M1037 549h0M1037 437h0M1037 493h0M1037 487h0M1038 535h0M1038 530h0M1038 421h0M1038 435h0M1038 577h0M1038 445h0M1038 412h0M1038 491h0M1039 439h0M1039 607h0M1039 446h0M1039 362h0M1039 427h0M1039 460h0M1039 512h0M1040 416h0M1040 452h0M1040 559h0M1040 550h0M1040 587h0M1040 436h0M1040 575h0M1040 505h0M1041 452h0M1041 325h0M1041 478h0M1041 569h0M1041 570h0M1041 468h0M1041 539h0M1042 398h0M1042 531h0M1042 513h0M1042 376h0M1042 430h0M1042 436h0M1042 428h0M1042 551h0M1043 523h0M1043 438h0M1043 420h0M1043 460h0M1043 504h0M1043 474h0M1043 488h0M1044 541h0M1044 433h0M1044 381h0M1044 496h0M1044 538h0M1044 532h0M1044 392h0M1044 417h0M1045 558h0M1045 431h0M1045 509h0M1045 440h0M1045 459h0M1045 510h0M1045 463h0M1046 548h0M1046 505h0M1046 420h0M1046 506h0M1046 496h0M1046 504h0M1046 447h0M1046 547h0M1047 461h0M1047 503h0M1047 535h0M1047 533h0M1047 491h0M1047 547h0M1047 486h0M1048 517h0M1048 485h0M1048 386h0M1048 538h0M1048 499h0M1048 475h0M1048 512h0M1048 522h0M1049 431h0M1049 543h0M1049 453h0M1049 550h0M1049 481h0M1049 471h0M1049 571h0M1049 477h0M1050 522h0M1050 545h0M1050 527h0M1050 422h0M1050 364h0M1050 486h0M1050 523h0M1051 445h0M1051 563h0M1051 416h0M1051 564h0M1051 593h0M1051 515h0M1051 486h0M1051 571h0M1052 503h0M1052 419h0M1052 375h0M1052 583h0M1052 521h0M1052 359h0M1052 427h0M1053 541h0M1053 519h0M1053 455h0M1053 503h0M1053 547h0M1053 501h0M1053 457h0M1053 541h0M1054 538h0M1054 477h0M1054 445h0M1054 454h0M1054 516h0M1054 464h0M1054 556h0M1055 572h0M1055 476h0M1055 547h0M1055 559h0M1055 350h0M1055 409h0M1055 563h0M1055 481h0M1056 592h0M1056 471h0M1056 487h0M1056 494h0M1056 571h0M1056 443h0M1056 478h0M1057 475h0M1057 486h0M1057 426h0M1057 503h0M1057 418h0M1057 543h0M1057 500h0M1057 527h0M1058 529h0M1058 390h0M1058 422h0M1058 295h0M1058 515h0M1058 503h0M1058 405h0M1059 478h0M1059 533h0M1059 435h0M1059 483h0M1059 503h0M1059 434h0M1059 418h0M1059 541h0M1060 414h0M1060 502h0M1060 551h0M1060 451h0M1060 515h0M1060 469h0M1060 450h0M1061 557h0M1061 442h0M1061 470h0M1061 536h0M1061 519h0M1061 572h0M1061 399h0M1061 482h0M1062 533h0M1062 441h0M1062 446h0M1062 468h0M1062 508h0M1062 533h0M1062 422h0M1063 428h0M1063 358h0M1063 495h0M1063 510h0M1063 503h0M1063 399h0M1063 495h0M1063 444h0M1064 363h0M1064 547h0M1064 575h0M1064 552h0M1064 496h0M1064 468h0M1064 409h0M1065 430h0M1065 438h0M1065 488h0M1065 525h0M1065 558h0M1065 510h0M1065 447h0M1065 518h0M1066 563h0M1066 436h0M1066 571h0M1066 502h0M1066 386h0M1066 368h0M1066 473h0M1066 428h0M1067 537h0M1067 438h0M1067 510h0M1067 553h0M1067 511h0M1067 560h0M1067 474h0M1068 460h0M1068 462h0M1068 511h0M1068 457h0M1068 551h0M1068 534h0M1068 456h0M1068 468h0M1069 388h0M1069 513h0M1069 544h0M1069 419h0M1069 430h0M1069 507h0M1069 549h0M1070 462h0M1070 548h0M1070 504h0M1070 447h0M1070 455h0M1070 562h0M1070 546h0M1070 495h0M1071 444h0M1071 539h0M1071 404h0M1071 583h0M1071 489h0M1071 454h0M1071 398h0M1072 487h0M1072 427h0M1072 488h0M1072 534h0M1072 515h0M1072 466h0M1072 483h0M1072 473h0M1073 463h0M1073 380h0M1073 501h0M1073 468h0M1073 585h0M1073 526h0M1073 449h0M1074 451h0M1074 477h0M1074 444h0M1074 472h0M1074 513h0M1074 563h0M1074 412h0M1074 409h0M1075 460h0M1075 540h0M1075 470h0M1075 478h0M1075 411h0M1075 581h0M1075 430h0M1076 504h0M1076 402h0M1076 458h0M1076 544h0M1076 391h0M1076 499h0M1076 560h0M1076 380h0M1077 523h0M1077 457h0M1077 490h0M1077 555h0M1077 567h0M1077 360h0M1077 478h0M1078 437h0M1078 606h0M1078 523h0M1078 453h0M1078 484h0M1078 564h0M1078 515h0M1078 490h0M1079 518h0M1079 418h0M1079 513h0M1079 566h0M1079 458h0M1079 353h0M1079 483h0M1080 517h0M1080 525h0M1080 454h0M1080 563h0M1080 493h0M1080 554h0M1080 467h0M1080 407h0M1081 456h0M1081 402h0M1081 486h0M1081 532h0M1081 524h0M1081 437h0M1081 530h0M1081 472h0M1082 522h0M1082 411h0M1082 505h0M1082 512h0M1082 528h0M1082 507h0M1082 415h0M1083 503h0M1083 448h0M1083 522h0M1083 534h0M1083 571h0M1083 466h0M1083 487h0M1083 527h0M1084 513h0M1084 506h0M1084 577h0M1084 525h0M1084 512h0M1084 478h0M1084 427h0M1085 456h0M1085 497h0M1085 450h0M1085 508h0M1085 544h0M1085 458h0M1085 452h0M1085 458h0M1086 374h0M1086 465h0M1086 415h0M1086 374h0M1086 416h0M1086 490h0M1086 485h0M1087 480h0M1087 526h0M1087 535h0M1087 426h0M1087 470h0M1087 425h0M1087 502h0M1087 477h0M1088 467h0M1088 563h0M1088 471h0M1088 497h0M1088 479h0M1088 542h0M1088 487h0M1089 348h0M1089 459h0M1089 431h0M1089 414h0M1089 406h0M1089 480h0M1089 532h0M1089 499h0M1090 566h0M1090 469h0M1090 524h0M1090 493h0M1090 430h0M1090 561h0M1090 460h0M1091 581h0M1091 485h0M1091 399h0M1091 561h0M1091 489h0M1091 543h0M1091 560h0M1091 455h0M1092 544h0M1092 433h0M1092 485h0M1092 519h0M1092 565h0M1092 444h0M1092 537h0M1093 452h0M1093 604h0M1093 482h0M1093 578h0M1093 489h0M1093 591h0M1093 424h0M1093 451h0M1094 565h0M1094 523h0M1094 377h0M1094 477h0M1094 524h0M1094 564h0M1094 529h0M1095 406h0M1095 438h0M1095 502h0M1095 446h0M1095 502h0M1095 556h0M1095 417h0M1095 585h0M1096 440h0M1096 434h0M1096 562h0M1096 584h0M1096 426h0M1096 594h0M1096 512h0M1097 545h0M1097 491h0M1097 524h0M1097 497h0M1097 579h0M1097 551h0M1097 524h0M1097 484h0M1098 447h0M1098 437h0M1098 448h0M1098 540h0M1098 457h0M1098 506h0M1098 594h0M1098 419h0M1099 454h0M1099 562h0M1099 484h0M1099 439h0M1099 476h0M1099 519h0M1099 431h0M1100 521h0M1100 571h0M1100 574h0M1100 410h0M1100 547h0M1100 444h0M1100 550h0M1100 492h0M1101 521h0M1101 498h0M1101 577h0M1101 531h0M1101 477h0M1101 487h0M1101 559h0M1102 428h0M1102 437h0M1102 508h0M1102 516h0M1102 572h0M1102 553h0M1102 525h0M1102 357h0M1103 439h0M1103 449h0M1103 541h0M1103 484h0M1103 563h0M1103 409h0M1103 500h0M1104 439h0M1104 554h0M1104 491h0M1104 444h0M1104 307h0M1104 581h0M1104 502h0M1104 439h0M1105 526h0M1105 401h0M1105 475h0M1105 420h0M1105 589h0M1105 467h0M1105 591h0M1106 544h0M1106 433h0M1106 547h0M1106 462h0M1106 529h0M1106 422h0M1106 450h0M1106 563h0M1107 558h0M1107 543h0M1107 558h0M1107 424h0M1107 446h0M1107 433h0M1107 504h0M1108 499h0M1108 480h0M1108 440h0M1108 561h0M1108 542h0M1108 463h0M1108 579h0M1108 406h0M1109 574h0M1109 413h0M1109 544h0M1109 531h0M1109 505h0M1109 459h0M1109 425h0M1110 492h0M1110 407h0M1110 410h0M1110 417h0M1110 512h0M1110 380h0M1110 571h0M1110 510h0M1111 496h0M1111 543h0M1111 414h0M1111 503h0M1111 571h0M1111 549h0M1111 576h0M1112 475h0M1112 503h0M1112 495h0M1112 479h0M1112 383h0M1112 514h0M1112 495h0M1112 472h0M1113 418h0M1113 434h0M1113 454h0M1113 551h0M1113 365h0M1113 428h0M1113 520h0M1113 430h0M1114 432h0M1114 450h0M1114 438h0M1114 461h0M1114 440h0M1114 451h0M1114 564h0M1115 546h0M1115 548h0M1115 479h0M1115 556h0M1115 466h0M1115 405h0M1115 421h0M1115 562h0M1116 467h0M1116 418h0M1116 437h0M1116 570h0M1116 529h0M1116 522h0M1116 596h0M1117 462h0M1117 534h0M1117 402h0M1117 416h0M1117 480h0M1117 504h0M1117 413h0M1117 532h0M1118 423h0M1118 458h0M1118 585h0M1118 456h0M1118 426h0M1118 592h0M1118 416h0M1119 418h0M1119 470h0M1119 409h0M1119 498h0M1119 461h0M1119 504h0M1119 489h0M1119 445h0M1120 487h0M1120 365h0M1120 509h0M1120 529h0M1120 506h0M1120 427h0M1120 461h0M1121 486h0M1121 415h0M1121 494h0M1121 514h0M1121 406h0M1121 535h0M1121 441h0M1121 552h0M1122 475h0M1122 470h0M1122 436h0M1122 570h0M1122 597h0M1122 404h0M1122 423h0M1123 536h0M1123 470h0M1123 562h0M1123 479h0M1123 506h0M1123 466h0M1123 520h0M1123 545h0M1124 430h0M1124 438h0M1124 566h0M1124 417h0M1124 369h0M1124 523h0M1124 428h0M1125 394h0M1125 520h0M1125 536h0M1125 469h0M1125 380h0M1125 471h0M1125 492h0M1125 432h0M1126 531h0M1126 538h0M1126 458h0M1126 537h0M1126 441h0M1126 468h0M1126 456h0M1127 525h0M1127 482h0M1127 546h0M1127 541h0M1127 587h0M1127 351h0M1127 487h0M1127 458h0M1128 571h0M1128 531h0M1128 579h0M1128 432h0M1128 566h0M1128 471h0M1128 433h0M1129 537h0M1129 356h0M1129 410h0M1129 556h0M1129 548h0M1129 446h0M1129 466h0M1129 487h0M1130 437h0M1130 427h0M1130 475h0M1130 529h0M1130 428h0M1130 492h0M1130 482h0M1130 528h0M1131 571h0M1131 246h0M1131 516h0M1131 445h0M1131 454h0M1131 461h0M1131 473h0M1132 449h0M1132 416h0M1132 455h0M1132 531h0M1132 474h0M1132 529h0M1132 519h0M1132 519h0M1133 511h0M1133 523h0M1133 519h0M1133 411h0M1133 525h0M1133 455h0M1133 569h0M1134 525h0M1134 567h0M1134 450h0M1134 401h0M1134 558h0M1134 435h0M1134 504h0M1134 424h0M1135 531h0M1135 522h0M1135 475h0M1135 561h0M1135 408h0M1135 538h0M1135 567h0M1136 454h0M1136 446h0M1136 524h0M1136 406h0M1136 490h0M1136 465h0M1136 547h0M1136 554h0M1137 521h0M1137 388h0M1137 497h0M1137 418h0M1137 466h0M1137 482h0M1137 489h0M1138 482h0M1138 480h0M1138 450h0M1138 505h0M1138 487h0M1138 576h0M1138 423h0M1138 570h0M1139 429h0M1139 455h0M1139 503h0M1139 403h0M1139 569h0M1139 502h0M1139 520h0M1140 488h0M1140 466h0M1140 437h0M1140 430h0M1140 563h0M1140 465h0M1140 483h0M1140 450h0M1141 460h0M1141 510h0M1141 538h0M1141 542h0M1141 445h0M1141 512h0M1141 508h0M1142 485h0M1142 500h0M1142 436h0M1142 528h0M1142 510h0M1142 349h0M1142 422h0M1142 487h0M1143 428h0M1143 565h0M1143 481h0M1143 510h0M1143 431h0M1143 553h0M1143 405h0M1144 471h0M1144 482h0M1144 503h0M1144 507h0M1144 521h0M1144 564h0M1144 473h0M1144 543h0M1145 569h0M1145 529h0M1145 548h0M1145 503h0M1145 509h0M1145 607h0M1145 478h0M1145 458h0M1146 529h0M1146 459h0M1146 422h0M1146 407h0M1146 445h0M1146 466h0M1146 433h0M1147 546h0M1147 435h0M1147 448h0M1147 457h0M1147 486h0M1147 570h0M1147 547h0M1147 458h0M1148 418h0M1148 435h0M1148 542h0M1148 428h0M1148 492h0M1148 548h0M1148 534h0M1149 510h0M1149 555h0M1149 377h0M1149 529h0M1149 468h0M1149 477h0M1149 506h0M1149 442h0M1150 424h0M1150 412h0M1150 502h0M1150 556h0M1150 578h0M1150 522h0M1150 564h0M1151 458h0M1151 484h0M1151 390h0M1151 420h0M1151 421h0M1151 493h0M1151 409h0M1151 468h0M1152 494h0M1152 459h0M1152 409h0M1152 544h0M1152 469h0M1152 526h0M1152 408h0M1153 574h0M1153 355h0M1153 516h0M1153 475h0M1153 462h0M1153 407h0M1153 341h0M1153 517h0M1154 546h0M1154 529h0M1154 541h0M1154 545h0M1154 425h0M1154 491h0M1154 547h0M1155 500h0M1155 530h0M1155 556h0M1155 478h0M1155 480h0M1155 452h0M1155 354h0M1155 431h0M1156 511h0M1156 479h0M1156 438h0M1156 519h0M1156 432h0M1156 518h0M1156 390h0M1157 560h0M1157 466h0M1157 520h0M1157 461h0M1157 483h0M1157 459h0M1157 473h0M1157 537h0M1158 430h0M1158 572h0M1158 406h0M1158 479h0M1158 508h0M1158 449h0M1158 486h0M1159 425h0M1159 416h0M1159 519h0M1159 426h0M1159 580h0M1159 463h0M1159 450h0M1159 485h0M1160 542h0M1160 425h0M1160 441h0M1160 508h0M1160 562h0M1160 355h0M1160 460h0M1160 430h0M1161 440h0M1161 561h0M1161 512h0M1161 508h0M1161 516h0M1161 510h0M1161 443h0M1162 419h0M1162 515h0M1162 507h0M1162 455h0M1162 445h0M1162 522h0M1162 391h0M1162 606h0M1163 428h0M1163 535h0M1163 479h0M1163 493h0M1163 434h0M1163 354h0M1163 441h0M1164 448h0M1164 542h0M1164 403h0M1164 445h0M1164 541h0M1164 405h0M1164 461h0M1164 373h0M1165 486h0M1165 559h0M1165 474h0M1165 442h0M1165 579h0M1165 418h0M1165 532h0M1166 484h0M1166 421h0M1166 453h0M1166 337h0M1166 415h0M1166 564h0M1166 481h0M1166 521h0M1167 443h0M1167 562h0M1167 545h0M1167 481h0M1167 570h0M1167 466h0M1167 446h0M1168 416h0M1168 549h0M1168 485h0M1168 442h0M1168 615h0M1168 483h0M1168 531h0M1168 417h0M1169 477h0M1169 419h0M1169 562h0M1169 473h0M1169 401h0M1169 540h0M1169 489h0M1170 460h0M1170 492h0M1170 473h0M1170 539h0M1170 484h0M1170 488h0M1170 464h0M1170 407h0M1171 495h0M1171 507h0M1171 538h0M1171 473h0M1171 523h0M1171 421h0M1171 519h0M1172 551h0M1172 504h0M1172 408h0M1172 506h0M1172 525h0M1172 419h0M1172 453h0M1172 506h0M1173 536h0M1173 517h0M1173 504h0M1173 454h0M1173 480h0M1173 417h0M1173 412h0M1174 453h0M1174 508h0M1174 351h0M1174 462h0M1174 363h0M1174 438h0M1174 441h0M1174 514h0M1175 452h0M1175 504h0M1175 460h0M1175 555h0M1175 442h0M1175 448h0M1175 546h0M1176 516h0M1176 524h0M1176 511h0M1176 443h0M1176 418h0M1176 454h0M1176 562h0M1176 413h0M1177 398h0M1177 567h0M1177 460h0M1177 460h0M1177 474h0M1177 451h0M1177 557h0M1177 507h0M1178 523h0M1178 484h0M1178 553h0M1178 419h0M1178 555h0M1178 580h0M1178 484h0M1179 583h0M1179 615h0M1179 560h0M1179 446h0M1179 556h0M1179 467h0M1179 507h0M1179 528h0M1180 520h0M1180 511h0M1180 504h0M1180 451h0M1180 553h0M1180 351h0M1180 453h0M1181 550h0M1181 453h0M1181 493h0M1181 576h0M1181 461h0M1181 539h0M1181 422h0M1181 416h0M1182 418h0M1182 410h0M1182 563h0M1182 578h0M1182 512h0M1182 522h0M1182 518h0M1183 600h0M1183 347h0M1183 451h0M1183 412h0M1183 459h0M1183 418h0M1183 571h0M1183 585h0M1184 480h0M1184 439h0M1184 512h0M1184 347h0M1184 580h0M1184 453h0M1184 442h0M1185 511h0M1185 438h0M1185 453h0M1185 435h0M1185 461h0M1185 538h0M1185 552h0M1185 543h0M1186 571h0M1186 407h0M1186 456h0M1186 480h0M1186 516h0M1186 478h0M1186 491h0M1187 451h0M1187 544h0M1187 533h0M1187 558h0M1187 507h0M1187 415h0M1187 386h0M1187 586h0M1188 439h0M1188 494h0M1188 396h0M1188 395h0M1188 458h0M1188 519h0M1188 427h0M1189 492h0M1189 413h0M1189 509h0M1189 557h0M1189 463h0M1189 476h0M1189 383h0M1189 319h0M1190 442h0M1190 464h0M1190 447h0M1190 475h0M1190 543h0M1190 391h0M1190 468h0M1191 478h0M1191 471h0M1191 411h0M1191 503h0M1191 582h0M1191 386h0M1191 409h0M1191 522h0M1192 505h0M1192 538h0M1192 516h0M1192 411h0M1192 486h0M1192 467h0M1192 569h0M1192 507h0M1193 566h0M1193 521h0M1193 527h0M1193 514h0M1193 366h0M1193 437h0M1193 521h0M1194 441h0M1194 526h0M1194 575h0M1194 520h0M1194 435h0M1194 518h0M1194 433h0M1194 446h0M1195 519h0M1195 538h0M1195 546h0M1195 512h0M1195 474h0M1195 515h0M1195 409h0M1196 392h0M1196 448h0M1196 560h0M1196 406h0M1196 564h0M1196 436h0M1196 487h0M1196 497h0M1197 561h0M1197 547h0M1197 507h0M1197 421h0M1197 349h0M1197 548h0M1197 476h0M1198 549h0M1198 565h0M1198 473h0M1198 489h0M1198 452h0M1198 388h0M1198 579h0M1198 487h0M1199 447h0M1199 471h0M1199 474h0M1199 497h0M1199 479h0M1199 543h0M1199 480h0M1200 426h0M1200 519h0M1200 495h0M1200 489h0M1200 435h0M1200 540h0M1200 507h0M1200 446h0M1201 515h0M1201 439h0M1201 508h0M1201 528h0M1201 532h0M1201 524h0M1201 489h0M1202 498h0M1202 364h0M1202 277h0M1202 292h0M1202 306h0M1202 336h0M1202 404h0M1202 438h0M1203 537h0M1203 402h0M1203 525h0M1203 544h0M1203 439h0M1203 545h0M1203 411h0M1204 348h0M1204 560h0M1204 493h0M1204 370h0M1204 474h0M1204 486h0M1204 467h0M1204 349h0M1205 486h0M1205 463h0M1205 411h0M1205 572h0M1205 523h0M1205 555h0M1205 545h0M1206 527h0M1206 405h0M1206 510h0M1206 454h0M1206 520h0M1206 405h0M1206 519h0M1206 478h0M1207 517h0M1207 560h0M1207 527h0M1207 491h0M1207 511h0M1207 555h0M1207 424h0M1208 526h0M1208 585h0M1208 449h0M1208 479h0M1208 455h0M1208 531h0M1208 558h0M1208 477h0M1209 512h0M1209 474h0M1209 516h0M1209 512h0M1209 550h0M1209 530h0M1209 529h0M1209 474h0M1210 505h0M1210 427h0M1210 546h0M1210 415h0M1210 518h0M1210 492h0M1210 430h0M1211 434h0M1211 435h0M1211 471h0M1211 528h0M1211 480h0M1211 462h0M1211 582h0M1211 598h0M1212 420h0M1212 442h0M1212 426h0M1212 534h0M1212 418h0M1212 547h0M1212 553h0M1213 519h0M1213 517h0M1213 571h0M1213 442h0M1213 418h0M1213 561h0M1213 536h0M1213 528h0M1214 523h0M1214 505h0M1214 536h0M1214 501h0M1214 517h0M1214 417h0M1214 548h0M1215 558h0M1215 434h0M1215 549h0M1215 478h0M1215 467h0M1215 500h0M1215 430h0M1215 520h0M1216 556h0M1216 569h0M1216 441h0M1216 545h0M1216 291h0M1216 442h0M1216 393h0M1217 587h0M1217 406h0M1217 414h0M1217 396h0M1217 566h0M1217 378h0M1217 458h0M1217 539h0M1218 390h0M1218 578h0M1218 588h0M1218 571h0M1218 488h0M1218 387h0M1218 341h0M1219 515h0M1219 407h0M1219 538h0M1219 489h0M1219 547h0M1219 496h0M1219 499h0M1219 541h0M1220 545h0M1220 448h0M1220 512h0M1220 461h0M1220 552h0M1220 376h0M1220 567h0M1221 548h0M1221 466h0M1221 527h0M1221 545h0M1221 517h0M1221 428h0M1221 422h0M1221 528h0M1222 466h0M1222 551h0M1222 470h0M1222 443h0M1222 414h0M1222 528h0M1222 492h0M1223 402h0M1223 394h0M1223 418h0M1223 498h0M1223 443h0M1223 534h0M1223 470h0M1223 512h0M1224 547h0M1224 535h0M1224 414h0M1224 518h0M1224 522h0M1224 535h0M1224 433h0M1224 559h0M1225 526h0M1225 471h0M1225 432h0M1225 437h0M1225 432h0M1225 338h0M1225 520h0M1226 526h0M1226 527h0M1226 511h0M1226 444h0M1226 532h0M1226 529h0M1226 477h0M1226 365h0M1227 514h0M1227 447h0M1227 571h0M1227 504h0M1227 507h0M1227 568h0M1227 496h0M1228 421h0M1228 541h0M1228 535h0M1228 592h0M1228 451h0M1228 495h0M1228 477h0M1228 389h0M1229 511h0M1229 615h0M1229 519h0M1229 431h0M1229 500h0M1229 539h0M1229 558h0M1230 520h0M1230 375h0M1230 466h0M1230 459h0M1230 505h0M1230 528h0M1230 374h0M1230 515h0M1231 532h0M1231 497h0M1231 426h0M1231 563h0M1231 524h0M1231 460h0M1231 496h0M1232 472h0M1232 545h0M1232 480h0M1232 526h0M1232 548h0M1232 436h0M1232 503h0M1232 425h0M1233 428h0M1233 453h0M1233 518h0M1233 449h0M1233 558h0M1233 447h0M1233 511h0M1234 451h0M1234 575h0M1234 489h0M1234 546h0M1234 548h0M1234 505h0M1234 530h0M1234 454h0M1235 514h0M1235 515h0M1235 346h0M1235 482h0M1235 423h0M1235 455h0M1235 470h0M1236 478h0M1236 444h0M1236 485h0M1236 479h0M1236 469h0M1236 551h0M1236 445h0M1236 522h0M1237 510h0M1237 468h0M1237 494h0M1237 563h0M1237 414h0M1237 465h0M1237 483h0M1238 492h0M1238 444h0M1238 439h0M1238 485h0M1238 264h0M1238 429h0M1238 465h0M1238 469h0M1239 403h0M1239 542h0M1239 479h0M1239 574h0M1239 495h0M1239 494h0M1239 475h0M1240 479h0M1240 430h0M1240 486h0M1240 571h0M1240 541h0M1240 577h0M1240 436h0M1240 532h0M1241 582h0M1241 377h0M1241 423h0M1241 454h0M1241 454h0M1241 447h0M1241 441h0M1241 516h0M1242 415h0M1242 434h0M1242 540h0M1242 503h0M1242 532h0M1242 491h0M1242 477h0M1243 508h0M1243 572h0M1243 421h0M1243 423h0M1243 515h0M1243 523h0M1243 467h0M1243 418h0M1244 491h0M1244 446h0M1244 454h0M1244 572h0M1244 401h0M1244 424h0M1244 437h0M1245 441h0M1245 519h0M1245 435h0M1245 604h0M1245 378h0M1245 485h0M1245 497h0M1245 495h0M1246 488h0M1246 438h0M1246 467h0M1246 585h0M1246 489h0M1246 462h0M1246 535h0M1247 515h0M1247 509h0M1247 559h0M1247 521h0M1247 358h0M1247 537h0M1247 530h0M1247 582h0M1248 571h0M1248 526h0M1248 520h0M1248 400h0M1248 446h0M1248 564h0M1248 548h0M1249 441h0M1249 442h0M1249 462h0M1249 515h0M1249 468h0M1249 480h0M1249 593h0M1249 467h0M1250 547h0M1250 423h0M1250 455h0M1250 462h0M1250 587h0M1250 469h0M1250 415h0M1251 584h0M1251 546h0M1251 491h0M1251 481h0M1251 497h0M1251 532h0M1251 441h0M1251 433h0M1252 516h0M1252 456h0M1252 558h0M1252 458h0M1252 495h0M1252 529h0M1252 506h0M1253 547h0M1253 550h0M1253 391h0M1253 471h0M1253 404h0M1253 475h0M1253 405h0M1253 493h0M1254 391h0M1254 551h0M1254 542h0M1254 456h0M1254 542h0M1254 545h0M1254 472h0M1255 578h0M1255 407h0M1255 568h0M1255 435h0M1255 422h0M1255 516h0M1255 536h0M1255 546h0M1256 442h0M1256 419h0M1256 561h0M1256 570h0M1256 467h0M1256 447h0M1256 561h0M1256 508h0M1257 360h0M1257 517h0M1257 548h0M1257 524h0M1257 412h0M1257 544h0M1257 404h0M1258 570h0M1258 547h0M1258 454h0M1258 442h0M1258 316h0M1258 484h0M1258 549h0M1258 441h0M1259 542h0M1259 413h0M1259 496h0M1259 510h0M1259 402h0M1259 480h0M1259 574h0M1260 463h0M1260 504h0M1260 497h0M1260 606h0M1260 469h0M1260 450h0M1260 508h0M1260 591h0M1261 576h0M1261 572h0M1261 530h0M1261 528h0M1261 531h0M1261 472h0M1261 514h0M1262 413h0M1262 457h0M1262 438h0M1262 451h0M1262 542h0M1262 500h0M1262 539h0M1262 597h0M1263 436h0M1263 561h0M1263 441h0M1263 508h0M1263 559h0M1263 417h0M1263 459h0M1264 437h0M1264 475h0M1264 406h0M1264 516h0" stroke="#00ffff" stroke-width="6.6" stroke-linecap="round"/></g>
  <g>
    <rect x="1217" y="90.5" width="21.5" height="21.5" fill="#e9e9e9" stroke="#111" stroke-width="2"/>
    <path d="M1222 102.2H1233.5 M1227.7 96.8V107.5" stroke="#111" stroke-width="2"/>
    <rect x="1243" y="90.5" width="21.5" height="21.5" fill="#e9e9e9" stroke="#111" stroke-width="2"/>
    <path d="M1249 102.2H1259" stroke="#777" stroke-width="2"/>
  </g>
  </g>
</svg>
</body></html>
